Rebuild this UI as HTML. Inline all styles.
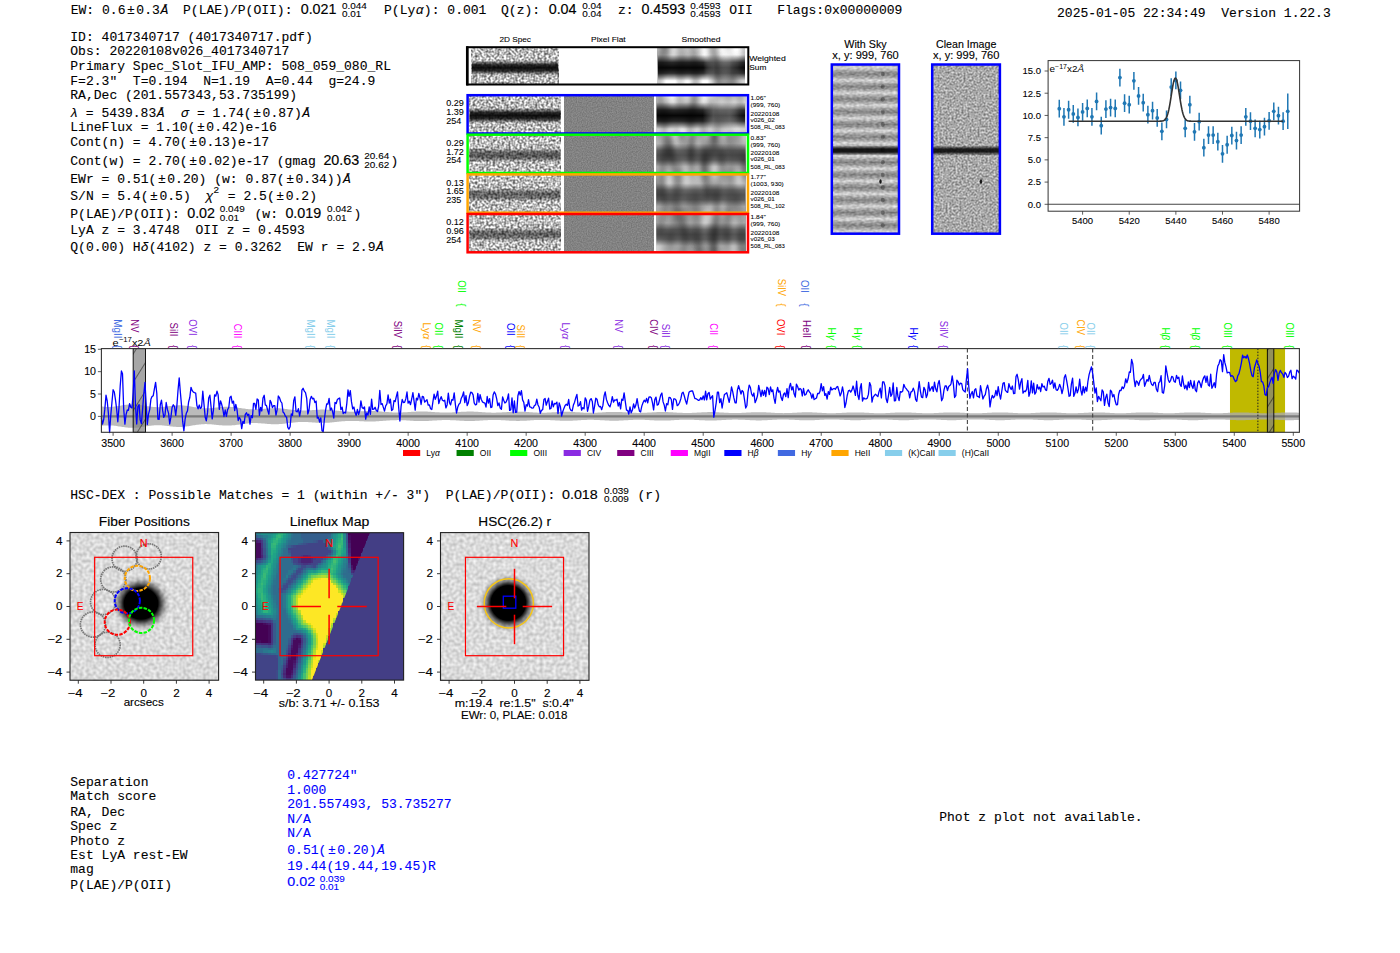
<!DOCTYPE html><html><head><meta charset="utf-8"><title>ELiXer report</title><style>html,body{margin:0;padding:0;background:#fff;width:1400px;height:953px;overflow:hidden}svg{display:block}</style></head><body><svg width="1400" height="953" viewBox="0 0 1400 953" style="white-space:pre"><defs><filter id="nz2d" x="0" y="0" width="1" height="1" color-interpolation-filters="sRGB"><feTurbulence type="fractalNoise" baseFrequency="0.45" numOctaves="1" seed="3"/><feColorMatrix type="matrix" values="1.4 0 0 0 0.03 1.4 0 0 0 0.03 1.4 0 0 0 0.03 0 0 0 0 1"/></filter><filter id="nzsm" x="0" y="0" width="1" height="1" color-interpolation-filters="sRGB"><feTurbulence type="fractalNoise" baseFrequency="0.09 0.03" numOctaves="1" seed="5"/><feGaussianBlur stdDeviation="1.0"/><feColorMatrix type="matrix" values="1.0 0 0 0 0.27 1.0 0 0 0 0.27 1.0 0 0 0 0.27 0 0 0 0 1"/></filter><filter id="nzpf" x="0" y="0" width="1" height="1" color-interpolation-filters="sRGB"><feTurbulence type="fractalNoise" baseFrequency="0.8" numOctaves="1" seed="9"/><feColorMatrix type="matrix" values="0.22 0 0 0 0.4 0.22 0 0 0 0.4 0.22 0 0 0 0.4 0 0 0 0 1"/></filter><filter id="nzcl" x="0" y="0" width="1" height="1" color-interpolation-filters="sRGB"><feTurbulence type="fractalNoise" baseFrequency="0.5" numOctaves="1" seed="11"/><feColorMatrix type="matrix" values="0.7 0 0 0 0.31 0.7 0 0 0 0.31 0.7 0 0 0 0.31 0 0 0 0 1"/></filter><filter id="nzsky" x="0" y="0" width="1" height="1" color-interpolation-filters="sRGB"><feTurbulence type="fractalNoise" baseFrequency="0.3 0.5" numOctaves="1" seed="13"/><feGaussianBlur stdDeviation="0.4"/><feColorMatrix type="matrix" values="1.6 0 0 0 -0.3 1.6 0 0 0 -0.3 1.6 0 0 0 -0.3 0 0 0 0 1"/></filter><filter id="nzbg" x="0" y="0" width="1" height="1" color-interpolation-filters="sRGB"><feTurbulence type="fractalNoise" baseFrequency="0.3" numOctaves="1" seed="17"/><feColorMatrix type="matrix" values="0.35 0 0 0 0.68 0.35 0 0 0 0.68 0.35 0 0 0 0.68 0 0 0 0 1"/></filter><linearGradient id="bandA" x1="0" y1="0" x2="0" y2="1"><stop offset="0.000" stop-color="#000" stop-opacity="0.00"/><stop offset="0.346" stop-color="#000" stop-opacity="0.00"/><stop offset="0.465" stop-color="#000" stop-opacity="0.79"/><stop offset="0.550" stop-color="#000" stop-opacity="0.93"/><stop offset="0.635" stop-color="#000" stop-opacity="0.79"/><stop offset="0.754" stop-color="#000" stop-opacity="0.00"/><stop offset="1.000" stop-color="#000" stop-opacity="0.00"/></linearGradient><linearGradient id="bandB" x1="0" y1="0" x2="0" y2="1"><stop offset="0.000" stop-color="#000" stop-opacity="0.00"/><stop offset="0.358" stop-color="#000" stop-opacity="0.00"/><stop offset="0.470" stop-color="#000" stop-opacity="0.47"/><stop offset="0.550" stop-color="#000" stop-opacity="0.55"/><stop offset="0.630" stop-color="#000" stop-opacity="0.47"/><stop offset="0.742" stop-color="#000" stop-opacity="0.00"/><stop offset="1.000" stop-color="#000" stop-opacity="0.00"/></linearGradient><linearGradient id="bandC" x1="0" y1="0" x2="0" y2="1"><stop offset="0.000" stop-color="#000" stop-opacity="0.00"/><stop offset="0.370" stop-color="#000" stop-opacity="0.00"/><stop offset="0.475" stop-color="#000" stop-opacity="0.42"/><stop offset="0.550" stop-color="#000" stop-opacity="0.50"/><stop offset="0.625" stop-color="#000" stop-opacity="0.42"/><stop offset="0.730" stop-color="#000" stop-opacity="0.00"/><stop offset="1.000" stop-color="#000" stop-opacity="0.00"/></linearGradient><filter id="nzsm2" x="0" y="0" width="1" height="1" color-interpolation-filters="sRGB"><feTurbulence type="fractalNoise" baseFrequency="0.1 0.03" numOctaves="1" seed="21"/><feGaussianBlur stdDeviation="1.2"/><feColorMatrix type="matrix" values="0.9 0 0 0 0.15 0.9 0 0 0 0.15 0.9 0 0 0 0.15 0 0 0 0 1"/></filter><linearGradient id="bandSA" x1="0" y1="0" x2="0" y2="1"><stop offset="0.000" stop-color="#000" stop-opacity="0.00"/><stop offset="0.190" stop-color="#000" stop-opacity="0.00"/><stop offset="0.400" stop-color="#000" stop-opacity="0.82"/><stop offset="0.550" stop-color="#000" stop-opacity="0.97"/><stop offset="0.700" stop-color="#000" stop-opacity="0.82"/><stop offset="0.910" stop-color="#000" stop-opacity="0.00"/><stop offset="1.000" stop-color="#000" stop-opacity="0.00"/></linearGradient><linearGradient id="bandSB" x1="0" y1="0" x2="0" y2="1"><stop offset="0.000" stop-color="#000" stop-opacity="0.00"/><stop offset="0.238" stop-color="#000" stop-opacity="0.00"/><stop offset="0.420" stop-color="#000" stop-opacity="0.47"/><stop offset="0.550" stop-color="#000" stop-opacity="0.55"/><stop offset="0.680" stop-color="#000" stop-opacity="0.47"/><stop offset="0.862" stop-color="#000" stop-opacity="0.00"/><stop offset="1.000" stop-color="#000" stop-opacity="0.00"/></linearGradient><linearGradient id="mgL" x1="0" y1="0" x2="1" y2="0"><stop offset="0" stop-color="#fff"/><stop offset="0.52" stop-color="#fff"/><stop offset="0.64" stop-color="#999"/><stop offset="0.82" stop-color="#aaa"/><stop offset="0.95" stop-color="#eee"/><stop offset="1" stop-color="#fff"/></linearGradient><mask id="mL" maskContentUnits="objectBoundingBox"><rect width="1" height="1" fill="url(#mgL)"/></mask><linearGradient id="strp" x1="0" y1="0" x2="0" y2="1"><stop offset="0" stop-color="#000" stop-opacity="0"/><stop offset="0.25" stop-color="#000" stop-opacity="0.28"/><stop offset="0.5" stop-color="#000" stop-opacity="0.45"/><stop offset="0.75" stop-color="#000" stop-opacity="0.28"/><stop offset="1" stop-color="#000" stop-opacity="0"/></linearGradient><pattern id="skyp" x="0" y="67.8" width="70" height="12.6" patternUnits="userSpaceOnUse"><rect width="70" height="12.6" fill="url(#strp)"/></pattern><linearGradient id="bandS" x1="0" y1="0" x2="0" y2="1"><stop offset="0" stop-color="#000" stop-opacity="0"/><stop offset="0.35" stop-color="#000" stop-opacity="0.85"/><stop offset="0.65" stop-color="#000" stop-opacity="0.85"/><stop offset="1" stop-color="#000" stop-opacity="0"/></linearGradient><pattern id="hatch" width="15" height="15" patternUnits="userSpaceOnUse" patternTransform="rotate(-58)"><line x1="0" y1="0" x2="15" y2="0" stroke="#000" stroke-width="0.9"/></pattern><radialGradient id="blobF" cx="0.5" cy="0.5" r="0.5"><stop offset="0" stop-color="#000" stop-opacity="1"/><stop offset="0.58" stop-color="#000" stop-opacity="1"/><stop offset="0.72" stop-color="#000" stop-opacity="0.55"/><stop offset="0.87" stop-color="#000" stop-opacity="0.15"/><stop offset="1" stop-color="#000" stop-opacity="0"/></radialGradient><radialGradient id="blobH" cx="0.5" cy="0.5" r="0.5"><stop offset="0" stop-color="#000" stop-opacity="1"/><stop offset="0.6" stop-color="#000" stop-opacity="1"/><stop offset="0.75" stop-color="#000" stop-opacity="0.45"/><stop offset="0.9" stop-color="#000" stop-opacity="0.12"/><stop offset="1" stop-color="#000" stop-opacity="0"/></radialGradient></defs><text transform="translate(70.70,14.30) scale(1,1.04)" font-family="Liberation Mono" font-size="13.04" fill="#000" stroke="#000" stroke-width="0.1">EW: 0.6<tspan dx="1.55">±</tspan><tspan dx="1.55">0</tspan>.3<tspan dx="0.55" font-style="italic">Å</tspan></text>
<text transform="translate(183.00,14.30) scale(1,1.04)" font-family="Liberation Mono" font-size="13.04" fill="#000" stroke="#000" stroke-width="0.1">P(LAE)/P(OII):</text>
<text transform="translate(300.70,14.30) scale(1,1.04)" font-family="Liberation Sans" font-size="13.25" fill="#000" textLength="35.78" lengthAdjust="spacingAndGlyphs" stroke="#000" stroke-width="0.15">0.021</text>
<text x="342.00" y="8.60" font-family="Liberation Sans" font-size="9.22" fill="#000" textLength="24.91" lengthAdjust="spacingAndGlyphs" stroke="#000" stroke-width="0.10">0.044</text>
<text x="342.00" y="17.40" font-family="Liberation Sans" font-size="9.22" fill="#000" textLength="19.37" lengthAdjust="spacingAndGlyphs" stroke="#000" stroke-width="0.10">0.01</text>
<text transform="translate(384.00,14.30) scale(1,1.04)" font-family="Liberation Mono" font-size="13.04" fill="#000" stroke="#000" stroke-width="0.1">P(Ly<tspan dx="0.38" font-style="italic">α</tspan><tspan dx="0.38">)</tspan>: 0.001</text>
<text transform="translate(501.00,14.30) scale(1,1.04)" font-family="Liberation Mono" font-size="13.04" fill="#000" stroke="#000" stroke-width="0.1">Q(z):</text>
<text transform="translate(548.70,14.30) scale(1,1.04)" font-family="Liberation Sans" font-size="13.25" fill="#000" textLength="27.83" lengthAdjust="spacingAndGlyphs" stroke="#000" stroke-width="0.15">0.04</text>
<text x="582.20" y="8.60" font-family="Liberation Sans" font-size="9.22" fill="#000" textLength="19.37" lengthAdjust="spacingAndGlyphs" stroke="#000" stroke-width="0.10">0.04</text>
<text x="582.20" y="17.40" font-family="Liberation Sans" font-size="9.22" fill="#000" textLength="19.37" lengthAdjust="spacingAndGlyphs" stroke="#000" stroke-width="0.10">0.04</text>
<text transform="translate(618.00,14.30) scale(1,1.04)" font-family="Liberation Mono" font-size="13.04" fill="#000" stroke="#000" stroke-width="0.1">z:</text>
<text transform="translate(641.40,14.30) scale(1,1.04)" font-family="Liberation Sans" font-size="13.25" fill="#000" textLength="43.74" lengthAdjust="spacingAndGlyphs" stroke="#000" stroke-width="0.15">0.4593</text>
<text x="690.20" y="8.60" font-family="Liberation Sans" font-size="9.22" fill="#000" textLength="30.44" lengthAdjust="spacingAndGlyphs" stroke="#000" stroke-width="0.10">0.4593</text>
<text x="690.20" y="17.40" font-family="Liberation Sans" font-size="9.22" fill="#000" textLength="30.44" lengthAdjust="spacingAndGlyphs" stroke="#000" stroke-width="0.10">0.4593</text>
<text transform="translate(729.30,14.30) scale(1,1.04)" font-family="Liberation Mono" font-size="13.04" fill="#000" stroke="#000" stroke-width="0.1">OII</text>
<text transform="translate(777.20,14.30) scale(1,1.04)" font-family="Liberation Mono" font-size="13.04" fill="#000" stroke="#000" stroke-width="0.1">Flags:0x00000009</text>
<text transform="translate(1057.00,16.90) scale(1,1.04)" font-family="Liberation Mono" font-size="13.04" fill="#000" stroke="#000" stroke-width="0.1">2025-01-05 22:34:49  Version 1.22.3</text>
<text transform="translate(70.30,40.60) scale(1,1.04)" font-family="Liberation Mono" font-size="13.04" fill="#000" stroke="#000" stroke-width="0.1">ID: 4017340717 (4017340717.pdf)</text>
<text transform="translate(70.30,54.80) scale(1,1.04)" font-family="Liberation Mono" font-size="13.04" fill="#000" stroke="#000" stroke-width="0.1">Obs: 20220108v026_4017340717</text>
<text transform="translate(70.30,69.80) scale(1,1.04)" font-family="Liberation Mono" font-size="13.04" fill="#000" stroke="#000" stroke-width="0.1">Primary Spec_Slot_IFU_AMP: 508_059_080_RL</text>
<text transform="translate(70.30,84.80) scale(1,1.04)" font-family="Liberation Mono" font-size="13.04" fill="#000" stroke="#000" stroke-width="0.1">F=2.3"  T=0.194  N=1.19  A=0.44  g=24.9</text>
<text transform="translate(70.30,99.40) scale(1,1.04)" font-family="Liberation Mono" font-size="13.04" fill="#000" stroke="#000" stroke-width="0.1">RA,Dec (201.557343,53.735199)</text>
<text transform="translate(70.30,116.80) scale(1,1.04)" font-family="Liberation Mono" font-size="13.04" fill="#000" stroke="#000" stroke-width="0.1"><tspan dx="-0.05" font-style="italic">λ</tspan><tspan dx="-0.05"> </tspan>= 5439.83<tspan dx="0.55" font-style="italic">Å</tspan><tspan dx="0.55"> </tspan> <tspan dx="0.22" font-style="italic">σ</tspan><tspan dx="0.22"> </tspan>= 1.74(<tspan dx="1.55">±</tspan><tspan dx="1.55">0</tspan>.87)<tspan dx="0.55" font-style="italic">Å</tspan></text>
<text transform="translate(70.30,131.20) scale(1,1.04)" font-family="Liberation Mono" font-size="13.04" fill="#000" stroke="#000" stroke-width="0.1">LineFlux = 1.10(<tspan dx="1.55">±</tspan><tspan dx="1.55">0</tspan>.42)e-16</text>
<text transform="translate(70.30,146.40) scale(1,1.04)" font-family="Liberation Mono" font-size="13.04" fill="#000" stroke="#000" stroke-width="0.1">Cont(n) = 4.70(<tspan dx="1.55">±</tspan><tspan dx="1.55">0</tspan>.13)e-17</text>
<text transform="translate(70.30,164.80) scale(1,1.04)" font-family="Liberation Mono" font-size="13.04" fill="#000" stroke="#000" stroke-width="0.1">Cont(w) = 2.70(<tspan dx="1.55">±</tspan><tspan dx="1.55">0</tspan>.02)e-17 (gmag</text>
<text transform="translate(70.30,182.50) scale(1,1.04)" font-family="Liberation Mono" font-size="13.04" fill="#000" stroke="#000" stroke-width="0.1">EWr = 0.51(<tspan dx="1.55">±</tspan><tspan dx="1.55">0</tspan>.20) (w: 0.87(<tspan dx="1.55">±</tspan><tspan dx="1.55">0</tspan>.34))<tspan dx="0.55" font-style="italic">Å</tspan></text>
<text transform="translate(70.30,200.30) scale(1,1.04)" font-family="Liberation Mono" font-size="13.04" fill="#000" stroke="#000" stroke-width="0.1">S/N = 5.4(<tspan dx="1.55">±</tspan><tspan dx="1.55">0</tspan>.5)</text>
<text transform="translate(70.30,218.00) scale(1,1.04)" font-family="Liberation Mono" font-size="13.04" fill="#000" stroke="#000" stroke-width="0.1">P(LAE)/P(OII):</text>
<text transform="translate(70.30,234.40) scale(1,1.04)" font-family="Liberation Mono" font-size="13.04" fill="#000" stroke="#000" stroke-width="0.1">LyA z = 3.4748  OII z = 0.4593</text>
<text transform="translate(70.30,251.40) scale(1,1.04)" font-family="Liberation Mono" font-size="13.04" fill="#000" stroke="#000" stroke-width="0.1">Q(0.00) H<tspan dx="0.08" font-style="italic">δ</tspan><tspan dx="0.08">(</tspan>4102) z = 0.3262  EW r = 2.9<tspan dx="0.55" font-style="italic">Å</tspan></text>
<text transform="translate(323.40,164.80) scale(1,1.04)" font-family="Liberation Sans" font-size="13.25" fill="#000" textLength="35.78" lengthAdjust="spacingAndGlyphs" stroke="#000" stroke-width="0.15">20.63</text>
<text x="364.30" y="159.10" font-family="Liberation Sans" font-size="9.22" fill="#000" textLength="24.91" lengthAdjust="spacingAndGlyphs" stroke="#000" stroke-width="0.10">20.64</text>
<text x="364.30" y="167.70" font-family="Liberation Sans" font-size="9.22" fill="#000" textLength="24.91" lengthAdjust="spacingAndGlyphs" stroke="#000" stroke-width="0.10">20.62</text>
<text transform="translate(390.50,164.80) scale(1,1.04)" font-family="Liberation Mono" font-size="13.04" fill="#000" stroke="#000" stroke-width="0.1">)</text>
<text transform="translate(205.60,200.30) scale(1,1.04)" font-family="Liberation Mono" font-size="13.04" fill="#000" stroke="#000" stroke-width="0.1"><tspan dx="-0.05" font-style="italic">χ</tspan></text>
<text x="213.60" y="193.30" font-family="Liberation Sans" font-size="9.22" fill="#000" textLength="5.54" lengthAdjust="spacingAndGlyphs" stroke="#000" stroke-width="0.10">2</text>
<text transform="translate(227.80,200.30) scale(1,1.04)" font-family="Liberation Mono" font-size="13.04" fill="#000" stroke="#000" stroke-width="0.1">= 2.5(<tspan dx="1.55">±</tspan><tspan dx="1.55">0</tspan>.2)</text>
<text transform="translate(187.20,218.00) scale(1,1.04)" font-family="Liberation Sans" font-size="13.25" fill="#000" textLength="27.83" lengthAdjust="spacingAndGlyphs" stroke="#000" stroke-width="0.15">0.02</text>
<text x="219.80" y="212.20" font-family="Liberation Sans" font-size="9.22" fill="#000" textLength="24.91" lengthAdjust="spacingAndGlyphs" stroke="#000" stroke-width="0.10">0.049</text>
<text x="219.80" y="220.80" font-family="Liberation Sans" font-size="9.22" fill="#000" textLength="19.37" lengthAdjust="spacingAndGlyphs" stroke="#000" stroke-width="0.10">0.01</text>
<text transform="translate(254.50,218.00) scale(1,1.04)" font-family="Liberation Mono" font-size="13.04" fill="#000" stroke="#000" stroke-width="0.1">(w:</text>
<text transform="translate(285.40,218.00) scale(1,1.04)" font-family="Liberation Sans" font-size="13.25" fill="#000" textLength="35.78" lengthAdjust="spacingAndGlyphs" stroke="#000" stroke-width="0.15">0.019</text>
<text x="327.10" y="212.20" font-family="Liberation Sans" font-size="9.22" fill="#000" textLength="24.91" lengthAdjust="spacingAndGlyphs" stroke="#000" stroke-width="0.10">0.042</text>
<text x="327.10" y="220.80" font-family="Liberation Sans" font-size="9.22" fill="#000" textLength="19.37" lengthAdjust="spacingAndGlyphs" stroke="#000" stroke-width="0.10">0.01</text>
<text transform="translate(353.50,218.00) scale(1,1.04)" font-family="Liberation Mono" font-size="13.04" fill="#000" stroke="#000" stroke-width="0.1">)</text>
<text x="515.20" y="41.90" font-family="Liberation Sans" font-size="8.06" fill="#000" text-anchor="middle" textLength="31.61" lengthAdjust="spacingAndGlyphs" stroke="#000" stroke-width="0.09">2D Spec</text>
<text x="608.40" y="41.90" font-family="Liberation Sans" font-size="8.06" fill="#000" text-anchor="middle" textLength="34.52" lengthAdjust="spacingAndGlyphs" stroke="#000" stroke-width="0.09">Pixel Flat</text>
<text x="701.00" y="41.90" font-family="Liberation Sans" font-size="8.06" fill="#000" text-anchor="middle" textLength="38.82" lengthAdjust="spacingAndGlyphs" stroke="#000" stroke-width="0.09">Smoothed</text>
<rect x="471.90" y="48.00" width="86.40" height="36.00" fill="#888" filter="url(#nz2d)"/>
<rect x="471.90" y="48.00" width="86.40" height="36.00" fill="url(#bandA)"/>
<rect x="657.90" y="48.00" width="87.10" height="36.00" fill="#888" filter="url(#nzsm)"/>
<rect x="657.90" y="48.00" width="87.10" height="36.00" fill="url(#bandSA)" mask="url(#mL)"/>
<rect x="467.40" y="47.20" width="280.90" height="37.30" fill="none" stroke="#000" stroke-width="2"/>
<line x1="467.20" y1="46.20" x2="467.20" y2="85.50" stroke="#000" stroke-width="2.5"/>
<text x="749.30" y="61.40" font-family="Liberation Sans" font-size="8.06" fill="#000" textLength="36.42" lengthAdjust="spacingAndGlyphs" stroke="#000" stroke-width="0.09">Weighted</text>
<text x="749.30" y="70.20" font-family="Liberation Sans" font-size="8.06" fill="#000" textLength="17.04" lengthAdjust="spacingAndGlyphs" stroke="#000" stroke-width="0.09">Sum</text>
<rect x="469.50" y="95.20" width="91.00" height="37.10" fill="#888" filter="url(#nz2d)"/>
<rect x="469.50" y="95.20" width="91.00" height="37.10" fill="url(#bandA)"/>
<rect x="564.20" y="95.20" width="89.60" height="37.10" fill="#808080" filter="url(#nzpf)"/>
<rect x="656.40" y="95.20" width="89.00" height="37.10" fill="#888" filter="url(#nzsm)"/>
<rect x="656.40" y="95.20" width="89.00" height="37.10" fill="url(#bandSA)" mask="url(#mL)"/>
<rect x="467.60" y="95.20" width="280.40" height="38.30" fill="none" stroke="#0000ff" stroke-width="2.5"/>
<text x="446.20" y="106.30" font-family="Liberation Sans" font-size="8.37" fill="#000" textLength="17.59" lengthAdjust="spacingAndGlyphs" stroke="#000" stroke-width="0.09">0.29</text>
<text x="446.20" y="115.00" font-family="Liberation Sans" font-size="8.37" fill="#000" textLength="17.59" lengthAdjust="spacingAndGlyphs" stroke="#000" stroke-width="0.09">1.39</text>
<text x="446.20" y="123.70" font-family="Liberation Sans" font-size="8.37" fill="#000" textLength="15.08" lengthAdjust="spacingAndGlyphs" stroke="#000" stroke-width="0.09">254</text>
<text x="750.60" y="100.00" font-family="Liberation Sans" font-size="5.99" fill="#000" textLength="15.18" lengthAdjust="spacingAndGlyphs" stroke="#000" stroke-width="0.07">1.06"</text>
<text x="750.60" y="107.10" font-family="Liberation Sans" font-size="5.99" fill="#000" textLength="29.57" lengthAdjust="spacingAndGlyphs" stroke="#000" stroke-width="0.07">(999, 760)</text>
<text x="750.60" y="115.70" font-family="Liberation Sans" font-size="5.99" fill="#000" textLength="28.76" lengthAdjust="spacingAndGlyphs" stroke="#000" stroke-width="0.07">20220108</text>
<text x="750.60" y="121.80" font-family="Liberation Sans" font-size="5.99" fill="#000" textLength="24.14" lengthAdjust="spacingAndGlyphs" stroke="#000" stroke-width="0.07">v026_02</text>
<text x="750.60" y="129.10" font-family="Liberation Sans" font-size="5.99" fill="#000" textLength="34.29" lengthAdjust="spacingAndGlyphs" stroke="#000" stroke-width="0.07">508_RL_083</text>
<rect x="469.50" y="134.70" width="91.00" height="37.10" fill="#888" filter="url(#nz2d)"/>
<rect x="469.50" y="134.70" width="91.00" height="37.10" fill="url(#bandB)"/>
<rect x="564.20" y="134.70" width="89.60" height="37.10" fill="#808080" filter="url(#nzpf)"/>
<rect x="656.40" y="134.70" width="89.00" height="37.10" fill="#888" filter="url(#nzsm2)"/>
<rect x="656.40" y="134.70" width="89.00" height="37.10" fill="url(#bandSB)"/>
<rect x="467.60" y="134.70" width="280.40" height="38.30" fill="none" stroke="#00ff00" stroke-width="2.5"/>
<text x="446.20" y="145.80" font-family="Liberation Sans" font-size="8.37" fill="#000" textLength="17.59" lengthAdjust="spacingAndGlyphs" stroke="#000" stroke-width="0.09">0.29</text>
<text x="446.20" y="154.50" font-family="Liberation Sans" font-size="8.37" fill="#000" textLength="17.59" lengthAdjust="spacingAndGlyphs" stroke="#000" stroke-width="0.09">1.72</text>
<text x="446.20" y="163.20" font-family="Liberation Sans" font-size="8.37" fill="#000" textLength="15.08" lengthAdjust="spacingAndGlyphs" stroke="#000" stroke-width="0.09">254</text>
<text x="750.60" y="139.50" font-family="Liberation Sans" font-size="5.99" fill="#000" textLength="15.18" lengthAdjust="spacingAndGlyphs" stroke="#000" stroke-width="0.07">0.83"</text>
<text x="750.60" y="146.60" font-family="Liberation Sans" font-size="5.99" fill="#000" textLength="29.57" lengthAdjust="spacingAndGlyphs" stroke="#000" stroke-width="0.07">(999, 760)</text>
<text x="750.60" y="155.20" font-family="Liberation Sans" font-size="5.99" fill="#000" textLength="28.76" lengthAdjust="spacingAndGlyphs" stroke="#000" stroke-width="0.07">20220108</text>
<text x="750.60" y="161.30" font-family="Liberation Sans" font-size="5.99" fill="#000" textLength="24.14" lengthAdjust="spacingAndGlyphs" stroke="#000" stroke-width="0.07">v026_01</text>
<text x="750.60" y="168.60" font-family="Liberation Sans" font-size="5.99" fill="#000" textLength="34.29" lengthAdjust="spacingAndGlyphs" stroke="#000" stroke-width="0.07">508_RL_083</text>
<rect x="469.50" y="174.40" width="91.00" height="37.10" fill="#888" filter="url(#nz2d)"/>
<rect x="469.50" y="174.40" width="91.00" height="37.10" fill="url(#bandC)"/>
<rect x="564.20" y="174.40" width="89.60" height="37.10" fill="#808080" filter="url(#nzpf)"/>
<rect x="656.40" y="174.40" width="89.00" height="37.10" fill="#888" filter="url(#nzsm2)"/>
<rect x="656.40" y="174.40" width="89.00" height="37.10" fill="url(#bandSB)"/>
<rect x="467.60" y="174.40" width="280.40" height="38.30" fill="none" stroke="#ffa500" stroke-width="2.5"/>
<text x="446.20" y="185.50" font-family="Liberation Sans" font-size="8.37" fill="#000" textLength="17.59" lengthAdjust="spacingAndGlyphs" stroke="#000" stroke-width="0.09">0.13</text>
<text x="446.20" y="194.20" font-family="Liberation Sans" font-size="8.37" fill="#000" textLength="17.59" lengthAdjust="spacingAndGlyphs" stroke="#000" stroke-width="0.09">1.65</text>
<text x="446.20" y="202.90" font-family="Liberation Sans" font-size="8.37" fill="#000" textLength="15.08" lengthAdjust="spacingAndGlyphs" stroke="#000" stroke-width="0.09">235</text>
<text x="750.60" y="179.20" font-family="Liberation Sans" font-size="5.99" fill="#000" textLength="15.18" lengthAdjust="spacingAndGlyphs" stroke="#000" stroke-width="0.07">1.77"</text>
<text x="750.60" y="186.30" font-family="Liberation Sans" font-size="5.99" fill="#000" textLength="33.16" lengthAdjust="spacingAndGlyphs" stroke="#000" stroke-width="0.07">(1003, 930)</text>
<text x="750.60" y="194.90" font-family="Liberation Sans" font-size="5.99" fill="#000" textLength="28.76" lengthAdjust="spacingAndGlyphs" stroke="#000" stroke-width="0.07">20220108</text>
<text x="750.60" y="201.00" font-family="Liberation Sans" font-size="5.99" fill="#000" textLength="24.14" lengthAdjust="spacingAndGlyphs" stroke="#000" stroke-width="0.07">v026_01</text>
<text x="750.60" y="208.30" font-family="Liberation Sans" font-size="5.99" fill="#000" textLength="34.29" lengthAdjust="spacingAndGlyphs" stroke="#000" stroke-width="0.07">508_RL_102</text>
<rect x="469.50" y="214.00" width="91.00" height="37.10" fill="#888" filter="url(#nz2d)"/>
<rect x="469.50" y="214.00" width="91.00" height="37.10" fill="url(#bandC)"/>
<rect x="564.20" y="214.00" width="89.60" height="37.10" fill="#808080" filter="url(#nzpf)"/>
<rect x="656.40" y="214.00" width="89.00" height="37.10" fill="#888" filter="url(#nzsm2)"/>
<rect x="656.40" y="214.00" width="89.00" height="37.10" fill="url(#bandSB)"/>
<rect x="467.60" y="214.00" width="280.40" height="38.30" fill="none" stroke="#ff0000" stroke-width="2.5"/>
<text x="446.20" y="225.10" font-family="Liberation Sans" font-size="8.37" fill="#000" textLength="17.59" lengthAdjust="spacingAndGlyphs" stroke="#000" stroke-width="0.09">0.12</text>
<text x="446.20" y="233.80" font-family="Liberation Sans" font-size="8.37" fill="#000" textLength="17.59" lengthAdjust="spacingAndGlyphs" stroke="#000" stroke-width="0.09">0.96</text>
<text x="446.20" y="242.50" font-family="Liberation Sans" font-size="8.37" fill="#000" textLength="15.08" lengthAdjust="spacingAndGlyphs" stroke="#000" stroke-width="0.09">254</text>
<text x="750.60" y="218.80" font-family="Liberation Sans" font-size="5.99" fill="#000" textLength="15.18" lengthAdjust="spacingAndGlyphs" stroke="#000" stroke-width="0.07">1.84"</text>
<text x="750.60" y="225.90" font-family="Liberation Sans" font-size="5.99" fill="#000" textLength="29.57" lengthAdjust="spacingAndGlyphs" stroke="#000" stroke-width="0.07">(999, 760)</text>
<text x="750.60" y="234.50" font-family="Liberation Sans" font-size="5.99" fill="#000" textLength="28.76" lengthAdjust="spacingAndGlyphs" stroke="#000" stroke-width="0.07">20220108</text>
<text x="750.60" y="240.60" font-family="Liberation Sans" font-size="5.99" fill="#000" textLength="24.14" lengthAdjust="spacingAndGlyphs" stroke="#000" stroke-width="0.07">v026_03</text>
<text x="750.60" y="247.90" font-family="Liberation Sans" font-size="5.99" fill="#000" textLength="34.29" lengthAdjust="spacingAndGlyphs" stroke="#000" stroke-width="0.07">508_RL_083</text>
<text x="865.50" y="47.70" font-family="Liberation Sans" font-size="10.18" fill="#000" text-anchor="middle" textLength="42.39" lengthAdjust="spacingAndGlyphs" stroke="#000" stroke-width="0.12">With Sky</text>
<text x="865.50" y="58.60" font-family="Liberation Sans" font-size="10.18" fill="#000" text-anchor="middle" textLength="66.5" lengthAdjust="spacingAndGlyphs" stroke="#000" stroke-width="0.12">x, y: 999, 760</text>
<text x="966.20" y="47.70" font-family="Liberation Sans" font-size="10.18" fill="#000" text-anchor="middle" textLength="60.36" lengthAdjust="spacingAndGlyphs" stroke="#000" stroke-width="0.12">Clean Image</text>
<text x="966.20" y="58.60" font-family="Liberation Sans" font-size="10.18" fill="#000" text-anchor="middle" textLength="66.5" lengthAdjust="spacingAndGlyphs" stroke="#000" stroke-width="0.12">x, y: 999, 760</text>
<rect x="832.00" y="64.60" width="67.00" height="169.00" fill="#f2f2f2"/>
<rect x="832.00" y="64.60" width="67.00" height="169.00" fill="url(#skyp)"/>
<rect x="832.00" y="64.60" width="67.00" height="169.00" fill="#888" filter="url(#nzsky)" opacity="0.22"/>
<rect x="832.00" y="145.50" width="67.00" height="10.00" fill="url(#bandS)"/>
<ellipse cx="882.8" cy="74.1" rx="2.0" ry="2.4" fill="#000" opacity="0.3"/>
<ellipse cx="882.8" cy="86.7" rx="2.0" ry="2.4" fill="#000" opacity="0.3"/>
<ellipse cx="882.8" cy="99.3" rx="2.0" ry="2.4" fill="#000" opacity="0.3"/>
<ellipse cx="882.8" cy="111.9" rx="2.0" ry="2.4" fill="#000" opacity="0.3"/>
<ellipse cx="882.8" cy="124.5" rx="2.0" ry="2.4" fill="#000" opacity="0.3"/>
<ellipse cx="882.8" cy="137.1" rx="2.0" ry="2.4" fill="#000" opacity="0.3"/>
<ellipse cx="882.8" cy="149.7" rx="2.0" ry="2.4" fill="#000" opacity="0.3"/>
<ellipse cx="882.8" cy="162.3" rx="2.0" ry="2.4" fill="#000" opacity="0.3"/>
<ellipse cx="882.8" cy="174.9" rx="2.0" ry="2.4" fill="#000" opacity="0.3"/>
<ellipse cx="882.8" cy="187.5" rx="2.0" ry="2.4" fill="#000" opacity="0.3"/>
<ellipse cx="882.8" cy="200.1" rx="2.0" ry="2.4" fill="#000" opacity="0.3"/>
<ellipse cx="882.8" cy="212.7" rx="2.0" ry="2.4" fill="#000" opacity="0.3"/>
<ellipse cx="882.8" cy="225.3" rx="2.0" ry="2.4" fill="#000" opacity="0.3"/>
<ellipse cx="880.5" cy="181.5" rx="1.2" ry="2.2" fill="#000" opacity="0.9"/>
<rect x="831.80" y="64.50" width="67.20" height="169.20" fill="none" stroke="#0000ff" stroke-width="2.5"/>
<rect x="932.30" y="64.60" width="67.60" height="169.00" fill="#888" filter="url(#nzcl)"/>
<rect x="932.30" y="145.50" width="67.60" height="10.00" fill="url(#bandS)"/>
<ellipse cx="981" cy="181.5" rx="1.3" ry="2.2" fill="#000" opacity="0.85"/>
<rect x="932.20" y="64.50" width="67.70" height="169.20" fill="none" stroke="#0000ff" stroke-width="2.5"/>
<rect x="1048.10" y="60.60" width="251.50" height="150.60" fill="#fff"/>
<line x1="1048.10" y1="204.30" x2="1299.60" y2="204.30" stroke="#444" stroke-width="1.1"/>
<path d="M1059.28 99.79V117.56 M1063.95 107.96V125.74 M1068.61 100.86V118.63 M1073.27 105.03V122.81 M1077.94 108.59V126.36 M1082.60 103.08V120.85 M1087.26 99.52V117.30 M1091.93 107.96V125.74 M1096.59 92.50V110.28 M1101.25 116.76V134.54 M1105.91 100.23V118.01 M1110.58 98.72V116.50 M1115.24 99.52V117.30 M1119.90 68.68V86.46 M1124.57 94.28V112.05 M1129.23 95.79V113.56 M1133.89 71.97V89.75 M1138.56 86.99V104.77 M1143.22 93.83V111.61 M1147.88 105.74V123.52 M1152.54 101.74V119.52 M1157.21 109.03V126.81 M1161.87 122.45V140.22 M1166.53 110.54V128.32 M1171.20 78.19V95.97 M1175.86 71.53V89.30 M1180.52 81.48V99.26 M1185.19 119.43V137.20 M1189.85 95.79V113.56 M1194.51 122.90V140.67 M1199.17 112.76V130.54 M1203.84 138.80V156.58 M1208.50 126.18V143.96 M1213.16 126.18V143.96 M1217.83 132.85V150.62 M1222.49 144.93V162.71 M1227.15 135.87V153.64 M1231.82 126.63V144.40 M1236.48 131.69V149.47 M1241.14 126.18V143.96 M1245.80 107.96V125.74 M1250.47 112.32V130.09 M1255.13 119.43V137.20 M1259.79 120.67V138.45 M1264.46 117.83V135.60 M1269.12 111.88V129.65 M1273.78 102.45V120.23 M1278.45 106.81V124.58 M1283.11 112.32V130.09 M1287.77 93.57V129.12" stroke="#1f77b4" stroke-width="1.5" fill="none"/>
<circle cx="1059.28" cy="108.68" r="1.9" fill="#1f77b4"/>
<circle cx="1063.95" cy="116.85" r="1.9" fill="#1f77b4"/>
<circle cx="1068.61" cy="109.74" r="1.9" fill="#1f77b4"/>
<circle cx="1073.27" cy="113.92" r="1.9" fill="#1f77b4"/>
<circle cx="1077.94" cy="117.47" r="1.9" fill="#1f77b4"/>
<circle cx="1082.60" cy="111.96" r="1.9" fill="#1f77b4"/>
<circle cx="1087.26" cy="108.41" r="1.9" fill="#1f77b4"/>
<circle cx="1091.93" cy="116.85" r="1.9" fill="#1f77b4"/>
<circle cx="1096.59" cy="101.39" r="1.9" fill="#1f77b4"/>
<circle cx="1101.25" cy="125.65" r="1.9" fill="#1f77b4"/>
<circle cx="1105.91" cy="109.12" r="1.9" fill="#1f77b4"/>
<circle cx="1110.58" cy="107.61" r="1.9" fill="#1f77b4"/>
<circle cx="1115.24" cy="108.41" r="1.9" fill="#1f77b4"/>
<circle cx="1119.90" cy="77.57" r="1.9" fill="#1f77b4"/>
<circle cx="1124.57" cy="103.17" r="1.9" fill="#1f77b4"/>
<circle cx="1129.23" cy="104.68" r="1.9" fill="#1f77b4"/>
<circle cx="1133.89" cy="80.86" r="1.9" fill="#1f77b4"/>
<circle cx="1138.56" cy="95.88" r="1.9" fill="#1f77b4"/>
<circle cx="1143.22" cy="102.72" r="1.9" fill="#1f77b4"/>
<circle cx="1147.88" cy="114.63" r="1.9" fill="#1f77b4"/>
<circle cx="1152.54" cy="110.63" r="1.9" fill="#1f77b4"/>
<circle cx="1157.21" cy="117.92" r="1.9" fill="#1f77b4"/>
<circle cx="1161.87" cy="131.34" r="1.9" fill="#1f77b4"/>
<circle cx="1166.53" cy="119.43" r="1.9" fill="#1f77b4"/>
<circle cx="1171.20" cy="87.08" r="1.9" fill="#1f77b4"/>
<circle cx="1175.86" cy="80.42" r="1.9" fill="#1f77b4"/>
<circle cx="1180.52" cy="90.37" r="1.9" fill="#1f77b4"/>
<circle cx="1185.19" cy="128.32" r="1.9" fill="#1f77b4"/>
<circle cx="1189.85" cy="104.68" r="1.9" fill="#1f77b4"/>
<circle cx="1194.51" cy="131.78" r="1.9" fill="#1f77b4"/>
<circle cx="1199.17" cy="121.65" r="1.9" fill="#1f77b4"/>
<circle cx="1203.84" cy="147.69" r="1.9" fill="#1f77b4"/>
<circle cx="1208.50" cy="135.07" r="1.9" fill="#1f77b4"/>
<circle cx="1213.16" cy="135.07" r="1.9" fill="#1f77b4"/>
<circle cx="1217.83" cy="141.74" r="1.9" fill="#1f77b4"/>
<circle cx="1222.49" cy="153.82" r="1.9" fill="#1f77b4"/>
<circle cx="1227.15" cy="144.76" r="1.9" fill="#1f77b4"/>
<circle cx="1231.82" cy="135.51" r="1.9" fill="#1f77b4"/>
<circle cx="1236.48" cy="140.58" r="1.9" fill="#1f77b4"/>
<circle cx="1241.14" cy="135.07" r="1.9" fill="#1f77b4"/>
<circle cx="1245.80" cy="116.85" r="1.9" fill="#1f77b4"/>
<circle cx="1250.47" cy="121.21" r="1.9" fill="#1f77b4"/>
<circle cx="1255.13" cy="128.32" r="1.9" fill="#1f77b4"/>
<circle cx="1259.79" cy="129.56" r="1.9" fill="#1f77b4"/>
<circle cx="1264.46" cy="126.72" r="1.9" fill="#1f77b4"/>
<circle cx="1269.12" cy="120.76" r="1.9" fill="#1f77b4"/>
<circle cx="1273.78" cy="111.34" r="1.9" fill="#1f77b4"/>
<circle cx="1278.45" cy="115.70" r="1.9" fill="#1f77b4"/>
<circle cx="1283.11" cy="121.21" r="1.9" fill="#1f77b4"/>
<circle cx="1287.77" cy="111.34" r="1.9" fill="#1f77b4"/>
<polyline points="1068.61,121.21 1069.08,121.21 1069.54,121.21 1070.01,121.21 1070.48,121.21 1070.94,121.21 1071.41,121.21 1071.88,121.21 1072.34,121.21 1072.81,121.21 1073.27,121.21 1073.74,121.21 1074.21,121.21 1074.67,121.21 1075.14,121.21 1075.61,121.21 1076.07,121.21 1076.54,121.21 1077.00,121.21 1077.47,121.21 1077.94,121.21 1078.40,121.21 1078.87,121.21 1079.34,121.21 1079.80,121.21 1080.27,121.21 1080.73,121.21 1081.20,121.21 1081.67,121.21 1082.13,121.21 1082.60,121.21 1083.07,121.21 1083.53,121.21 1084.00,121.21 1084.47,121.21 1084.93,121.21 1085.40,121.21 1085.86,121.21 1086.33,121.21 1086.80,121.21 1087.26,121.21 1087.73,121.21 1088.20,121.21 1088.66,121.21 1089.13,121.21 1089.59,121.21 1090.06,121.21 1090.53,121.21 1090.99,121.21 1091.46,121.21 1091.93,121.21 1092.39,121.21 1092.86,121.21 1093.32,121.21 1093.79,121.21 1094.26,121.21 1094.72,121.21 1095.19,121.21 1095.66,121.21 1096.12,121.21 1096.59,121.21 1097.06,121.21 1097.52,121.21 1097.99,121.21 1098.45,121.21 1098.92,121.21 1099.39,121.21 1099.85,121.21 1100.32,121.21 1100.79,121.21 1101.25,121.21 1101.72,121.21 1102.18,121.21 1102.65,121.21 1103.12,121.21 1103.58,121.21 1104.05,121.21 1104.52,121.21 1104.98,121.21 1105.45,121.21 1105.91,121.21 1106.38,121.21 1106.85,121.21 1107.31,121.21 1107.78,121.21 1108.25,121.21 1108.71,121.21 1109.18,121.21 1109.65,121.21 1110.11,121.21 1110.58,121.21 1111.04,121.21 1111.51,121.21 1111.98,121.21 1112.44,121.21 1112.91,121.21 1113.38,121.21 1113.84,121.21 1114.31,121.21 1114.77,121.21 1115.24,121.21 1115.71,121.21 1116.17,121.21 1116.64,121.21 1117.11,121.21 1117.57,121.21 1118.04,121.21 1118.51,121.21 1118.97,121.21 1119.44,121.21 1119.90,121.21 1120.37,121.21 1120.84,121.21 1121.30,121.21 1121.77,121.21 1122.24,121.21 1122.70,121.21 1123.17,121.21 1123.63,121.21 1124.10,121.21 1124.57,121.21 1125.03,121.21 1125.50,121.21 1125.97,121.21 1126.43,121.21 1126.90,121.21 1127.36,121.21 1127.83,121.21 1128.30,121.21 1128.76,121.21 1129.23,121.21 1129.70,121.21 1130.16,121.21 1130.63,121.21 1131.10,121.21 1131.56,121.21 1132.03,121.21 1132.49,121.21 1132.96,121.21 1133.43,121.21 1133.89,121.21 1134.36,121.21 1134.83,121.21 1135.29,121.21 1135.76,121.21 1136.22,121.21 1136.69,121.21 1137.16,121.21 1137.62,121.21 1138.09,121.21 1138.56,121.21 1139.02,121.21 1139.49,121.21 1139.95,121.21 1140.42,121.21 1140.89,121.21 1141.35,121.21 1141.82,121.21 1142.29,121.21 1142.75,121.21 1143.22,121.21 1143.69,121.21 1144.15,121.21 1144.62,121.21 1145.08,121.21 1145.55,121.21 1146.02,121.21 1146.48,121.21 1146.95,121.21 1147.42,121.21 1147.88,121.21 1148.35,121.21 1148.81,121.21 1149.28,121.21 1149.75,121.21 1150.21,121.21 1150.68,121.21 1151.15,121.21 1151.61,121.21 1152.08,121.21 1152.54,121.21 1153.01,121.21 1153.48,121.21 1153.94,121.21 1154.41,121.21 1154.88,121.21 1155.34,121.21 1155.81,121.21 1156.28,121.21 1156.74,121.21 1157.21,121.20 1157.67,121.20 1158.14,121.20 1158.61,121.20 1159.07,121.19 1159.54,121.19 1160.01,121.17 1160.47,121.16 1160.94,121.13 1161.40,121.09 1161.87,121.04 1162.34,120.96 1162.80,120.86 1163.27,120.71 1163.74,120.51 1164.20,120.25 1164.67,119.90 1165.14,119.44 1165.60,118.87 1166.07,118.14 1166.53,117.24 1167.00,116.14 1167.47,114.82 1167.93,113.26 1168.40,111.46 1168.87,109.40 1169.33,107.09 1169.80,104.56 1170.26,101.83 1170.73,98.94 1171.20,95.97 1171.66,92.97 1172.13,90.02 1172.60,87.23 1173.06,84.67 1173.53,82.43 1173.99,80.59 1174.46,79.23 1174.93,78.39 1175.39,78.10 1175.86,78.39 1176.33,79.23 1176.79,80.59 1177.26,82.43 1177.73,84.67 1178.19,87.23 1178.66,90.02 1179.12,92.97 1179.59,95.97 1180.06,98.94 1180.52,101.83 1180.99,104.56 1181.46,107.09 1181.92,109.40 1182.39,111.46 1182.85,113.26 1183.32,114.82 1183.79,116.14 1184.25,117.24 1184.72,118.14 1185.19,118.87 1185.65,119.44 1186.12,119.90 1186.58,120.25 1187.05,120.51 1187.52,120.71 1187.98,120.86 1188.45,120.96 1188.92,121.04 1189.38,121.09 1189.85,121.13 1190.32,121.16 1190.78,121.17 1191.25,121.19 1191.71,121.19 1192.18,121.20 1192.65,121.20 1193.11,121.20 1193.58,121.20 1194.05,121.21 1194.51,121.21 1194.98,121.21 1195.44,121.21 1195.91,121.21 1196.38,121.21 1196.84,121.21 1197.31,121.21 1197.78,121.21 1198.24,121.21 1198.71,121.21 1199.17,121.21 1199.64,121.21 1200.11,121.21 1200.57,121.21 1201.04,121.21 1201.51,121.21 1201.97,121.21 1202.44,121.21 1202.91,121.21 1203.37,121.21 1203.84,121.21 1204.30,121.21 1204.77,121.21 1205.24,121.21 1205.70,121.21 1206.17,121.21 1206.64,121.21 1207.10,121.21 1207.57,121.21 1208.03,121.21 1208.50,121.21 1208.97,121.21 1209.43,121.21 1209.90,121.21 1210.37,121.21 1210.83,121.21 1211.30,121.21 1211.77,121.21 1212.23,121.21 1212.70,121.21 1213.16,121.21 1213.63,121.21 1214.10,121.21 1214.56,121.21 1215.03,121.21 1215.50,121.21 1215.96,121.21 1216.43,121.21 1216.89,121.21 1217.36,121.21 1217.83,121.21 1218.29,121.21 1218.76,121.21 1219.23,121.21 1219.69,121.21 1220.16,121.21 1220.62,121.21 1221.09,121.21 1221.56,121.21 1222.02,121.21 1222.49,121.21 1222.96,121.21 1223.42,121.21 1223.89,121.21 1224.36,121.21 1224.82,121.21 1225.29,121.21 1225.75,121.21 1226.22,121.21 1226.69,121.21 1227.15,121.21 1227.62,121.21 1228.09,121.21 1228.55,121.21 1229.02,121.21 1229.48,121.21 1229.95,121.21 1230.42,121.21 1230.88,121.21 1231.35,121.21 1231.82,121.21 1232.28,121.21 1232.75,121.21 1233.21,121.21 1233.68,121.21 1234.15,121.21 1234.61,121.21 1235.08,121.21 1235.55,121.21 1236.01,121.21 1236.48,121.21 1236.95,121.21 1237.41,121.21 1237.88,121.21 1238.34,121.21 1238.81,121.21 1239.28,121.21 1239.74,121.21 1240.21,121.21 1240.68,121.21 1241.14,121.21 1241.61,121.21 1242.07,121.21 1242.54,121.21 1243.01,121.21 1243.47,121.21 1243.94,121.21 1244.41,121.21 1244.87,121.21 1245.34,121.21 1245.80,121.21 1246.27,121.21 1246.74,121.21 1247.20,121.21 1247.67,121.21 1248.14,121.21 1248.60,121.21 1249.07,121.21 1249.54,121.21 1250.00,121.21 1250.47,121.21 1250.93,121.21 1251.40,121.21 1251.87,121.21 1252.33,121.21 1252.80,121.21 1253.27,121.21 1253.73,121.21 1254.20,121.21 1254.66,121.21 1255.13,121.21 1255.60,121.21 1256.06,121.21 1256.53,121.21 1257.00,121.21 1257.46,121.21 1257.93,121.21 1258.40,121.21 1258.86,121.21 1259.33,121.21 1259.79,121.21 1260.26,121.21 1260.73,121.21 1261.19,121.21 1261.66,121.21 1262.13,121.21 1262.59,121.21 1263.06,121.21 1263.52,121.21 1263.99,121.21 1264.46,121.21 1264.92,121.21 1265.39,121.21 1265.86,121.21 1266.32,121.21 1266.79,121.21 1267.25,121.21 1267.72,121.21 1268.19,121.21 1268.65,121.21 1269.12,121.21 1269.59,121.21 1270.05,121.21 1270.52,121.21 1270.99,121.21 1271.45,121.21 1271.92,121.21 1272.38,121.21 1272.85,121.21 1273.32,121.21 1273.78,121.21 1274.25,121.21 1274.72,121.21 1275.18,121.21 1275.65,121.21 1276.11,121.21 1276.58,121.21 1277.05,121.21 1277.51,121.21 1277.98,121.21 1278.45,121.21 1278.91,121.21 1279.38,121.21 1279.84,121.21 1280.31,121.21 1280.78,121.21 1281.24,121.21 1281.71,121.21 1282.18,121.21 1282.64,121.21 1283.11,121.21" stroke="#333" stroke-width="1.6" fill="none"/>
<rect x="1048.10" y="60.60" width="251.50" height="150.60" fill="none" stroke="#333" stroke-width="1"/>
<line x1="1044.60" y1="204.30" x2="1048.10" y2="204.30" stroke="#333" stroke-width="0.8"/>
<text x="1041.00" y="207.60" font-family="Liberation Sans" font-size="9.3" fill="#000" text-anchor="end" textLength="13.2" lengthAdjust="spacingAndGlyphs" stroke="#000" stroke-width="0.10">0.0</text>
<line x1="1044.60" y1="182.08" x2="1048.10" y2="182.08" stroke="#333" stroke-width="0.8"/>
<text x="1041.00" y="185.38" font-family="Liberation Sans" font-size="9.3" fill="#000" text-anchor="end" textLength="13.2" lengthAdjust="spacingAndGlyphs" stroke="#000" stroke-width="0.10">2.5</text>
<line x1="1044.60" y1="159.87" x2="1048.10" y2="159.87" stroke="#333" stroke-width="0.8"/>
<text x="1041.00" y="163.17" font-family="Liberation Sans" font-size="9.3" fill="#000" text-anchor="end" textLength="13.2" lengthAdjust="spacingAndGlyphs" stroke="#000" stroke-width="0.10">5.0</text>
<line x1="1044.60" y1="137.65" x2="1048.10" y2="137.65" stroke="#333" stroke-width="0.8"/>
<text x="1041.00" y="140.95" font-family="Liberation Sans" font-size="9.3" fill="#000" text-anchor="end" textLength="13.2" lengthAdjust="spacingAndGlyphs" stroke="#000" stroke-width="0.10">7.5</text>
<line x1="1044.60" y1="115.43" x2="1048.10" y2="115.43" stroke="#333" stroke-width="0.8"/>
<text x="1041.00" y="118.73" font-family="Liberation Sans" font-size="9.3" fill="#000" text-anchor="end" textLength="18.48" lengthAdjust="spacingAndGlyphs" stroke="#000" stroke-width="0.10">10.0</text>
<line x1="1044.60" y1="93.21" x2="1048.10" y2="93.21" stroke="#333" stroke-width="0.8"/>
<text x="1041.00" y="96.51" font-family="Liberation Sans" font-size="9.3" fill="#000" text-anchor="end" textLength="18.48" lengthAdjust="spacingAndGlyphs" stroke="#000" stroke-width="0.10">12.5</text>
<line x1="1044.60" y1="71.00" x2="1048.10" y2="71.00" stroke="#333" stroke-width="0.8"/>
<text x="1041.00" y="74.30" font-family="Liberation Sans" font-size="9.3" fill="#000" text-anchor="end" textLength="18.48" lengthAdjust="spacingAndGlyphs" stroke="#000" stroke-width="0.10">15.0</text>
<line x1="1082.60" y1="211.20" x2="1082.60" y2="214.70" stroke="#333" stroke-width="0.8"/>
<text x="1082.60" y="223.90" font-family="Liberation Sans" font-size="9.3" fill="#000" text-anchor="middle" textLength="21.12" lengthAdjust="spacingAndGlyphs" stroke="#000" stroke-width="0.10">5400</text>
<line x1="1129.23" y1="211.20" x2="1129.23" y2="214.70" stroke="#333" stroke-width="0.8"/>
<text x="1129.23" y="223.90" font-family="Liberation Sans" font-size="9.3" fill="#000" text-anchor="middle" textLength="21.12" lengthAdjust="spacingAndGlyphs" stroke="#000" stroke-width="0.10">5420</text>
<line x1="1175.86" y1="211.20" x2="1175.86" y2="214.70" stroke="#333" stroke-width="0.8"/>
<text x="1175.86" y="223.90" font-family="Liberation Sans" font-size="9.3" fill="#000" text-anchor="middle" textLength="21.12" lengthAdjust="spacingAndGlyphs" stroke="#000" stroke-width="0.10">5440</text>
<line x1="1222.49" y1="211.20" x2="1222.49" y2="214.70" stroke="#333" stroke-width="0.8"/>
<text x="1222.49" y="223.90" font-family="Liberation Sans" font-size="9.3" fill="#000" text-anchor="middle" textLength="21.12" lengthAdjust="spacingAndGlyphs" stroke="#000" stroke-width="0.10">5460</text>
<line x1="1269.12" y1="211.20" x2="1269.12" y2="214.70" stroke="#333" stroke-width="0.8"/>
<text x="1269.12" y="223.90" font-family="Liberation Sans" font-size="9.3" fill="#000" text-anchor="middle" textLength="21.12" lengthAdjust="spacingAndGlyphs" stroke="#000" stroke-width="0.10">5480</text>
<text x="1049.60" y="72.30" font-family="Liberation Sans" font-size="8.9" fill="#000" textLength="34.4" lengthAdjust="spacingAndGlyphs">e<tspan font-size="6.3" dy="-3.6">−17</tspan><tspan dy="3.6">x2</tspan><tspan font-style="italic">Å</tspan></text>
<rect x="1229.98" y="348.60" width="55.06" height="83.70" fill="#c0b900"/>
<polygon points="101.30,406.45 102.48,406.60 103.66,406.72 104.84,406.82 106.02,406.89 107.20,406.94 108.38,406.95 109.56,406.93 110.74,406.89 111.92,406.81 113.10,406.71 114.28,406.58 115.46,406.43 116.64,406.26 117.82,406.08 119.00,405.89 120.18,405.69 121.36,405.49 122.54,405.30 123.72,405.12 124.90,404.94 126.08,404.79 127.26,404.65 128.44,404.54 129.62,404.46 130.80,404.40 131.98,404.38 133.16,404.38 134.34,404.41 135.52,404.48 136.70,404.57 137.88,404.69 139.06,404.83 140.24,404.99 141.42,405.17 142.60,405.35 143.79,405.55 144.97,405.75 146.15,405.94 147.33,406.13 148.51,406.31 149.69,406.50 150.87,406.67 152.05,406.82 153.23,406.95 154.41,407.04 155.59,407.11 156.77,407.14 157.95,407.15 159.13,407.13 160.31,407.08 161.49,407.00 162.67,406.90 163.85,406.78 165.03,406.65 166.21,406.50 167.39,406.35 168.57,406.19 169.75,406.04 170.93,405.89 172.11,405.75 173.29,405.62 174.47,405.51 175.65,405.42 176.83,405.36 178.01,405.32 179.19,405.31 180.37,405.32 181.55,405.36 182.73,405.44 183.91,405.53 185.09,405.66 186.27,405.80 187.45,405.96 188.63,406.15 189.81,406.34 190.99,406.54 192.17,406.75 193.35,406.96 194.53,407.16 195.71,407.36 196.89,407.54 198.07,407.71 199.25,407.86 200.43,407.99 201.62,408.10 202.80,408.18 203.98,408.24 205.16,408.27 206.34,408.28 207.52,408.26 208.70,408.21 209.88,408.15 211.06,408.06 212.24,407.96 213.42,407.84 214.60,407.72 215.78,407.58 216.96,407.45 218.14,407.32 219.32,407.19 220.50,407.08 221.68,406.97 222.86,406.88 224.04,406.81 225.22,406.77 226.40,406.74 227.58,406.74 228.76,406.76 229.94,406.81 231.12,406.88 232.30,406.97 233.48,407.08 234.66,407.22 235.84,407.37 237.02,407.53 238.20,407.70 239.38,407.88 240.56,408.07 241.74,408.25 242.92,408.43 244.10,408.60 245.28,408.76 246.46,408.91 247.64,409.05 248.82,409.16 250.00,409.25 251.18,409.32 252.36,409.37 253.54,409.40 254.72,409.40 255.90,409.39 257.08,409.35 258.26,409.29 259.44,409.22 260.62,409.14 261.81,409.04 262.99,408.94 264.17,408.83 265.35,408.72 266.53,408.61 267.71,408.51 268.89,408.41 270.07,408.33 271.25,408.26 272.43,408.21 273.61,408.18 274.79,408.16 275.97,408.17 277.15,408.20 278.33,408.25 279.51,408.31 280.69,408.40 281.87,408.51 283.05,408.63 284.23,408.76 285.41,408.90 286.59,409.06 287.77,409.22 288.95,409.38 290.13,409.54 291.31,409.69 292.49,409.84 293.67,409.98 294.85,410.11 296.03,410.22 297.21,410.32 298.39,410.40 299.57,410.46 300.75,410.51 301.93,410.53 303.11,410.53 304.29,410.52 305.47,410.49 306.65,410.45 307.83,410.39 309.01,410.32 310.19,410.24 311.37,410.16 312.55,410.08 313.73,409.99 314.91,409.91 316.09,409.83 317.27,409.76 318.45,409.70 319.63,409.65 320.82,409.61 322.00,409.59 323.18,409.59 324.36,409.60 325.54,409.64 326.72,409.68 327.90,409.75 329.08,409.83 330.26,409.92 331.44,410.03 332.62,410.15 333.80,410.27 334.98,410.41 336.16,410.54 337.34,410.68 338.52,410.82 339.70,410.95 340.88,411.07 342.06,411.19 343.24,411.30 344.42,411.40 345.60,411.48 346.78,411.55 347.96,411.60 349.14,411.64 350.32,411.66 351.50,411.67 352.68,411.66 353.86,411.64 355.04,411.61 356.22,411.56 357.40,411.51 358.58,411.46 359.76,411.40 360.94,411.33 362.12,411.27 363.30,411.21 364.48,411.16 365.66,411.11 366.84,411.07 368.02,411.04 369.20,411.02 370.38,411.01 371.56,411.02 372.74,411.04 373.92,411.07 375.10,411.12 376.28,411.18 377.46,411.26 378.64,411.34 379.83,411.43 381.01,411.53 382.19,411.64 383.37,411.75 384.55,411.86 385.73,411.95 386.91,412.03 388.09,412.11 389.27,412.19 390.45,412.26 391.63,412.32 392.81,412.38 393.99,412.42 395.17,412.46 396.35,412.48 397.53,412.48 398.71,412.48 399.89,412.46 401.07,412.43 402.25,412.39 403.43,412.34 404.61,412.28 405.79,412.22 406.97,412.14 408.15,412.07 409.33,411.99 410.51,411.91 411.69,411.83 412.87,411.76 414.05,411.69 415.23,411.63 416.41,411.57 417.59,411.53 418.77,411.50 419.95,411.48 421.13,411.47 422.31,411.47 423.49,411.49 424.67,411.52 425.85,411.56 427.03,411.61 428.21,411.67 429.39,411.73 430.57,411.81 431.75,411.89 432.93,411.97 434.11,412.05 435.29,412.13 436.47,412.21 437.65,412.29 438.84,412.36 440.02,412.42 441.20,412.47 442.38,412.51 443.56,412.54 444.74,412.56 445.92,412.57 447.10,412.56 448.28,412.54 449.46,412.51 450.64,412.47 451.82,412.42 453.00,412.36 454.18,412.29 455.36,412.22 456.54,412.15 457.72,412.07 458.90,411.99 460.08,411.91 461.26,411.84 462.44,411.78 463.62,411.72 464.80,411.67 465.98,411.63 467.16,411.60 468.34,411.58 469.52,411.57 470.70,411.58 471.88,411.59 473.06,411.62 474.24,411.66 475.42,411.71 476.60,411.77 477.78,411.84 478.96,411.91 480.14,411.99 481.32,412.07 482.50,412.15 483.68,412.23 484.86,412.31 486.04,412.38 487.22,412.45 488.40,412.51 489.58,412.56 490.76,412.60 491.94,412.63 493.12,412.64 494.30,412.65 495.48,412.64 496.66,412.62 497.85,412.59 499.03,412.54 500.21,412.49 501.39,412.43 502.57,412.37 503.75,412.30 504.93,412.22 506.11,412.15 507.29,412.07 508.47,412.00 509.65,411.93 510.83,411.86 512.01,411.81 513.19,411.76 514.37,411.72 515.55,411.69 516.73,411.68 517.91,411.67 519.09,411.68 520.27,411.70 521.45,411.73 522.63,411.77 523.81,411.82 524.99,411.88 526.17,411.95 527.35,412.02 528.53,412.10 529.71,412.18 530.89,412.26 532.07,412.34 533.25,412.41 534.43,412.48 535.61,412.55 536.79,412.60 537.97,412.65 539.15,412.68 540.33,412.71 541.51,412.72 542.69,412.73 543.87,412.72 545.05,412.69 546.23,412.66 547.41,412.62 548.59,412.57 549.77,412.51 550.95,412.44 552.13,412.37 553.31,412.30 554.49,412.23 555.67,412.15 556.86,412.08 558.04,412.01 559.22,411.95 560.40,411.90 561.58,411.85 562.76,411.82 563.94,411.79 565.12,411.78 566.30,411.77 567.48,411.78 568.66,411.80 569.84,411.84 571.02,411.88 572.20,411.93 573.38,411.99 574.56,412.06 575.74,412.13 576.92,412.20 578.10,412.28 579.28,412.36 580.46,412.44 581.64,412.51 582.82,412.58 584.00,412.64 585.18,412.69 586.36,412.74 587.54,412.77 588.72,412.79 589.90,412.80 591.08,412.80 592.26,412.79 593.44,412.77 594.62,412.74 595.80,412.70 596.98,412.64 598.16,412.58 599.34,412.52 600.52,412.45 601.70,412.38 602.88,412.31 604.06,412.23 605.24,412.17 606.42,412.10 607.60,412.04 608.78,411.99 609.96,411.95 611.14,411.91 612.32,411.89 613.50,411.88 614.68,411.88 615.87,411.89 617.05,411.91 618.23,411.94 619.41,411.99 620.59,412.04 621.77,412.10 622.95,412.16 624.13,412.24 625.31,412.31 626.49,412.39 627.67,412.46 628.85,412.54 630.03,412.61 631.21,412.67 632.39,412.73 633.57,412.78 634.75,412.82 635.93,412.86 637.11,412.88 638.29,412.89 639.47,412.88 640.65,412.87 641.83,412.85 643.01,412.81 644.19,412.77 645.37,412.72 646.55,412.66 647.73,412.60 648.91,412.53 650.09,412.46 651.27,412.39 652.45,412.32 653.63,412.25 654.81,412.19 655.99,412.13 657.17,412.08 658.35,412.04 659.53,412.01 660.71,411.99 661.89,411.98 663.07,411.98 664.25,411.99 665.43,412.02 666.61,412.05 667.79,412.09 668.97,412.15 670.15,412.21 671.33,412.27 672.51,412.34 673.69,412.41 674.88,412.49 676.06,412.56 677.24,412.64 678.42,412.70 679.60,412.77 680.78,412.82 681.96,412.87 683.14,412.91 684.32,412.94 685.50,412.96 686.68,412.97 687.86,412.96 689.04,412.95 690.22,412.92 691.40,412.89 692.58,412.85 693.76,412.80 694.94,412.74 696.12,412.67 697.30,412.61 698.48,412.54 699.66,412.47 700.84,412.40 702.02,412.34 703.20,412.28 704.38,412.22 705.56,412.18 706.74,412.14 707.92,412.11 709.10,412.09 710.28,412.08 711.46,412.08 712.64,412.10 713.82,412.12 715.00,412.16 716.18,412.20 717.36,412.25 718.54,412.31 719.72,412.38 720.90,412.45 722.08,412.52 723.26,412.59 724.44,412.66 725.62,412.73 726.80,412.80 727.98,412.86 729.16,412.91 730.34,412.96 731.52,413.00 732.70,413.02 733.89,413.04 735.07,413.05 736.25,413.04 737.43,413.03 738.61,413.00 739.79,412.97 740.97,412.92 742.15,412.87 743.33,412.81 744.51,412.75 745.69,412.69 746.87,412.62 748.05,412.55 749.23,412.49 750.41,412.42 751.59,412.36 752.77,412.31 753.95,412.27 755.13,412.23 756.31,412.21 757.49,412.19 758.67,412.18 759.85,412.19 761.03,412.20 762.21,412.23 763.39,412.26 764.57,412.31 765.75,412.36 766.93,412.42 768.11,412.48 769.29,412.55 770.47,412.62 771.65,412.69 772.83,412.76 774.01,412.83 775.19,412.90 776.37,412.95 777.55,413.01 778.73,413.05 779.91,413.08 781.09,413.11 782.27,413.12 783.45,413.13 784.63,413.12 785.81,413.10 786.99,413.08 788.17,413.04 789.35,413.00 790.53,412.95 791.71,412.89 792.90,412.83 794.08,412.76 795.26,412.70 796.44,412.63 797.62,412.57 798.80,412.51 799.98,412.45 801.16,412.40 802.34,412.36 803.52,412.33 804.70,412.30 805.88,412.29 807.06,412.29 808.24,412.29 809.42,412.31 810.60,412.34 811.78,412.37 812.96,412.42 814.14,412.47 815.32,412.53 816.50,412.59 817.68,412.66 818.86,412.73 820.04,412.80 821.22,412.86 822.40,412.93 823.58,412.99 824.76,413.05 825.94,413.10 827.12,413.14 828.30,413.17 829.48,413.19 830.66,413.21 831.84,413.21 833.02,413.20 834.20,413.18 835.38,413.16 836.56,413.12 837.74,413.08 838.92,413.02 840.10,412.97 841.28,412.91 842.46,412.84 843.64,412.78 844.82,412.72 846.00,412.65 847.18,412.60 848.36,412.54 849.54,412.50 850.73,412.46 851.91,412.43 853.09,412.40 854.27,412.39 855.45,412.39 856.63,412.40 857.81,412.41 858.99,412.44 860.17,412.47 861.35,412.51 862.53,412.56 863.71,412.62 864.89,412.68 866.07,412.74 867.25,412.81 868.43,412.87 869.61,412.94 870.79,413.00 871.97,413.06 873.15,413.11 874.33,413.16 875.51,413.19 876.69,413.22 877.87,413.24 879.05,413.25 880.23,413.25 881.41,413.24 882.59,413.22 883.77,413.19 884.95,413.15 886.13,413.10 887.31,413.05 888.49,412.99 889.67,412.93 890.85,412.86 892.03,412.79 893.21,412.73 894.39,412.67 895.57,412.61 896.75,412.55 897.93,412.50 899.11,412.46 900.29,412.43 901.47,412.41 902.65,412.39 903.83,412.39 905.01,412.40 906.19,412.42 907.37,412.44 908.55,412.48 909.74,412.52 910.92,412.57 912.10,412.63 913.28,412.69 914.46,412.75 915.64,412.82 916.82,412.89 918.00,412.95 919.18,413.01 920.36,413.07 921.54,413.12 922.72,413.16 923.90,413.20 925.08,413.23 926.26,413.24 927.44,413.25 928.62,413.25 929.80,413.23 930.98,413.21 932.16,413.18 933.34,413.14 934.52,413.09 935.70,413.04 936.88,412.98 938.06,412.92 939.24,412.85 940.42,412.78 941.60,412.72 942.78,412.66 943.96,412.60 945.14,412.54 946.32,412.50 947.50,412.46 948.68,412.43 949.86,412.41 951.04,412.39 952.22,412.39 953.40,412.40 954.58,412.42 955.76,412.45 956.94,412.48 958.12,412.53 959.30,412.58 960.48,412.64 961.66,412.70 962.84,412.76 964.02,412.83 965.20,412.90 966.38,412.96 967.56,413.02 968.75,413.08 969.93,413.13 971.11,413.17 972.29,413.20 973.47,413.23 974.65,413.24 975.83,413.25 977.01,413.25 978.19,413.23 979.37,413.21 980.55,413.17 981.73,413.13 982.91,413.08 984.09,413.03 985.27,412.97 986.45,412.91 987.63,412.84 988.81,412.77 989.99,412.71 991.17,412.65 992.35,412.59 993.53,412.54 994.71,412.49 995.89,412.45 997.07,412.42 998.25,412.40 999.43,412.39 1000.61,412.39 1001.79,412.40 1002.97,412.42 1004.15,412.45 1005.33,412.49 1006.51,412.54 1007.69,412.59 1008.87,412.65 1010.05,412.71 1011.23,412.77 1012.41,412.84 1013.59,412.91 1014.77,412.97 1015.95,413.03 1017.13,413.08 1018.31,413.13 1019.49,413.17 1020.67,413.21 1021.85,413.23 1023.03,413.25 1024.21,413.25 1025.39,413.24 1026.57,413.23 1027.75,413.20 1028.94,413.17 1030.12,413.13 1031.30,413.08 1032.48,413.02 1033.66,412.96 1034.84,412.89 1036.02,412.83 1037.20,412.76 1038.38,412.70 1039.56,412.64 1040.74,412.58 1041.92,412.53 1043.10,412.48 1044.28,412.45 1045.46,412.42 1046.64,412.40 1047.82,412.39 1049.00,412.39 1050.18,412.41 1051.36,412.43 1052.54,412.46 1053.72,412.50 1054.90,412.54 1056.08,412.60 1057.26,412.66 1058.44,412.72 1059.62,412.78 1060.80,412.85 1061.98,412.92 1063.16,412.98 1064.34,413.04 1065.52,413.09 1066.70,413.14 1067.88,413.18 1069.06,413.21 1070.24,413.23 1071.42,413.25 1072.60,413.25 1073.78,413.24 1074.96,413.22 1076.14,413.20 1077.32,413.16 1078.50,413.12 1079.68,413.07 1080.86,413.01 1082.04,412.95 1083.22,412.88 1084.40,412.82 1085.58,412.75 1086.76,412.69 1087.95,412.63 1089.13,412.57 1090.31,412.52 1091.49,412.48 1092.67,412.44 1093.85,412.42 1095.03,412.40 1096.21,412.39 1097.39,412.39 1098.57,412.41 1099.75,412.43 1100.93,412.46 1102.11,412.50 1103.29,412.55 1104.47,412.61 1105.65,412.67 1106.83,412.73 1108.01,412.80 1109.19,412.86 1110.37,412.93 1111.55,412.99 1112.73,413.05 1113.91,413.10 1115.09,413.15 1116.27,413.19 1117.45,413.22 1118.63,413.24 1119.81,413.25 1120.99,413.25 1122.17,413.24 1123.35,413.22 1124.53,413.19 1125.71,413.16 1126.89,413.11 1128.07,413.06 1129.25,413.00 1130.43,412.94 1131.61,412.87 1132.79,412.81 1133.97,412.74 1135.15,412.68 1136.33,412.62 1137.51,412.56 1138.69,412.51 1139.87,412.47 1141.05,412.44 1142.23,412.41 1143.41,412.40 1144.59,412.39 1145.77,412.40 1146.96,412.41 1148.14,412.44 1149.32,412.47 1150.50,412.51 1151.68,412.56 1152.86,412.62 1154.04,412.68 1155.22,412.74 1156.40,412.81 1157.58,412.87 1158.76,412.94 1159.94,413.00 1161.12,413.06 1162.30,413.11 1163.48,413.15 1164.66,413.19 1165.84,413.22 1167.02,413.24 1168.20,413.25 1169.38,413.25 1170.56,413.24 1171.74,413.22 1172.92,413.19 1174.10,413.15 1175.28,413.10 1176.46,413.05 1177.64,412.99 1178.82,412.93 1180.00,412.86 1181.18,412.80 1182.36,412.73 1183.54,412.67 1184.72,412.61 1185.90,412.55 1187.08,412.51 1188.26,412.46 1189.44,412.43 1190.62,412.41 1191.80,412.40 1192.98,412.39 1194.16,412.40 1195.34,412.41 1196.52,412.44 1197.70,412.48 1198.88,412.52 1200.06,412.57 1201.24,412.63 1202.42,412.69 1203.60,412.75 1204.78,412.82 1205.97,412.88 1207.15,412.95 1208.33,413.01 1209.51,413.07 1210.69,413.12 1211.87,413.16 1213.05,413.20 1214.23,413.22 1215.41,413.24 1216.59,413.25 1217.77,413.25 1218.95,413.24 1220.13,413.21 1221.31,413.18 1222.49,413.14 1223.67,413.09 1224.85,413.04 1226.03,412.98 1227.21,412.92 1228.39,412.85 1229.57,412.79 1230.75,412.72 1231.93,412.66 1233.11,412.60 1234.29,412.55 1235.47,412.50 1236.65,412.46 1237.83,412.43 1239.01,412.41 1240.19,412.39 1241.37,412.39 1242.55,412.40 1243.73,412.42 1244.91,412.45 1246.09,412.48 1247.27,412.53 1248.45,412.58 1249.63,412.64 1250.81,412.70 1251.99,412.76 1253.17,412.83 1254.35,412.89 1255.53,412.96 1256.71,413.02 1257.89,413.07 1259.07,413.12 1260.25,413.17 1261.43,413.20 1262.61,413.23 1263.79,413.24 1264.98,413.25 1266.16,413.25 1267.34,413.23 1268.52,413.21 1269.70,413.18 1270.88,413.13 1272.06,413.09 1273.24,413.03 1274.42,412.97 1275.60,412.91 1276.78,412.84 1277.96,412.78 1279.14,412.71 1280.32,412.65 1281.50,412.59 1282.68,412.54 1283.86,412.49 1285.04,412.45 1286.22,412.42 1287.40,412.40 1288.58,412.39 1289.76,412.39 1290.94,412.40 1292.12,412.42 1293.30,412.45 1294.48,412.49 1295.66,412.53 1296.84,412.59 1298.02,412.64 1299.20,412.71 1299.20,419.91 1298.02,419.97 1296.84,420.02 1295.66,420.07 1294.48,420.12 1293.30,420.15 1292.12,420.18 1290.94,420.20 1289.76,420.21 1288.58,420.21 1287.40,420.20 1286.22,420.18 1285.04,420.15 1283.86,420.11 1282.68,420.07 1281.50,420.02 1280.32,419.96 1279.14,419.90 1277.96,419.84 1276.78,419.78 1275.60,419.72 1274.42,419.66 1273.24,419.60 1272.06,419.55 1270.88,419.50 1269.70,419.46 1268.52,419.43 1267.34,419.41 1266.16,419.40 1264.98,419.39 1263.79,419.40 1262.61,419.41 1261.43,419.44 1260.25,419.47 1259.07,419.51 1257.89,419.56 1256.71,419.61 1255.53,419.67 1254.35,419.73 1253.17,419.79 1251.99,419.86 1250.81,419.92 1249.63,419.98 1248.45,420.03 1247.27,420.08 1246.09,420.12 1244.91,420.16 1243.73,420.18 1242.55,420.20 1241.37,420.21 1240.19,420.21 1239.01,420.19 1237.83,420.17 1236.65,420.14 1235.47,420.11 1234.29,420.06 1233.11,420.01 1231.93,419.95 1230.75,419.89 1229.57,419.83 1228.39,419.77 1227.21,419.71 1226.03,419.65 1224.85,419.59 1223.67,419.54 1222.49,419.50 1221.31,419.46 1220.13,419.43 1218.95,419.41 1217.77,419.39 1216.59,419.39 1215.41,419.40 1214.23,419.42 1213.05,419.44 1211.87,419.48 1210.69,419.52 1209.51,419.57 1208.33,419.62 1207.15,419.68 1205.97,419.74 1204.78,419.80 1203.60,419.87 1202.42,419.93 1201.24,419.99 1200.06,420.04 1198.88,420.09 1197.70,420.13 1196.52,420.16 1195.34,420.19 1194.16,420.20 1192.98,420.21 1191.80,420.20 1190.62,420.19 1189.44,420.17 1188.26,420.14 1187.08,420.10 1185.90,420.05 1184.72,420.00 1183.54,419.94 1182.36,419.88 1181.18,419.82 1180.00,419.76 1178.82,419.70 1177.64,419.64 1176.46,419.58 1175.28,419.53 1174.10,419.49 1172.92,419.45 1171.74,419.42 1170.56,419.40 1169.38,419.39 1168.20,419.39 1167.02,419.40 1165.84,419.42 1164.66,419.45 1163.48,419.48 1162.30,419.53 1161.12,419.58 1159.94,419.63 1158.76,419.69 1157.58,419.75 1156.40,419.81 1155.22,419.88 1154.04,419.94 1152.86,419.99 1151.68,420.05 1150.50,420.09 1149.32,420.13 1148.14,420.17 1146.96,420.19 1145.77,420.20 1144.59,420.21 1143.41,420.20 1142.23,420.19 1141.05,420.17 1139.87,420.13 1138.69,420.09 1137.51,420.05 1136.33,419.99 1135.15,419.94 1133.97,419.87 1132.79,419.81 1131.61,419.75 1130.43,419.69 1129.25,419.63 1128.07,419.57 1126.89,419.53 1125.71,419.48 1124.53,419.45 1123.35,419.42 1122.17,419.40 1120.99,419.39 1119.81,419.39 1118.63,419.40 1117.45,419.42 1116.27,419.45 1115.09,419.49 1113.91,419.53 1112.73,419.58 1111.55,419.64 1110.37,419.70 1109.19,419.76 1108.01,419.82 1106.83,419.89 1105.65,419.95 1104.47,420.00 1103.29,420.06 1102.11,420.10 1100.93,420.14 1099.75,420.17 1098.57,420.19 1097.39,420.20 1096.21,420.21 1095.03,420.20 1093.85,420.19 1092.67,420.16 1091.49,420.13 1090.31,420.09 1089.13,420.04 1087.95,419.98 1086.76,419.93 1085.58,419.86 1084.40,419.80 1083.22,419.74 1082.04,419.68 1080.86,419.62 1079.68,419.57 1078.50,419.52 1077.32,419.48 1076.14,419.44 1074.96,419.42 1073.78,419.40 1072.60,419.39 1071.42,419.39 1070.24,419.41 1069.06,419.43 1067.88,419.46 1066.70,419.50 1065.52,419.54 1064.34,419.59 1063.16,419.65 1061.98,419.71 1060.80,419.77 1059.62,419.83 1058.44,419.90 1057.26,419.96 1056.08,420.01 1054.90,420.06 1053.72,420.11 1052.54,420.15 1051.36,420.17 1050.18,420.19 1049.00,420.21 1047.82,420.21 1046.64,420.20 1045.46,420.18 1044.28,420.16 1043.10,420.12 1041.92,420.08 1040.74,420.03 1039.56,419.97 1038.38,419.92 1037.20,419.86 1036.02,419.79 1034.84,419.73 1033.66,419.67 1032.48,419.61 1031.30,419.56 1030.12,419.51 1028.94,419.47 1027.75,419.44 1026.57,419.41 1025.39,419.40 1024.21,419.39 1023.03,419.40 1021.85,419.41 1020.67,419.43 1019.49,419.46 1018.31,419.50 1017.13,419.55 1015.95,419.60 1014.77,419.66 1013.59,419.72 1012.41,419.78 1011.23,419.84 1010.05,419.91 1008.87,419.97 1007.69,420.02 1006.51,420.07 1005.33,420.11 1004.15,420.15 1002.97,420.18 1001.79,420.20 1000.61,420.21 999.43,420.21 998.25,420.20 997.07,420.18 995.89,420.15 994.71,420.11 993.53,420.07 992.35,420.02 991.17,419.97 989.99,419.91 988.81,419.85 987.63,419.78 986.45,419.72 985.27,419.66 984.09,419.60 982.91,419.55 981.73,419.50 980.55,419.46 979.37,419.43 978.19,419.41 977.01,419.40 975.83,419.39 974.65,419.40 973.47,419.41 972.29,419.44 971.11,419.47 969.93,419.51 968.75,419.56 967.56,419.61 966.38,419.67 965.20,419.73 964.02,419.79 962.84,419.85 961.66,419.92 960.48,419.97 959.30,420.03 958.12,420.08 956.94,420.12 955.76,420.16 954.58,420.18 953.40,420.20 952.22,420.21 951.04,420.21 949.86,420.20 948.68,420.17 947.50,420.15 946.32,420.11 945.14,420.06 943.96,420.01 942.78,419.96 941.60,419.90 940.42,419.84 939.24,419.77 938.06,419.71 936.88,419.65 935.70,419.59 934.52,419.54 933.34,419.50 932.16,419.46 930.98,419.43 929.80,419.41 928.62,419.40 927.44,419.39 926.26,419.40 925.08,419.42 923.90,419.44 922.72,419.48 921.54,419.52 920.36,419.57 919.18,419.62 918.00,419.68 916.82,419.74 915.64,419.80 914.46,419.86 913.28,419.93 912.10,419.98 910.92,420.04 909.74,420.09 908.55,420.13 907.37,420.16 906.19,420.19 905.01,420.20 903.83,420.21 902.65,420.21 901.47,420.19 900.29,420.17 899.11,420.14 897.93,420.10 896.75,420.06 895.57,420.00 894.39,419.95 893.21,419.89 892.03,419.83 890.85,419.76 889.67,419.70 888.49,419.64 887.31,419.59 886.13,419.53 884.95,419.49 883.77,419.45 882.59,419.42 881.41,419.40 880.23,419.39 879.05,419.39 877.87,419.40 876.69,419.42 875.51,419.45 874.33,419.48 873.15,419.52 871.97,419.57 870.79,419.63 869.61,419.69 868.43,419.75 867.25,419.81 866.07,419.87 864.89,419.93 863.71,419.99 862.53,420.04 861.35,420.09 860.17,420.13 858.99,420.16 857.81,420.19 856.63,420.20 855.45,420.21 854.27,420.21 853.09,420.20 851.91,420.18 850.73,420.15 849.54,420.11 848.36,420.06 847.18,420.01 846.00,419.96 844.82,419.90 843.64,419.84 842.46,419.78 841.28,419.72 840.10,419.66 838.92,419.61 837.74,419.56 836.56,419.52 835.38,419.48 834.20,419.46 833.02,419.44 831.84,419.43 830.66,419.43 829.48,419.45 828.30,419.47 827.12,419.50 825.94,419.54 824.76,419.59 823.58,419.64 822.40,419.70 821.22,419.76 820.04,419.82 818.86,419.89 817.68,419.96 816.50,420.02 815.32,420.08 814.14,420.14 812.96,420.18 811.78,420.23 810.60,420.26 809.42,420.29 808.24,420.30 807.06,420.31 805.88,420.30 804.70,420.29 803.52,420.27 802.34,420.24 801.16,420.20 799.98,420.15 798.80,420.10 797.62,420.04 796.44,419.98 795.26,419.92 794.08,419.85 792.90,419.79 791.71,419.73 790.53,419.68 789.35,419.63 788.17,419.59 786.99,419.56 785.81,419.53 784.63,419.51 783.45,419.51 782.27,419.51 781.09,419.53 779.91,419.55 778.73,419.58 777.55,419.62 776.37,419.67 775.19,419.73 774.01,419.79 772.83,419.85 771.65,419.92 770.47,419.99 769.29,420.06 768.11,420.12 766.93,420.18 765.75,420.24 764.57,420.29 763.39,420.33 762.21,420.36 761.03,420.39 759.85,420.40 758.67,420.41 757.49,420.40 756.31,420.38 755.13,420.36 753.95,420.33 752.77,420.28 751.59,420.23 750.41,420.18 749.23,420.12 748.05,420.06 746.87,419.99 745.69,419.93 744.51,419.87 743.33,419.81 742.15,419.75 740.97,419.70 739.79,419.66 738.61,419.63 737.43,419.60 736.25,419.59 735.07,419.58 733.89,419.59 732.70,419.61 731.52,419.63 730.34,419.67 729.16,419.71 727.98,419.76 726.80,419.82 725.62,419.88 724.44,419.95 723.26,420.02 722.08,420.09 720.90,420.16 719.72,420.22 718.54,420.28 717.36,420.34 716.18,420.39 715.00,420.43 713.82,420.46 712.64,420.49 711.46,420.50 710.28,420.50 709.10,420.49 707.92,420.48 706.74,420.45 705.56,420.41 704.38,420.37 703.20,420.32 702.02,420.26 700.84,420.20 699.66,420.13 698.48,420.07 697.30,420.00 696.12,419.94 694.94,419.88 693.76,419.82 692.58,419.78 691.40,419.73 690.22,419.70 689.04,419.68 687.86,419.66 686.68,419.66 685.50,419.67 684.32,419.69 683.14,419.71 681.96,419.75 680.78,419.80 679.60,419.85 678.42,419.91 677.24,419.98 676.06,420.04 674.88,420.12 673.69,420.19 672.51,420.26 671.33,420.32 670.15,420.38 668.97,420.44 667.79,420.49 666.61,420.53 665.43,420.56 664.25,420.59 663.07,420.60 661.89,420.60 660.71,420.59 659.53,420.57 658.35,420.54 657.17,420.50 655.99,420.46 654.81,420.40 653.63,420.34 652.45,420.28 651.27,420.21 650.09,420.14 648.91,420.08 647.73,420.01 646.55,419.95 645.37,419.90 644.19,419.85 643.01,419.81 641.83,419.77 640.65,419.75 639.47,419.74 638.29,419.74 637.11,419.75 635.93,419.77 634.75,419.80 633.57,419.84 632.39,419.89 631.21,419.94 630.03,420.00 628.85,420.07 627.67,420.14 626.49,420.21 625.31,420.29 624.13,420.36 622.95,420.42 621.77,420.49 620.59,420.54 619.41,420.59 618.23,420.63 617.05,420.66 615.87,420.69 614.68,420.70 613.50,420.70 612.32,420.68 611.14,420.66 609.96,420.63 608.78,420.59 607.60,420.54 606.42,420.48 605.24,420.42 604.06,420.36 602.88,420.29 601.70,420.22 600.52,420.15 599.34,420.09 598.16,420.02 596.98,419.97 595.80,419.92 594.62,419.88 593.44,419.85 592.26,419.83 591.08,419.82 589.90,419.82 588.72,419.83 587.54,419.85 586.36,419.88 585.18,419.92 584.00,419.97 582.82,420.03 581.64,420.10 580.46,420.17 579.28,420.24 578.10,420.31 576.92,420.39 575.74,420.46 574.56,420.53 573.38,420.59 572.20,420.65 571.02,420.70 569.84,420.74 568.66,420.77 567.48,420.79 566.30,420.79 565.12,420.79 563.94,420.78 562.76,420.75 561.58,420.72 560.40,420.68 559.22,420.62 558.04,420.57 556.86,420.50 555.67,420.43 554.49,420.36 553.31,420.29 552.13,420.22 550.95,420.16 549.77,420.10 548.59,420.04 547.41,419.99 546.23,419.95 545.05,419.92 543.87,419.90 542.69,419.89 541.51,419.89 540.33,419.91 539.15,419.93 537.97,419.96 536.79,420.01 535.61,420.06 534.43,420.12 533.25,420.19 532.07,420.26 530.89,420.34 529.71,420.41 528.53,420.49 527.35,420.56 526.17,420.63 524.99,420.69 523.81,420.75 522.63,420.80 521.45,420.84 520.27,420.87 519.09,420.88 517.91,420.89 516.73,420.89 515.55,420.87 514.37,420.85 513.19,420.81 512.01,420.76 510.83,420.71 509.65,420.65 508.47,420.58 507.29,420.51 506.11,420.44 504.93,420.37 503.75,420.30 502.57,420.23 501.39,420.17 500.21,420.11 499.03,420.06 497.85,420.02 496.66,419.99 495.48,419.97 494.30,419.97 493.12,419.97 491.94,419.99 490.76,420.01 489.58,420.05 488.40,420.10 487.22,420.15 486.04,420.21 484.86,420.28 483.68,420.36 482.50,420.43 481.32,420.51 480.14,420.59 478.96,420.66 477.78,420.73 476.60,420.79 475.42,420.85 474.24,420.90 473.06,420.94 471.88,420.97 470.70,420.98 469.52,420.99 468.34,420.98 467.16,420.96 465.98,420.94 464.80,420.90 463.62,420.85 462.44,420.79 461.26,420.73 460.08,420.66 458.90,420.59 457.72,420.52 456.54,420.44 455.36,420.37 454.18,420.30 453.00,420.24 451.82,420.18 450.64,420.13 449.46,420.10 448.28,420.07 447.10,420.05 445.92,420.04 444.74,420.05 443.56,420.07 442.38,420.09 441.20,420.13 440.02,420.18 438.84,420.24 437.65,420.31 436.47,420.38 435.29,420.45 434.11,420.53 432.93,420.61 431.75,420.69 430.57,420.76 429.39,420.83 428.21,420.90 427.03,420.95 425.85,421.00 424.67,421.04 423.49,421.07 422.31,421.08 421.13,421.09 419.95,421.08 418.77,421.06 417.59,421.03 416.41,420.98 415.23,420.93 414.05,420.88 412.87,420.81 411.69,420.74 410.51,420.67 409.33,420.59 408.15,420.52 406.97,420.44 405.79,420.37 404.61,420.31 403.43,420.25 402.25,420.21 401.07,420.17 399.89,420.14 398.71,420.12 397.53,420.12 396.35,420.13 395.17,420.15 393.99,420.18 392.81,420.22 391.63,420.27 390.45,420.33 389.27,420.40 388.09,420.47 386.91,420.55 385.73,420.63 384.55,420.71 383.37,420.82 382.19,420.92 381.01,421.03 379.83,421.12 378.64,421.21 377.46,421.29 376.28,421.36 375.10,421.41 373.92,421.46 372.74,421.49 371.56,421.51 370.38,421.52 369.20,421.51 368.02,421.49 366.84,421.47 365.66,421.43 364.48,421.38 363.30,421.33 362.12,421.27 360.94,421.21 359.76,421.15 358.58,421.10 357.40,421.04 356.22,420.99 355.04,420.95 353.86,420.92 352.68,420.90 351.50,420.90 350.32,420.90 349.14,420.93 347.96,420.96 346.78,421.01 345.60,421.08 344.42,421.15 343.24,421.25 342.06,421.35 340.88,421.46 339.70,421.58 338.52,421.70 337.34,421.83 336.16,421.96 334.98,422.09 333.80,422.22 332.62,422.34 331.44,422.45 330.26,422.55 329.08,422.64 327.90,422.72 326.72,422.78 325.54,422.83 324.36,422.86 323.18,422.87 322.00,422.87 320.82,422.85 319.63,422.81 318.45,422.77 317.27,422.71 316.09,422.64 314.91,422.57 313.73,422.49 312.55,422.41 311.37,422.33 310.19,422.25 309.01,422.17 307.83,422.11 306.65,422.05 305.47,422.01 304.29,421.98 303.11,421.97 301.93,421.98 300.75,422.00 299.57,422.04 298.39,422.10 297.21,422.18 296.03,422.27 294.85,422.38 293.67,422.50 292.49,422.63 291.31,422.77 290.13,422.92 288.95,423.07 287.77,423.22 286.59,423.37 285.41,423.52 284.23,423.66 283.05,423.79 281.87,423.90 280.69,424.00 279.51,424.08 278.33,424.15 277.15,424.19 275.97,424.22 274.79,424.22 273.61,424.21 272.43,424.18 271.25,424.13 270.07,424.07 268.89,423.99 267.71,423.90 266.53,423.80 265.35,423.70 264.17,423.59 262.99,423.49 261.81,423.39 260.62,423.30 259.44,423.22 258.26,423.15 257.08,423.10 255.90,423.06 254.72,423.05 253.54,423.05 252.36,423.07 251.18,423.12 250.00,423.19 248.82,423.28 247.64,423.39 246.46,423.51 245.28,423.65 244.10,423.81 242.92,423.97 241.74,424.14 240.56,424.32 239.38,424.49 238.20,424.66 237.02,424.83 235.84,424.98 234.66,425.13 233.48,425.25 232.30,425.36 231.12,425.45 229.94,425.51 228.76,425.56 227.58,425.58 226.40,425.58 225.22,425.55 224.04,425.51 222.86,425.44 221.68,425.36 220.50,425.26 219.32,425.15 218.14,425.03 216.96,424.90 215.78,424.77 214.60,424.65 213.42,424.53 212.24,424.42 211.06,424.32 209.88,424.24 208.70,424.18 207.52,424.14 206.34,424.12 205.16,424.12 203.98,424.15 202.80,424.21 201.62,424.28 200.43,424.39 199.25,424.51 198.07,424.65 196.89,424.82 195.71,424.99 194.53,425.18 193.35,425.37 192.17,425.57 190.99,425.77 189.81,425.96 188.63,426.14 187.45,426.31 186.27,426.47 185.09,426.61 183.91,426.72 182.73,426.82 181.55,426.88 180.37,426.92 179.19,426.94 178.01,426.93 176.83,426.89 175.65,426.83 174.47,426.74 173.29,426.64 172.11,426.52 170.93,426.39 169.75,426.24 168.57,426.10 167.39,425.95 166.21,425.80 165.03,425.66 163.85,425.54 162.67,425.42 161.49,425.33 160.31,425.26 159.13,425.21 157.95,425.19 156.77,425.19 155.59,425.23 154.41,425.29 153.23,425.38 152.05,425.50 150.87,425.64 149.69,425.80 148.51,425.98 147.33,426.15 146.15,426.33 144.97,426.52 143.79,426.71 142.60,426.89 141.42,427.07 140.24,427.24 139.06,427.39 137.88,427.53 136.70,427.64 135.52,427.73 134.34,427.79 133.16,427.82 131.98,427.82 130.80,427.80 129.62,427.74 128.44,427.66 127.26,427.56 126.08,427.43 124.90,427.28 123.72,427.12 122.54,426.94 121.36,426.76 120.18,426.57 119.00,426.39 117.82,426.20 116.64,426.03 115.46,425.87 114.28,425.73 113.10,425.61 111.92,425.51 110.74,425.44 109.56,425.39 108.38,425.38 107.20,425.39 106.02,425.43 104.84,425.50 103.66,425.59 102.48,425.71 101.30,425.85" fill="#aaa" fill-opacity="0.8"/>
<line x1="101.40" y1="416.40" x2="1299.40" y2="416.40" stroke="#666" stroke-width="2.2" stroke-opacity="0.75"/>
<rect x="133.16" y="348.60" width="12.39" height="83.70" fill="#808080" fill-opacity="0.7"/>
<rect x="133.16" y="348.60" width="12.39" height="83.70" fill="url(#hatch)" stroke="#000" stroke-width="0.9"/>
<rect x="1267.34" y="348.60" width="6.49" height="83.70" fill="#808080" fill-opacity="0.7"/>
<rect x="1267.34" y="348.60" width="6.49" height="83.70" fill="url(#hatch)" stroke="#000" stroke-width="0.9"/>
<line x1="967.39" y1="348.60" x2="967.39" y2="432.30" stroke="#444" stroke-width="1.1" stroke-dasharray="4,2.5"/>
<line x1="1092.67" y1="348.60" x2="1092.67" y2="432.30" stroke="#444" stroke-width="1.1" stroke-dasharray="4,2.5"/>
<line x1="1257.89" y1="348.60" x2="1257.89" y2="432.30" stroke="#222" stroke-width="1.0" stroke-dasharray="1.5,1.5"/>
<polyline points="101.3,417.3 102.5,424.1 103.7,419.5 104.8,409.4 106.0,395.2 107.2,401.0 108.4,413.3 109.6,432.5 110.7,416.1 111.9,402.9 113.1,389.7 114.3,392.0 115.5,399.8 116.6,408.8 117.8,421.8 119.0,407.6 120.2,386.0 121.4,371.0 122.5,373.8 123.7,408.7 124.9,424.2 126.1,414.3 127.3,410.0 128.4,410.4 129.6,403.7 130.8,407.2 132.0,408.0 133.2,392.2 134.3,370.9 135.5,405.4 136.7,424.0 137.9,406.6 139.1,404.6 140.2,419.9 141.4,423.6 142.6,409.2 143.8,394.0 145.0,382.3 146.1,403.1 147.3,424.5 148.5,414.2 149.7,409.6 150.9,399.3 152.0,396.6 153.2,395.8 154.4,388.8 155.6,382.3 156.8,393.3 157.9,419.1 159.1,419.3 160.3,404.7 161.5,400.2 162.7,410.9 163.8,417.3 165.0,414.9 166.2,402.5 167.4,409.4 168.6,413.4 169.7,424.0 170.9,417.2 172.1,407.5 173.3,404.8 174.5,406.7 175.7,415.3 176.8,406.7 178.0,390.5 179.2,377.8 180.4,392.8 181.6,406.1 182.7,421.7 183.9,430.8 185.1,419.2 186.3,413.3 187.5,410.9 188.6,402.0 189.8,397.5 191.0,387.3 192.2,390.6 193.4,392.2 194.5,392.7 195.7,393.1 196.9,405.5 198.1,408.9 199.3,405.0 200.4,408.5 201.6,407.1 202.8,391.2 204.0,404.4 205.2,417.2 206.3,420.8 207.5,412.9 208.7,398.0 209.9,395.2 211.1,407.1 212.2,418.9 213.4,410.4 214.6,394.8 215.8,396.1 217.0,391.1 218.1,394.6 219.3,409.3 220.5,400.8 221.7,404.3 222.9,409.5 224.0,416.5 225.2,410.0 226.4,416.3 227.6,409.6 228.8,407.5 229.9,397.5 231.1,396.3 232.3,403.2 233.5,401.1 234.7,410.7 235.8,404.3 237.0,409.6 238.2,420.5 239.4,417.3 240.6,419.7 241.7,428.7 242.9,421.3 244.1,423.4 245.3,414.4 246.5,412.8 247.6,415.5 248.8,414.3 250.0,424.2 251.2,415.7 252.4,417.7 253.5,403.5 254.7,403.4 255.9,409.3 257.1,399.0 258.3,400.0 259.4,415.3 260.6,407.3 261.8,411.0 263.0,397.9 264.2,395.3 265.3,404.9 266.5,405.6 267.7,410.4 268.9,414.3 270.1,400.4 271.2,402.6 272.4,407.6 273.6,405.6 274.8,405.7 276.0,415.1 277.1,409.9 278.3,396.0 279.5,397.7 280.7,401.3 281.9,403.0 283.0,412.0 284.2,413.3 285.4,416.3 286.6,417.2 287.8,427.4 288.9,429.1 290.1,426.8 291.3,413.8 292.5,415.4 293.7,400.6 294.9,396.8 296.0,411.2 297.2,411.9 298.4,408.6 299.6,416.0 300.8,409.9 301.9,390.2 303.1,388.3 304.3,391.2 305.5,392.6 306.7,398.4 307.8,414.0 309.0,410.0 310.2,399.4 311.4,396.3 312.6,398.9 313.7,398.3 314.9,402.5 316.1,401.1 317.3,418.2 318.5,417.3 319.6,422.0 320.8,417.8 322.0,430.8 323.2,431.7 324.4,419.0 325.5,410.6 326.7,403.9 327.9,404.2 329.1,398.4 330.3,410.2 331.4,408.0 332.6,411.6 333.8,418.0 335.0,402.4 336.2,403.5 337.3,399.7 338.5,398.6 339.7,398.0 340.9,409.7 342.1,407.2 343.2,413.7 344.4,412.3 345.6,413.0 346.8,403.6 348.0,389.9 349.1,396.4 350.3,390.6 351.5,401.9 352.7,408.8 353.9,407.0 355.0,412.3 356.2,415.4 357.4,409.4 358.6,414.5 359.8,410.5 360.9,400.8 362.1,407.4 363.3,408.5 364.5,406.9 365.7,419.2 366.8,412.9 368.0,415.2 369.2,406.8 370.4,414.3 371.6,399.1 372.7,409.4 373.9,409.2 375.1,407.3 376.3,410.5 377.5,411.5 378.6,406.5 379.8,390.3 381.0,404.5 382.2,403.6 383.4,407.6 384.5,411.1 385.7,405.8 386.9,403.9 388.1,394.8 389.3,403.1 390.4,399.2 391.6,410.5 392.8,409.5 394.0,400.6 395.2,401.5 396.3,396.6 397.5,391.9 398.7,407.8 399.9,421.0 401.1,406.3 402.2,399.5 403.4,402.5 404.6,402.4 405.8,398.9 407.0,392.0 408.1,403.1 409.3,401.2 410.5,404.7 411.7,399.0 412.9,392.6 414.1,401.3 415.2,410.1 416.4,398.2 417.6,400.0 418.8,393.5 420.0,398.0 421.1,404.5 422.3,396.3 423.5,396.8 424.7,402.2 425.9,400.8 427.0,399.8 428.2,405.2 429.4,404.9 430.6,408.8 431.8,409.5 432.9,401.9 434.1,394.1 435.3,399.3 436.5,396.1 437.7,391.1 438.8,403.6 440.0,399.5 441.2,396.7 442.4,400.3 443.6,401.0 444.7,400.2 445.9,407.9 447.1,404.9 448.3,393.2 449.5,402.6 450.6,404.9 451.8,399.7 453.0,400.0 454.2,392.8 455.4,404.6 456.5,413.0 457.7,407.3 458.9,404.3 460.1,403.1 461.3,398.2 462.4,396.1 463.6,391.9 464.8,402.6 466.0,395.7 467.2,405.6 468.3,403.0 469.5,396.5 470.7,392.2 471.9,392.6 473.1,394.9 474.2,402.9 475.4,404.9 476.6,404.3 477.8,393.4 479.0,402.1 480.1,394.7 481.3,399.5 482.5,401.9 483.7,402.7 484.9,403.1 486.0,407.2 487.2,396.5 488.4,403.2 489.6,398.6 490.8,407.5 491.9,407.2 493.1,395.1 494.3,391.9 495.5,394.0 496.7,398.9 497.8,405.7 499.0,402.9 500.2,408.1 501.4,409.2 502.6,397.0 503.7,400.3 504.9,403.0 506.1,402.1 507.3,399.3 508.5,393.8 509.6,410.4 510.8,409.8 512.0,397.8 513.2,412.8 514.4,401.0 515.5,412.4 516.7,412.1 517.9,395.7 519.1,391.5 520.3,395.2 521.4,390.7 522.6,399.9 523.8,402.4 525.0,411.1 526.2,404.7 527.4,406.0 528.5,399.6 529.7,406.9 530.9,407.2 532.1,408.2 533.3,407.9 534.4,405.5 535.6,404.9 536.8,399.2 538.0,405.0 539.2,407.3 540.3,413.3 541.5,410.3 542.7,409.7 543.9,399.6 545.1,398.5 546.2,405.2 547.4,401.5 548.6,398.2 549.8,409.0 551.0,408.5 552.1,400.9 553.3,406.9 554.5,403.4 555.7,403.9 556.9,402.1 558.0,413.7 559.2,403.0 560.4,406.6 561.6,416.0 562.8,411.5 563.9,408.4 565.1,405.5 566.3,404.3 567.5,405.4 568.7,399.5 569.8,408.3 571.0,410.4 572.2,410.9 573.4,405.1 574.6,402.2 575.7,397.9 576.9,394.4 578.1,406.1 579.3,405.2 580.5,401.7 581.6,410.2 582.8,407.6 584.0,408.9 585.2,397.9 586.4,400.4 587.5,411.3 588.7,406.4 589.9,400.2 591.1,398.6 592.3,401.5 593.4,413.0 594.6,406.2 595.8,398.2 597.0,399.2 598.2,404.8 599.3,406.8 600.5,406.4 601.7,409.7 602.9,405.4 604.1,395.9 605.2,391.8 606.4,399.4 607.6,402.8 608.8,405.4 610.0,406.9 611.1,402.9 612.3,396.6 613.5,402.1 614.7,400.0 615.9,400.2 617.0,399.2 618.2,406.0 619.4,402.4 620.6,408.8 621.8,399.1 622.9,400.4 624.1,392.9 625.3,401.6 626.5,410.1 627.7,410.4 628.8,414.2 630.0,406.8 631.2,412.8 632.4,410.0 633.6,404.0 634.7,408.1 635.9,405.0 637.1,398.6 638.3,406.2 639.5,411.1 640.6,411.9 641.8,406.1 643.0,402.8 644.2,400.2 645.4,402.0 646.6,398.4 647.7,402.8 648.9,397.2 650.1,396.8 651.3,397.7 652.5,402.9 653.6,409.8 654.8,399.6 656.0,397.1 657.2,405.1 658.4,404.4 659.5,400.0 660.7,395.1 661.9,393.0 663.1,401.9 664.3,405.3 665.4,411.0 666.6,403.7 667.8,404.8 669.0,397.4 670.2,397.7 671.3,399.5 672.5,409.4 673.7,398.8 674.9,398.9 676.1,400.2 677.2,405.7 678.4,404.7 679.6,402.5 680.8,398.9 682.0,393.2 683.1,392.1 684.3,396.0 685.5,400.5 686.7,404.1 687.9,397.6 689.0,392.3 690.2,391.3 691.4,391.0 692.6,391.0 693.8,395.0 694.9,398.6 696.1,398.7 697.3,399.5 698.5,400.4 699.7,399.9 700.8,397.6 702.0,399.6 703.2,395.9 704.4,400.0 705.6,391.2 706.7,399.8 707.9,393.7 709.1,392.4 710.3,399.2 711.5,397.2 712.6,395.7 713.8,417.2 715.0,410.6 716.2,402.8 717.4,392.1 718.5,392.2 719.7,402.6 720.9,398.7 722.1,408.0 723.3,400.7 724.4,394.6 725.6,393.7 726.8,392.8 728.0,397.7 729.2,402.4 730.3,396.2 731.5,387.0 732.7,391.6 733.9,397.9 735.1,402.8 736.2,402.9 737.4,390.1 738.6,385.6 739.8,389.7 741.0,394.1 742.1,390.5 743.3,391.9 744.5,399.6 745.7,408.0 746.9,405.4 748.0,392.0 749.2,385.1 750.4,387.5 751.6,394.0 752.8,396.1 753.9,393.0 755.1,402.7 756.3,399.7 757.5,395.8 758.7,385.3 759.8,390.5 761.0,396.6 762.2,390.1 763.4,395.3 764.6,390.5 765.8,396.5 766.9,387.1 768.1,388.5 769.3,394.7 770.5,387.0 771.7,391.7 772.8,389.9 774.0,398.2 775.2,403.3 776.4,392.8 777.6,387.5 778.7,392.0 779.9,390.9 781.1,397.6 782.3,400.5 783.5,394.4 784.6,392.9 785.8,396.7 787.0,388.6 788.2,397.7 789.4,386.9 790.5,383.3 791.7,389.9 792.9,386.7 794.1,393.8 795.3,397.1 796.4,384.1 797.6,386.5 798.8,390.1 800.0,388.5 801.2,389.5 802.3,396.0 803.5,388.4 804.7,395.1 805.9,394.5 807.1,391.5 808.2,389.8 809.4,391.9 810.6,393.4 811.8,398.2 813.0,394.0 814.1,399.5 815.3,398.8 816.5,398.0 817.7,393.3 818.9,393.7 820.0,391.4 821.2,383.6 822.4,390.9 823.6,386.7 824.8,395.4 825.9,393.6 827.1,399.1 828.3,391.6 829.5,394.4 830.7,387.1 831.8,389.9 833.0,388.9 834.2,388.5 835.4,389.3 836.6,387.1 837.7,386.5 838.9,390.7 840.1,395.9 841.3,393.0 842.5,386.8 843.6,392.8 844.8,407.5 846.0,403.0 847.2,395.5 848.4,390.8 849.5,390.2 850.7,392.1 851.9,390.1 853.1,386.0 854.3,390.4 855.4,395.4 856.6,381.2 857.8,395.3 859.0,399.5 860.2,387.9 861.3,383.7 862.5,401.1 863.7,397.8 864.9,398.9 866.1,398.9 867.2,398.3 868.4,394.4 869.6,382.6 870.8,385.8 872.0,402.1 873.1,397.2 874.3,395.7 875.5,394.2 876.7,395.4 877.9,396.5 879.0,391.6 880.2,388.1 881.4,397.9 882.6,381.8 883.8,381.8 885.0,385.9 886.1,398.7 887.3,402.6 888.5,395.4 889.7,387.4 890.9,396.3 892.0,394.1 893.2,383.0 894.4,400.9 895.6,400.6 896.8,387.5 897.9,396.4 899.1,400.7 900.3,391.6 901.5,392.2 902.7,391.1 903.8,384.3 905.0,387.3 906.2,388.7 907.4,390.4 908.6,391.4 909.7,397.9 910.9,392.1 912.1,391.4 913.3,388.1 914.5,391.6 915.6,399.3 916.8,401.3 918.0,391.6 919.2,381.7 920.4,391.1 921.5,397.2 922.7,397.5 923.9,387.4 925.1,389.9 926.3,397.6 927.4,394.5 928.6,382.4 929.8,391.0 931.0,388.6 932.2,386.5 933.3,391.3 934.5,382.2 935.7,389.0 936.9,391.8 938.1,383.7 939.2,380.5 940.4,389.4 941.6,400.8 942.8,398.3 944.0,389.9 945.1,386.0 946.3,385.8 947.5,390.5 948.7,386.5 949.9,385.6 951.0,384.0 952.2,375.8 953.4,384.1 954.6,397.5 955.8,395.7 956.9,380.1 958.1,381.8 959.3,385.0 960.5,383.2 961.7,383.6 962.8,389.7 964.0,391.1 965.2,392.0 966.4,379.3 967.6,368.9 968.7,385.5 969.9,398.3 971.1,394.0 972.3,391.5 973.5,397.9 974.6,389.9 975.8,388.8 977.0,396.2 978.2,396.5 979.4,397.6 980.5,385.7 981.7,391.9 982.9,399.0 984.1,396.2 985.3,394.6 986.4,388.7 987.6,385.1 988.8,390.6 990.0,406.9 991.2,399.2 992.3,395.4 993.5,397.9 994.7,396.1 995.9,390.5 997.1,395.5 998.2,386.6 999.4,393.8 1000.6,399.0 1001.8,391.0 1003.0,383.3 1004.2,382.6 1005.3,390.2 1006.5,391.6 1007.7,392.4 1008.9,383.7 1010.1,387.6 1011.2,389.5 1012.4,386.0 1013.6,393.7 1014.8,393.4 1016.0,376.5 1017.1,374.3 1018.3,379.9 1019.5,389.1 1020.7,382.4 1021.9,378.6 1023.0,393.1 1024.2,391.1 1025.4,391.6 1026.6,389.4 1027.8,380.3 1028.9,396.3 1030.1,392.2 1031.3,380.8 1032.5,392.9 1033.7,383.2 1034.8,394.2 1036.0,392.1 1037.2,384.7 1038.4,389.0 1039.6,387.1 1040.7,391.5 1041.9,383.7 1043.1,387.0 1044.3,386.2 1045.5,389.9 1046.6,390.5 1047.8,381.4 1049.0,378.3 1050.2,384.4 1051.4,383.1 1052.5,380.2 1053.7,388.2 1054.9,383.0 1056.1,389.7 1057.3,390.4 1058.4,388.7 1059.6,384.3 1060.8,387.4 1062.0,393.6 1063.2,388.3 1064.3,377.5 1065.5,374.8 1066.7,380.8 1067.9,388.0 1069.1,396.3 1070.2,395.7 1071.4,383.9 1072.6,378.2 1073.8,396.4 1075.0,393.1 1076.1,386.8 1077.3,392.9 1078.5,389.1 1079.7,379.2 1080.9,390.6 1082.0,395.0 1083.2,386.3 1084.4,392.8 1085.6,387.2 1086.8,391.2 1087.9,381.5 1089.1,374.7 1090.3,370.4 1091.5,366.8 1092.7,373.4 1093.8,382.8 1095.0,393.2 1096.2,387.9 1097.4,401.6 1098.6,396.4 1099.7,398.5 1100.9,400.8 1102.1,389.9 1103.3,391.9 1104.5,405.4 1105.6,397.9 1106.8,394.1 1108.0,402.7 1109.2,406.6 1110.4,390.2 1111.5,391.4 1112.7,396.8 1113.9,394.5 1115.1,400.8 1116.3,404.8 1117.5,404.7 1118.6,394.5 1119.8,390.3 1121.0,390.5 1122.2,386.8 1123.4,388.6 1124.5,386.2 1125.7,378.8 1126.9,382.9 1128.1,378.8 1129.3,372.0 1130.4,372.3 1131.6,359.5 1132.8,363.8 1134.0,378.3 1135.2,386.6 1136.3,380.9 1137.5,382.0 1138.7,385.3 1139.9,380.9 1141.1,379.2 1142.2,378.3 1143.4,374.4 1144.6,386.3 1145.8,382.7 1147.0,379.6 1148.1,381.2 1149.3,375.3 1150.5,381.3 1151.7,384.6 1152.9,385.5 1154.0,382.5 1155.2,382.4 1156.4,389.3 1157.6,391.6 1158.8,382.9 1159.9,381.5 1161.1,375.7 1162.3,392.4 1163.5,393.1 1164.7,385.7 1165.8,365.9 1167.0,372.8 1168.2,379.4 1169.4,382.3 1170.6,380.5 1171.7,376.4 1172.9,377.1 1174.1,381.4 1175.3,382.2 1176.5,375.3 1177.6,378.6 1178.8,377.2 1180.0,384.4 1181.2,386.4 1182.4,376.0 1183.5,383.5 1184.7,388.5 1185.9,385.1 1187.1,389.9 1188.3,382.0 1189.4,387.6 1190.6,380.4 1191.8,385.8 1193.0,388.5 1194.2,380.8 1195.3,389.9 1196.5,391.7 1197.7,382.8 1198.9,380.8 1200.1,383.5 1201.2,387.5 1202.4,381.3 1203.6,377.7 1204.8,375.9 1206.0,382.3 1207.1,376.1 1208.3,385.0 1209.5,386.0 1210.7,374.2 1211.9,388.3 1213.0,386.0 1214.2,382.7 1215.4,387.5 1216.6,373.8 1217.8,366.1 1218.9,364.0 1220.1,359.6 1221.3,361.0 1222.5,371.7 1223.7,354.6 1224.8,362.4 1226.0,366.8 1227.2,372.9 1228.4,372.3 1229.6,372.3 1230.7,376.4 1231.9,375.5 1233.1,376.4 1234.3,379.4 1235.5,381.6 1236.7,380.5 1237.8,375.7 1239.0,373.6 1240.2,368.7 1241.4,362.8 1242.6,355.2 1243.7,357.8 1244.9,356.4 1246.1,358.2 1247.3,355.0 1248.5,358.8 1249.6,363.6 1250.8,370.7 1252.0,375.7 1253.2,376.7 1254.4,367.8 1255.5,364.3 1256.7,360.0 1257.9,363.4 1259.1,366.2 1260.3,372.7 1261.4,381.7 1262.6,381.9 1263.8,385.7 1265.0,394.6 1266.2,395.5 1267.3,388.1 1268.5,386.7 1269.7,383.1 1270.9,379.6 1272.1,377.3 1273.2,383.3 1274.4,373.4 1275.6,369.6 1276.8,371.9 1278.0,380.3 1279.1,373.3 1280.3,370.4 1281.5,372.7 1282.7,374.1 1283.9,377.3 1285.0,372.5 1286.2,373.9 1287.4,377.5 1288.6,376.1 1289.8,371.9 1290.9,370.3 1292.1,378.6 1293.3,376.2 1294.5,377.2 1295.7,379.1 1296.8,370.2 1298.0,370.8 1299.2,373.1" stroke="#0000ff" stroke-width="1.3" fill="none" stroke-linejoin="round"/>
<rect x="101.40" y="348.60" width="1198.00" height="83.70" fill="none" stroke="#333" stroke-width="1.1"/>
<line x1="97.90" y1="416.40" x2="101.40" y2="416.40" stroke="#333" stroke-width="0.8"/>
<text x="96.00" y="420.00" font-family="Liberation Sans" font-size="10.42" fill="#000" text-anchor="end" textLength="5.92" lengthAdjust="spacingAndGlyphs" stroke="#000" stroke-width="0.11">0</text>
<line x1="97.90" y1="394.03" x2="101.40" y2="394.03" stroke="#333" stroke-width="0.8"/>
<text x="96.00" y="397.63" font-family="Liberation Sans" font-size="10.42" fill="#000" text-anchor="end" textLength="5.92" lengthAdjust="spacingAndGlyphs" stroke="#000" stroke-width="0.11">5</text>
<line x1="97.90" y1="371.66" x2="101.40" y2="371.66" stroke="#333" stroke-width="0.8"/>
<text x="96.00" y="375.26" font-family="Liberation Sans" font-size="10.42" fill="#000" text-anchor="end" textLength="11.83" lengthAdjust="spacingAndGlyphs" stroke="#000" stroke-width="0.11">10</text>
<line x1="97.90" y1="349.29" x2="101.40" y2="349.29" stroke="#333" stroke-width="0.8"/>
<text x="96.00" y="352.89" font-family="Liberation Sans" font-size="10.42" fill="#000" text-anchor="end" textLength="11.83" lengthAdjust="spacingAndGlyphs" stroke="#000" stroke-width="0.11">15</text>
<line x1="113.10" y1="432.30" x2="113.10" y2="435.80" stroke="#333" stroke-width="0.8"/>
<text x="113.10" y="447.40" font-family="Liberation Sans" font-size="10.42" fill="#000" text-anchor="middle" textLength="23.67" lengthAdjust="spacingAndGlyphs" stroke="#000" stroke-width="0.11">3500</text>
<line x1="172.11" y1="432.30" x2="172.11" y2="435.80" stroke="#333" stroke-width="0.8"/>
<text x="172.11" y="447.40" font-family="Liberation Sans" font-size="10.42" fill="#000" text-anchor="middle" textLength="23.67" lengthAdjust="spacingAndGlyphs" stroke="#000" stroke-width="0.11">3600</text>
<line x1="231.12" y1="432.30" x2="231.12" y2="435.80" stroke="#333" stroke-width="0.8"/>
<text x="231.12" y="447.40" font-family="Liberation Sans" font-size="10.42" fill="#000" text-anchor="middle" textLength="23.67" lengthAdjust="spacingAndGlyphs" stroke="#000" stroke-width="0.11">3700</text>
<line x1="290.13" y1="432.30" x2="290.13" y2="435.80" stroke="#333" stroke-width="0.8"/>
<text x="290.13" y="447.40" font-family="Liberation Sans" font-size="10.42" fill="#000" text-anchor="middle" textLength="23.67" lengthAdjust="spacingAndGlyphs" stroke="#000" stroke-width="0.11">3800</text>
<line x1="349.14" y1="432.30" x2="349.14" y2="435.80" stroke="#333" stroke-width="0.8"/>
<text x="349.14" y="447.40" font-family="Liberation Sans" font-size="10.42" fill="#000" text-anchor="middle" textLength="23.67" lengthAdjust="spacingAndGlyphs" stroke="#000" stroke-width="0.11">3900</text>
<line x1="408.15" y1="432.30" x2="408.15" y2="435.80" stroke="#333" stroke-width="0.8"/>
<text x="408.15" y="447.40" font-family="Liberation Sans" font-size="10.42" fill="#000" text-anchor="middle" textLength="23.67" lengthAdjust="spacingAndGlyphs" stroke="#000" stroke-width="0.11">4000</text>
<line x1="467.16" y1="432.30" x2="467.16" y2="435.80" stroke="#333" stroke-width="0.8"/>
<text x="467.16" y="447.40" font-family="Liberation Sans" font-size="10.42" fill="#000" text-anchor="middle" textLength="23.67" lengthAdjust="spacingAndGlyphs" stroke="#000" stroke-width="0.11">4100</text>
<line x1="526.17" y1="432.30" x2="526.17" y2="435.80" stroke="#333" stroke-width="0.8"/>
<text x="526.17" y="447.40" font-family="Liberation Sans" font-size="10.42" fill="#000" text-anchor="middle" textLength="23.67" lengthAdjust="spacingAndGlyphs" stroke="#000" stroke-width="0.11">4200</text>
<line x1="585.18" y1="432.30" x2="585.18" y2="435.80" stroke="#333" stroke-width="0.8"/>
<text x="585.18" y="447.40" font-family="Liberation Sans" font-size="10.42" fill="#000" text-anchor="middle" textLength="23.67" lengthAdjust="spacingAndGlyphs" stroke="#000" stroke-width="0.11">4300</text>
<line x1="644.19" y1="432.30" x2="644.19" y2="435.80" stroke="#333" stroke-width="0.8"/>
<text x="644.19" y="447.40" font-family="Liberation Sans" font-size="10.42" fill="#000" text-anchor="middle" textLength="23.67" lengthAdjust="spacingAndGlyphs" stroke="#000" stroke-width="0.11">4400</text>
<line x1="703.20" y1="432.30" x2="703.20" y2="435.80" stroke="#333" stroke-width="0.8"/>
<text x="703.20" y="447.40" font-family="Liberation Sans" font-size="10.42" fill="#000" text-anchor="middle" textLength="23.67" lengthAdjust="spacingAndGlyphs" stroke="#000" stroke-width="0.11">4500</text>
<line x1="762.21" y1="432.30" x2="762.21" y2="435.80" stroke="#333" stroke-width="0.8"/>
<text x="762.21" y="447.40" font-family="Liberation Sans" font-size="10.42" fill="#000" text-anchor="middle" textLength="23.67" lengthAdjust="spacingAndGlyphs" stroke="#000" stroke-width="0.11">4600</text>
<line x1="821.22" y1="432.30" x2="821.22" y2="435.80" stroke="#333" stroke-width="0.8"/>
<text x="821.22" y="447.40" font-family="Liberation Sans" font-size="10.42" fill="#000" text-anchor="middle" textLength="23.67" lengthAdjust="spacingAndGlyphs" stroke="#000" stroke-width="0.11">4700</text>
<line x1="880.23" y1="432.30" x2="880.23" y2="435.80" stroke="#333" stroke-width="0.8"/>
<text x="880.23" y="447.40" font-family="Liberation Sans" font-size="10.42" fill="#000" text-anchor="middle" textLength="23.67" lengthAdjust="spacingAndGlyphs" stroke="#000" stroke-width="0.11">4800</text>
<line x1="939.24" y1="432.30" x2="939.24" y2="435.80" stroke="#333" stroke-width="0.8"/>
<text x="939.24" y="447.40" font-family="Liberation Sans" font-size="10.42" fill="#000" text-anchor="middle" textLength="23.67" lengthAdjust="spacingAndGlyphs" stroke="#000" stroke-width="0.11">4900</text>
<line x1="998.25" y1="432.30" x2="998.25" y2="435.80" stroke="#333" stroke-width="0.8"/>
<text x="998.25" y="447.40" font-family="Liberation Sans" font-size="10.42" fill="#000" text-anchor="middle" textLength="23.67" lengthAdjust="spacingAndGlyphs" stroke="#000" stroke-width="0.11">5000</text>
<line x1="1057.26" y1="432.30" x2="1057.26" y2="435.80" stroke="#333" stroke-width="0.8"/>
<text x="1057.26" y="447.40" font-family="Liberation Sans" font-size="10.42" fill="#000" text-anchor="middle" textLength="23.67" lengthAdjust="spacingAndGlyphs" stroke="#000" stroke-width="0.11">5100</text>
<line x1="1116.27" y1="432.30" x2="1116.27" y2="435.80" stroke="#333" stroke-width="0.8"/>
<text x="1116.27" y="447.40" font-family="Liberation Sans" font-size="10.42" fill="#000" text-anchor="middle" textLength="23.67" lengthAdjust="spacingAndGlyphs" stroke="#000" stroke-width="0.11">5200</text>
<line x1="1175.28" y1="432.30" x2="1175.28" y2="435.80" stroke="#333" stroke-width="0.8"/>
<text x="1175.28" y="447.40" font-family="Liberation Sans" font-size="10.42" fill="#000" text-anchor="middle" textLength="23.67" lengthAdjust="spacingAndGlyphs" stroke="#000" stroke-width="0.11">5300</text>
<line x1="1234.29" y1="432.30" x2="1234.29" y2="435.80" stroke="#333" stroke-width="0.8"/>
<text x="1234.29" y="447.40" font-family="Liberation Sans" font-size="10.42" fill="#000" text-anchor="middle" textLength="23.67" lengthAdjust="spacingAndGlyphs" stroke="#000" stroke-width="0.11">5400</text>
<line x1="1293.30" y1="432.30" x2="1293.30" y2="435.80" stroke="#333" stroke-width="0.8"/>
<text x="1293.30" y="447.40" font-family="Liberation Sans" font-size="10.42" fill="#000" text-anchor="middle" textLength="23.67" lengthAdjust="spacingAndGlyphs" stroke="#000" stroke-width="0.11">5500</text>
<text x="112.60" y="346.00" font-family="Liberation Sans" font-size="9.9" fill="#000" textLength="38.2" lengthAdjust="spacingAndGlyphs">e<tspan font-size="7" dy="-4">−17</tspan><tspan dy="4">x2</tspan><tspan font-style="italic">Å</tspan></text>
<text transform="translate(113.60,319.30) rotate(90)" font-family="Liberation Sans" font-size="10.49" fill="#4169e1" textLength="19.20" lengthAdjust="spacingAndGlyphs">MgII</text>
<text transform="translate(113.60,348.40) rotate(90)" font-family="Liberation Sans" font-size="10.12" fill="#4169e1" text-anchor="end">{</text>
<text transform="translate(131.00,319.30) rotate(90)" font-family="Liberation Sans" font-size="10.49" fill="#800080" textLength="13.18" lengthAdjust="spacingAndGlyphs">NV</text>
<text transform="translate(131.00,348.40) rotate(90)" font-family="Liberation Sans" font-size="10.12" fill="#800080" text-anchor="end">{</text>
<text transform="translate(169.50,322.50) rotate(90)" font-family="Liberation Sans" font-size="10.49" fill="#800080" textLength="13.82" lengthAdjust="spacingAndGlyphs">SiII</text>
<text transform="translate(169.50,348.40) rotate(90)" font-family="Liberation Sans" font-size="10.12" fill="#800080" text-anchor="end">{</text>
<text transform="translate(188.80,319.30) rotate(90)" font-family="Liberation Sans" font-size="10.49" fill="#8a2be2" textLength="16.25" lengthAdjust="spacingAndGlyphs">OVI</text>
<text transform="translate(188.80,348.40) rotate(90)" font-family="Liberation Sans" font-size="10.12" fill="#8a2be2" text-anchor="end">{</text>
<text transform="translate(233.80,323.80) rotate(90)" font-family="Liberation Sans" font-size="10.49" fill="#ff00ff" textLength="14.56" lengthAdjust="spacingAndGlyphs">CIII</text>
<text transform="translate(233.80,348.40) rotate(90)" font-family="Liberation Sans" font-size="10.12" fill="#ff00ff" text-anchor="end">{</text>
<text transform="translate(307.10,319.40) rotate(90)" font-family="Liberation Sans" font-size="10.49" fill="#87ceeb" textLength="19.20" lengthAdjust="spacingAndGlyphs">MgII</text>
<text transform="translate(307.10,348.40) rotate(90)" font-family="Liberation Sans" font-size="10.12" fill="#87ceeb" text-anchor="end">{</text>
<text transform="translate(327.10,319.40) rotate(90)" font-family="Liberation Sans" font-size="10.49" fill="#87ceeb" textLength="19.20" lengthAdjust="spacingAndGlyphs">MgII</text>
<text transform="translate(327.10,348.40) rotate(90)" font-family="Liberation Sans" font-size="10.12" fill="#87ceeb" text-anchor="end">{</text>
<text transform="translate(394.10,320.70) rotate(90)" font-family="Liberation Sans" font-size="10.49" fill="#800080" textLength="17.40" lengthAdjust="spacingAndGlyphs">SiIV</text>
<text transform="translate(394.10,348.40) rotate(90)" font-family="Liberation Sans" font-size="10.12" fill="#800080" text-anchor="end">{</text>
<text transform="translate(423.20,322.60) rotate(90)" font-family="Liberation Sans" font-size="10.49" fill="#ffa500" textLength="16.63" lengthAdjust="spacingAndGlyphs">Ly<tspan font-style="italic">α</tspan></text>
<text transform="translate(423.20,348.40) rotate(90)" font-family="Liberation Sans" font-size="10.12" fill="#ffa500" text-anchor="end">{</text>
<text transform="translate(434.70,322.60) rotate(90)" font-family="Liberation Sans" font-size="10.49" fill="#00ff00" textLength="12.67" lengthAdjust="spacingAndGlyphs">OII</text>
<text transform="translate(434.70,348.40) rotate(90)" font-family="Liberation Sans" font-size="10.12" fill="#00ff00" text-anchor="end">{</text>
<text transform="translate(454.70,319.40) rotate(90)" font-family="Liberation Sans" font-size="10.49" fill="#008000" textLength="19.20" lengthAdjust="spacingAndGlyphs">MgII</text>
<text transform="translate(454.70,348.40) rotate(90)" font-family="Liberation Sans" font-size="10.12" fill="#008000" text-anchor="end">{</text>
<text transform="translate(472.70,319.40) rotate(90)" font-family="Liberation Sans" font-size="10.49" fill="#ffa500" textLength="13.18" lengthAdjust="spacingAndGlyphs">NV</text>
<text transform="translate(472.70,348.40) rotate(90)" font-family="Liberation Sans" font-size="10.12" fill="#ffa500" text-anchor="end">{</text>
<text transform="translate(506.70,323.00) rotate(90)" font-family="Liberation Sans" font-size="10.49" fill="#0000ff" textLength="12.67" lengthAdjust="spacingAndGlyphs">OII</text>
<text transform="translate(506.70,348.40) rotate(90)" font-family="Liberation Sans" font-size="10.12" fill="#0000ff" text-anchor="end">{</text>
<text transform="translate(517.00,324.40) rotate(90)" font-family="Liberation Sans" font-size="10.49" fill="#ffa500" textLength="13.82" lengthAdjust="spacingAndGlyphs">SiII</text>
<text transform="translate(517.00,348.40) rotate(90)" font-family="Liberation Sans" font-size="10.12" fill="#ffa500" text-anchor="end">{</text>
<text transform="translate(562.30,322.50) rotate(90)" font-family="Liberation Sans" font-size="10.49" fill="#8a2be2" textLength="16.63" lengthAdjust="spacingAndGlyphs">Ly<tspan font-style="italic">α</tspan></text>
<text transform="translate(562.30,348.40) rotate(90)" font-family="Liberation Sans" font-size="10.12" fill="#8a2be2" text-anchor="end">{</text>
<text transform="translate(615.00,319.30) rotate(90)" font-family="Liberation Sans" font-size="10.49" fill="#8a2be2" textLength="13.18" lengthAdjust="spacingAndGlyphs">NV</text>
<text transform="translate(615.00,348.40) rotate(90)" font-family="Liberation Sans" font-size="10.12" fill="#8a2be2" text-anchor="end">{</text>
<text transform="translate(649.70,319.30) rotate(90)" font-family="Liberation Sans" font-size="10.49" fill="#800080" textLength="15.43" lengthAdjust="spacingAndGlyphs">CIV</text>
<text transform="translate(649.70,348.40) rotate(90)" font-family="Liberation Sans" font-size="10.12" fill="#800080" text-anchor="end">{</text>
<text transform="translate(662.00,323.80) rotate(90)" font-family="Liberation Sans" font-size="10.49" fill="#8a2be2" textLength="13.82" lengthAdjust="spacingAndGlyphs">SiII</text>
<text transform="translate(662.00,348.40) rotate(90)" font-family="Liberation Sans" font-size="10.12" fill="#8a2be2" text-anchor="end">{</text>
<text transform="translate(709.50,323.20) rotate(90)" font-family="Liberation Sans" font-size="10.49" fill="#ff00ff" textLength="11.85" lengthAdjust="spacingAndGlyphs">CII</text>
<text transform="translate(709.50,348.40) rotate(90)" font-family="Liberation Sans" font-size="10.12" fill="#ff00ff" text-anchor="end">{</text>
<text transform="translate(777.20,319.00) rotate(90)" font-family="Liberation Sans" font-size="10.49" fill="#ff0000" textLength="16.25" lengthAdjust="spacingAndGlyphs">OVI</text>
<text transform="translate(777.20,348.40) rotate(90)" font-family="Liberation Sans" font-size="10.12" fill="#ff0000" text-anchor="end">{</text>
<text transform="translate(803.00,320.10) rotate(90)" font-family="Liberation Sans" font-size="10.49" fill="#800080" textLength="18.00" lengthAdjust="spacingAndGlyphs">HeII</text>
<text transform="translate(803.00,348.40) rotate(90)" font-family="Liberation Sans" font-size="10.12" fill="#800080" text-anchor="end">{</text>
<text transform="translate(828.00,327.60) rotate(90)" font-family="Liberation Sans" font-size="10.49" fill="#00ff00" textLength="12.36" lengthAdjust="spacingAndGlyphs">H<tspan font-style="italic">γ</tspan></text>
<text transform="translate(828.00,348.40) rotate(90)" font-family="Liberation Sans" font-size="10.12" fill="#00ff00" text-anchor="end">{</text>
<text transform="translate(854.40,327.60) rotate(90)" font-family="Liberation Sans" font-size="10.49" fill="#00ff00" textLength="12.36" lengthAdjust="spacingAndGlyphs">H<tspan font-style="italic">γ</tspan></text>
<text transform="translate(854.40,348.40) rotate(90)" font-family="Liberation Sans" font-size="10.12" fill="#00ff00" text-anchor="end">{</text>
<text transform="translate(910.10,327.40) rotate(90)" font-family="Liberation Sans" font-size="10.49" fill="#0000ff" textLength="12.36" lengthAdjust="spacingAndGlyphs">H<tspan font-style="italic">γ</tspan></text>
<text transform="translate(910.10,348.40) rotate(90)" font-family="Liberation Sans" font-size="10.12" fill="#0000ff" text-anchor="end">{</text>
<text transform="translate(940.10,320.80) rotate(90)" font-family="Liberation Sans" font-size="10.49" fill="#8a2be2" textLength="17.40" lengthAdjust="spacingAndGlyphs">SiIV</text>
<text transform="translate(940.10,348.40) rotate(90)" font-family="Liberation Sans" font-size="10.12" fill="#8a2be2" text-anchor="end">{</text>
<text transform="translate(1060.40,322.50) rotate(90)" font-family="Liberation Sans" font-size="10.49" fill="#87ceeb" textLength="12.67" lengthAdjust="spacingAndGlyphs">OII</text>
<text transform="translate(1060.40,348.40) rotate(90)" font-family="Liberation Sans" font-size="10.12" fill="#87ceeb" text-anchor="end">{</text>
<text transform="translate(1076.70,319.60) rotate(90)" font-family="Liberation Sans" font-size="10.49" fill="#ffa500" textLength="15.43" lengthAdjust="spacingAndGlyphs">CIV</text>
<text transform="translate(1076.70,348.40) rotate(90)" font-family="Liberation Sans" font-size="10.12" fill="#ffa500" text-anchor="end">{</text>
<text transform="translate(1087.40,322.50) rotate(90)" font-family="Liberation Sans" font-size="10.49" fill="#87ceeb" textLength="12.67" lengthAdjust="spacingAndGlyphs">OII</text>
<text transform="translate(1087.40,348.40) rotate(90)" font-family="Liberation Sans" font-size="10.12" fill="#87ceeb" text-anchor="end">{</text>
<text transform="translate(1161.60,327.40) rotate(90)" font-family="Liberation Sans" font-size="10.49" fill="#00ff00" textLength="12.79" lengthAdjust="spacingAndGlyphs">H<tspan font-style="italic">β</tspan></text>
<text transform="translate(1161.60,348.40) rotate(90)" font-family="Liberation Sans" font-size="10.12" fill="#00ff00" text-anchor="end">{</text>
<text transform="translate(1191.50,327.40) rotate(90)" font-family="Liberation Sans" font-size="10.49" fill="#00ff00" textLength="12.79" lengthAdjust="spacingAndGlyphs">H<tspan font-style="italic">β</tspan></text>
<text transform="translate(1191.50,348.40) rotate(90)" font-family="Liberation Sans" font-size="10.12" fill="#00ff00" text-anchor="end">{</text>
<text transform="translate(1224.30,322.50) rotate(90)" font-family="Liberation Sans" font-size="10.49" fill="#00ff00" textLength="15.38" lengthAdjust="spacingAndGlyphs">OIII</text>
<text transform="translate(1224.30,348.40) rotate(90)" font-family="Liberation Sans" font-size="10.12" fill="#00ff00" text-anchor="end">{</text>
<text transform="translate(1286.00,322.50) rotate(90)" font-family="Liberation Sans" font-size="10.49" fill="#00ff00" textLength="15.38" lengthAdjust="spacingAndGlyphs">OIII</text>
<text transform="translate(1286.00,348.40) rotate(90)" font-family="Liberation Sans" font-size="10.12" fill="#00ff00" text-anchor="end">{</text>
<text transform="translate(457.90,280.20) rotate(90)" font-family="Liberation Sans" font-size="10.49" fill="#00ff00" textLength="12.67" lengthAdjust="spacingAndGlyphs">OII</text>
<text transform="translate(457.90,306.70) rotate(90)" font-family="Liberation Sans" font-size="10.12" fill="#00ff00" text-anchor="end">{</text>
<text transform="translate(778.00,278.70) rotate(90)" font-family="Liberation Sans" font-size="10.49" fill="#ffa500" textLength="17.40" lengthAdjust="spacingAndGlyphs">SiIV</text>
<text transform="translate(778.00,306.70) rotate(90)" font-family="Liberation Sans" font-size="10.12" fill="#ffa500" text-anchor="end">{</text>
<text transform="translate(800.80,280.10) rotate(90)" font-family="Liberation Sans" font-size="10.49" fill="#4169e1" textLength="12.67" lengthAdjust="spacingAndGlyphs">OII</text>
<text transform="translate(800.80,306.70) rotate(90)" font-family="Liberation Sans" font-size="10.12" fill="#4169e1" text-anchor="end">{</text>
<rect x="403.00" y="450.00" width="17.20" height="6.00" fill="#ff0000"/>
<text x="426.30" y="456.30" font-family="Liberation Sans" font-size="8.5" fill="#000">Ly<tspan font-style="italic">α</tspan></text>
<rect x="456.55" y="450.00" width="17.20" height="6.00" fill="#008000"/>
<text x="479.85" y="456.30" font-family="Liberation Sans" font-size="8.5" fill="#000">OII</text>
<rect x="510.10" y="450.00" width="17.20" height="6.00" fill="#00ff00"/>
<text x="533.40" y="456.30" font-family="Liberation Sans" font-size="8.5" fill="#000">OIII</text>
<rect x="563.65" y="450.00" width="17.20" height="6.00" fill="#8a2be2"/>
<text x="586.95" y="456.30" font-family="Liberation Sans" font-size="8.5" fill="#000">CIV</text>
<rect x="617.20" y="450.00" width="17.20" height="6.00" fill="#800080"/>
<text x="640.50" y="456.30" font-family="Liberation Sans" font-size="8.5" fill="#000">CIII</text>
<rect x="670.75" y="450.00" width="17.20" height="6.00" fill="#ff00ff"/>
<text x="694.05" y="456.30" font-family="Liberation Sans" font-size="8.5" fill="#000">MgII</text>
<rect x="724.30" y="450.00" width="17.20" height="6.00" fill="#0000ff"/>
<text x="747.60" y="456.30" font-family="Liberation Sans" font-size="8.5" fill="#000">H<tspan font-style="italic">β</tspan></text>
<rect x="777.85" y="450.00" width="17.20" height="6.00" fill="#4169e1"/>
<text x="801.15" y="456.30" font-family="Liberation Sans" font-size="8.5" fill="#000">H<tspan font-style="italic">γ</tspan></text>
<rect x="831.40" y="450.00" width="17.20" height="6.00" fill="#ffa500"/>
<text x="854.70" y="456.30" font-family="Liberation Sans" font-size="8.5" fill="#000">HeII</text>
<rect x="884.95" y="450.00" width="17.20" height="6.00" fill="#87ceeb"/>
<text x="908.25" y="456.30" font-family="Liberation Sans" font-size="8.5" fill="#000">(K)CaII</text>
<rect x="938.50" y="450.00" width="17.20" height="6.00" fill="#87ceeb"/>
<text x="961.80" y="456.30" font-family="Liberation Sans" font-size="8.5" fill="#000">(H)CaII</text>
<text transform="translate(70.30,499.00) scale(1,1.04)" font-family="Liberation Mono" font-size="13.04" fill="#000" stroke="#000" stroke-width="0.1">HSC-DEX : Possible Matches = 1 (within +/- 3")  P(LAE)/P(OII):</text>
<text x="562.00" y="499.00" font-family="Liberation Sans" font-size="13.25" fill="#000" textLength="35.78" lengthAdjust="spacingAndGlyphs" stroke="#000" stroke-width="0.15">0.018</text>
<text x="603.90" y="493.50" font-family="Liberation Sans" font-size="9.22" fill="#000" textLength="24.91" lengthAdjust="spacingAndGlyphs" stroke="#000" stroke-width="0.10">0.039</text>
<text x="603.90" y="501.80" font-family="Liberation Sans" font-size="9.22" fill="#000" textLength="24.91" lengthAdjust="spacingAndGlyphs" stroke="#000" stroke-width="0.10">0.009</text>
<text transform="translate(637.50,499.00) scale(1,1.04)" font-family="Liberation Mono" font-size="13.04" fill="#000" stroke="#000" stroke-width="0.1">(r)</text>
<rect x="70.00" y="532.50" width="148.60" height="147.70" fill="#ccc" filter="url(#nzbg)"/>
<ellipse cx="141" cy="603.5" rx="29" ry="27" fill="url(#blobF)"/>
<circle cx="124.6" cy="558.7" r="12.6" fill="none" stroke="#787878" stroke-width="1.7" stroke-dasharray="1.6,0.7"/>
<circle cx="148.7" cy="556.4" r="12.6" fill="none" stroke="#787878" stroke-width="1.7" stroke-dasharray="1.6,0.7"/>
<circle cx="113.3" cy="579.4" r="12.6" fill="none" stroke="#787878" stroke-width="1.7" stroke-dasharray="1.6,0.7"/>
<circle cx="103.1" cy="602" r="12.6" fill="none" stroke="#787878" stroke-width="1.7" stroke-dasharray="1.6,0.7"/>
<circle cx="93" cy="624.5" r="12.6" fill="none" stroke="#787878" stroke-width="1.7" stroke-dasharray="1.6,0.7"/>
<circle cx="107.6" cy="644.8" r="12.6" fill="none" stroke="#787878" stroke-width="1.7" stroke-dasharray="1.6,0.7"/>
<circle cx="137.4" cy="578.3" r="12.6" fill="none" stroke="#ffa500" stroke-width="2" stroke-dasharray="3.5,1.2"/>
<circle cx="127.3" cy="600.8" r="12.6" fill="none" stroke="#0000ff" stroke-width="2" stroke-dasharray="3.5,1.2"/>
<circle cx="117.3" cy="622.2" r="12.6" fill="none" stroke="#ff0000" stroke-width="2" stroke-dasharray="3.5,1.2"/>
<circle cx="141.5" cy="620.4" r="12.6" fill="none" stroke="#00ff00" stroke-width="2" stroke-dasharray="3.5,1.2"/>
<rect x="94.65" y="557.30" width="98.10" height="98.40" fill="none" stroke="#ff0000" stroke-width="1.2"/>
<text x="143.70" y="546.70" font-family="Liberation Sans" font-size="11.13" fill="#ff0000" text-anchor="middle" textLength="7.85" lengthAdjust="spacingAndGlyphs" stroke="#ff0000" stroke-width="0.13">N</text>
<text x="80.00" y="609.90" font-family="Liberation Sans" font-size="11.13" fill="#ff0000" text-anchor="middle" textLength="6.63" lengthAdjust="spacingAndGlyphs" stroke="#ff0000" stroke-width="0.13">E</text>
<rect x="70.00" y="532.50" width="148.60" height="147.70" fill="none" stroke="#222" stroke-width="1.1"/>
<line x1="78.30" y1="680.20" x2="78.30" y2="683.70" stroke="#222" stroke-width="0.9"/>
<text x="75.10" y="696.50" font-family="Liberation Sans" font-size="10.81" fill="#000" text-anchor="middle" textLength="15.04" lengthAdjust="spacingAndGlyphs" stroke="#000" stroke-width="0.12">−4</text>
<line x1="66.50" y1="672.10" x2="70.00" y2="672.10" stroke="#222" stroke-width="0.9"/>
<text x="62.40" y="675.80" font-family="Liberation Sans" font-size="10.81" fill="#000" text-anchor="end" textLength="15.04" lengthAdjust="spacingAndGlyphs" stroke="#000" stroke-width="0.12">−4</text>
<line x1="111.00" y1="680.20" x2="111.00" y2="683.70" stroke="#222" stroke-width="0.9"/>
<text x="107.80" y="696.50" font-family="Liberation Sans" font-size="10.81" fill="#000" text-anchor="middle" textLength="15.04" lengthAdjust="spacingAndGlyphs" stroke="#000" stroke-width="0.12">−2</text>
<line x1="66.50" y1="639.30" x2="70.00" y2="639.30" stroke="#222" stroke-width="0.9"/>
<text x="62.40" y="643.00" font-family="Liberation Sans" font-size="10.81" fill="#000" text-anchor="end" textLength="15.04" lengthAdjust="spacingAndGlyphs" stroke="#000" stroke-width="0.12">−2</text>
<line x1="143.70" y1="680.20" x2="143.70" y2="683.70" stroke="#222" stroke-width="0.9"/>
<text x="143.70" y="696.50" font-family="Liberation Sans" font-size="10.81" fill="#000" text-anchor="middle" textLength="6.49" lengthAdjust="spacingAndGlyphs" stroke="#000" stroke-width="0.12">0</text>
<line x1="66.50" y1="606.50" x2="70.00" y2="606.50" stroke="#222" stroke-width="0.9"/>
<text x="62.40" y="610.20" font-family="Liberation Sans" font-size="10.81" fill="#000" text-anchor="end" textLength="6.49" lengthAdjust="spacingAndGlyphs" stroke="#000" stroke-width="0.12">0</text>
<line x1="176.40" y1="680.20" x2="176.40" y2="683.70" stroke="#222" stroke-width="0.9"/>
<text x="176.40" y="696.50" font-family="Liberation Sans" font-size="10.81" fill="#000" text-anchor="middle" textLength="6.49" lengthAdjust="spacingAndGlyphs" stroke="#000" stroke-width="0.12">2</text>
<line x1="66.50" y1="573.70" x2="70.00" y2="573.70" stroke="#222" stroke-width="0.9"/>
<text x="62.40" y="577.40" font-family="Liberation Sans" font-size="10.81" fill="#000" text-anchor="end" textLength="6.49" lengthAdjust="spacingAndGlyphs" stroke="#000" stroke-width="0.12">2</text>
<line x1="209.10" y1="680.20" x2="209.10" y2="683.70" stroke="#222" stroke-width="0.9"/>
<text x="209.10" y="696.50" font-family="Liberation Sans" font-size="10.81" fill="#000" text-anchor="middle" textLength="6.49" lengthAdjust="spacingAndGlyphs" stroke="#000" stroke-width="0.12">4</text>
<line x1="66.50" y1="540.90" x2="70.00" y2="540.90" stroke="#222" stroke-width="0.9"/>
<text x="62.40" y="544.60" font-family="Liberation Sans" font-size="10.81" fill="#000" text-anchor="end" textLength="6.49" lengthAdjust="spacingAndGlyphs" stroke="#000" stroke-width="0.12">4</text>
<text x="144.30" y="525.70" font-family="Liberation Sans" font-size="13.25" fill="#000" text-anchor="middle" textLength="91.03" lengthAdjust="spacingAndGlyphs" stroke="#000" stroke-width="0.15">Fiber Positions</text>
<text x="143.70" y="706.30" font-family="Liberation Sans" font-size="11.24" fill="#000" text-anchor="middle" textLength="40.08" lengthAdjust="spacingAndGlyphs" stroke="#000" stroke-width="0.13">arcsecs</text>
<rect x="255.50" y="532.70" width="148.10" height="147.40" fill="#433e85"/>
<g shape-rendering="crispEdges"><rect x="255.5" y="532.7" width="2.8" height="2.8" fill="#277e8e"/><rect x="258.0" y="532.7" width="2.8" height="2.8" fill="#25848e"/><rect x="260.5" y="532.7" width="12.8" height="2.8" fill="#21918c"/><rect x="273.0" y="532.7" width="2.8" height="2.8" fill="#1e9c89"/><rect x="275.5" y="532.7" width="2.8" height="2.8" fill="#22a884"/><rect x="278.0" y="532.7" width="5.3" height="2.8" fill="#2fb47c"/><rect x="283.0" y="532.7" width="2.8" height="2.8" fill="#22a884"/><rect x="285.5" y="532.7" width="2.8" height="2.8" fill="#1f968b"/><rect x="288.0" y="532.7" width="2.8" height="2.8" fill="#238a8d"/><rect x="290.5" y="532.7" width="2.8" height="2.8" fill="#2a788e"/><rect x="293.0" y="532.7" width="7.8" height="2.8" fill="#2f6c8e"/><rect x="300.5" y="532.7" width="30.3" height="2.8" fill="#355f8d"/><rect x="330.5" y="532.7" width="2.8" height="2.8" fill="#2a788e"/><rect x="333.0" y="532.7" width="2.8" height="2.8" fill="#238a8d"/><rect x="335.5" y="532.7" width="2.8" height="2.8" fill="#1f968b"/><rect x="338.0" y="532.7" width="2.8" height="2.8" fill="#22a884"/><rect x="340.5" y="532.7" width="2.8" height="2.8" fill="#2fb47c"/><rect x="343.0" y="532.7" width="2.8" height="2.8" fill="#25848e"/><rect x="345.5" y="532.7" width="2.8" height="2.8" fill="#3e4a89"/><rect x="348.0" y="532.7" width="22.8" height="2.8" fill="#440154"/><rect x="255.5" y="535.2" width="2.8" height="2.8" fill="#355f8d"/><rect x="258.0" y="535.2" width="2.8" height="2.8" fill="#2f6c8e"/><rect x="260.5" y="535.2" width="2.8" height="2.8" fill="#2c728e"/><rect x="263.0" y="535.2" width="5.3" height="2.8" fill="#277e8e"/><rect x="268.0" y="535.2" width="2.8" height="2.8" fill="#238a8d"/><rect x="270.5" y="535.2" width="2.8" height="2.8" fill="#1f968b"/><rect x="273.0" y="535.2" width="2.8" height="2.8" fill="#1fa287"/><rect x="275.5" y="535.2" width="2.8" height="2.8" fill="#2fb47c"/><rect x="278.0" y="535.2" width="2.8" height="2.8" fill="#38b977"/><rect x="280.5" y="535.2" width="2.8" height="2.8" fill="#28ae80"/><rect x="283.0" y="535.2" width="2.8" height="2.8" fill="#1e9c89"/><rect x="285.5" y="535.2" width="2.8" height="2.8" fill="#21918c"/><rect x="288.0" y="535.2" width="2.8" height="2.8" fill="#25848e"/><rect x="290.5" y="535.2" width="2.8" height="2.8" fill="#2c728e"/><rect x="293.0" y="535.2" width="7.8" height="2.8" fill="#2f6c8e"/><rect x="300.5" y="535.2" width="27.8" height="2.8" fill="#355f8d"/><rect x="328.0" y="535.2" width="2.8" height="2.8" fill="#31668e"/><rect x="330.5" y="535.2" width="2.8" height="2.8" fill="#277e8e"/><rect x="333.0" y="535.2" width="2.8" height="2.8" fill="#21918c"/><rect x="335.5" y="535.2" width="2.8" height="2.8" fill="#1e9c89"/><rect x="338.0" y="535.2" width="2.8" height="2.8" fill="#22a884"/><rect x="340.5" y="535.2" width="2.8" height="2.8" fill="#38b977"/><rect x="343.0" y="535.2" width="2.8" height="2.8" fill="#238a8d"/><rect x="345.5" y="535.2" width="2.8" height="2.8" fill="#3b528b"/><rect x="348.0" y="535.2" width="2.8" height="2.8" fill="#460a5d"/><rect x="350.5" y="535.2" width="17.8" height="2.8" fill="#440154"/><rect x="255.5" y="537.7" width="2.8" height="2.8" fill="#414487"/><rect x="258.0" y="537.7" width="2.8" height="2.8" fill="#3e4a89"/><rect x="260.5" y="537.7" width="2.8" height="2.8" fill="#38598c"/><rect x="263.0" y="537.7" width="2.8" height="2.8" fill="#2f6c8e"/><rect x="265.5" y="537.7" width="2.8" height="2.8" fill="#25848e"/><rect x="268.0" y="537.7" width="2.8" height="2.8" fill="#21918c"/><rect x="270.5" y="537.7" width="2.8" height="2.8" fill="#1fa287"/><rect x="273.0" y="537.7" width="2.8" height="2.8" fill="#28ae80"/><rect x="275.5" y="537.7" width="2.8" height="2.8" fill="#38b977"/><rect x="278.0" y="537.7" width="2.8" height="2.8" fill="#28ae80"/><rect x="280.5" y="537.7" width="2.8" height="2.8" fill="#1fa287"/><rect x="283.0" y="537.7" width="2.8" height="2.8" fill="#1f968b"/><rect x="285.5" y="537.7" width="2.8" height="2.8" fill="#238a8d"/><rect x="288.0" y="537.7" width="2.8" height="2.8" fill="#277e8e"/><rect x="290.5" y="537.7" width="10.3" height="2.8" fill="#2f6c8e"/><rect x="300.5" y="537.7" width="2.8" height="2.8" fill="#31668e"/><rect x="303.0" y="537.7" width="25.3" height="2.8" fill="#355f8d"/><rect x="328.0" y="537.7" width="2.8" height="2.8" fill="#2c728e"/><rect x="330.5" y="537.7" width="2.8" height="2.8" fill="#25848e"/><rect x="333.0" y="537.7" width="2.8" height="2.8" fill="#21918c"/><rect x="335.5" y="537.7" width="2.8" height="2.8" fill="#1fa287"/><rect x="338.0" y="537.7" width="2.8" height="2.8" fill="#28ae80"/><rect x="340.5" y="537.7" width="2.8" height="2.8" fill="#44bf70"/><rect x="343.0" y="537.7" width="2.8" height="2.8" fill="#238a8d"/><rect x="345.5" y="537.7" width="2.8" height="2.8" fill="#3b528b"/><rect x="348.0" y="537.7" width="2.8" height="2.8" fill="#460a5d"/><rect x="350.5" y="537.7" width="17.8" height="2.8" fill="#440154"/><rect x="255.5" y="540.2" width="2.8" height="2.8" fill="#481c6e"/><rect x="258.0" y="540.2" width="2.8" height="2.8" fill="#482475"/><rect x="260.5" y="540.2" width="2.8" height="2.8" fill="#443b84"/><rect x="263.0" y="540.2" width="2.8" height="2.8" fill="#355f8d"/><rect x="265.5" y="540.2" width="2.8" height="2.8" fill="#277e8e"/><rect x="268.0" y="540.2" width="2.8" height="2.8" fill="#1e9c89"/><rect x="270.5" y="540.2" width="2.8" height="2.8" fill="#22a884"/><rect x="273.0" y="540.2" width="5.3" height="2.8" fill="#2fb47c"/><rect x="278.0" y="540.2" width="2.8" height="2.8" fill="#22a884"/><rect x="280.5" y="540.2" width="2.8" height="2.8" fill="#1e9c89"/><rect x="283.0" y="540.2" width="2.8" height="2.8" fill="#21918c"/><rect x="285.5" y="540.2" width="2.8" height="2.8" fill="#277e8e"/><rect x="288.0" y="540.2" width="2.8" height="2.8" fill="#2c728e"/><rect x="290.5" y="540.2" width="12.8" height="2.8" fill="#2f6c8e"/><rect x="303.0" y="540.2" width="10.3" height="2.8" fill="#355f8d"/><rect x="313.0" y="540.2" width="2.8" height="2.8" fill="#38598c"/><rect x="315.5" y="540.2" width="2.8" height="2.8" fill="#3b528b"/><rect x="318.0" y="540.2" width="5.3" height="2.8" fill="#414487"/><rect x="323.0" y="540.2" width="2.8" height="2.8" fill="#355f8d"/><rect x="325.5" y="540.2" width="2.8" height="2.8" fill="#31668e"/><rect x="328.0" y="540.2" width="2.8" height="2.8" fill="#2a788e"/><rect x="330.5" y="540.2" width="2.8" height="2.8" fill="#238a8d"/><rect x="333.0" y="540.2" width="2.8" height="2.8" fill="#1f968b"/><rect x="335.5" y="540.2" width="2.8" height="2.8" fill="#22a884"/><rect x="338.0" y="540.2" width="2.8" height="2.8" fill="#2fb47c"/><rect x="340.5" y="540.2" width="2.8" height="2.8" fill="#38b977"/><rect x="343.0" y="540.2" width="2.8" height="2.8" fill="#21918c"/><rect x="345.5" y="540.2" width="2.8" height="2.8" fill="#38598c"/><rect x="348.0" y="540.2" width="2.8" height="2.8" fill="#471365"/><rect x="350.5" y="540.2" width="15.3" height="2.8" fill="#440154"/><rect x="255.5" y="542.7" width="5.3" height="2.8" fill="#460a5d"/><rect x="260.5" y="542.7" width="2.8" height="2.8" fill="#463480"/><rect x="263.0" y="542.7" width="2.8" height="2.8" fill="#38598c"/><rect x="265.5" y="542.7" width="2.8" height="2.8" fill="#2a788e"/><rect x="268.0" y="542.7" width="2.8" height="2.8" fill="#1f968b"/><rect x="270.5" y="542.7" width="2.8" height="2.8" fill="#2fb47c"/><rect x="273.0" y="542.7" width="2.8" height="2.8" fill="#38b977"/><rect x="275.5" y="542.7" width="2.8" height="2.8" fill="#28ae80"/><rect x="278.0" y="542.7" width="2.8" height="2.8" fill="#1e9c89"/><rect x="280.5" y="542.7" width="2.8" height="2.8" fill="#21918c"/><rect x="283.0" y="542.7" width="2.8" height="2.8" fill="#25848e"/><rect x="285.5" y="542.7" width="2.8" height="2.8" fill="#2a788e"/><rect x="288.0" y="542.7" width="10.3" height="2.8" fill="#2f6c8e"/><rect x="298.0" y="542.7" width="2.8" height="2.8" fill="#355f8d"/><rect x="300.5" y="542.7" width="2.8" height="2.8" fill="#38598c"/><rect x="303.0" y="542.7" width="2.8" height="2.8" fill="#3b528b"/><rect x="305.5" y="542.7" width="2.8" height="2.8" fill="#3e4a89"/><rect x="308.0" y="542.7" width="17.8" height="2.8" fill="#414487"/><rect x="325.5" y="542.7" width="2.8" height="2.8" fill="#31668e"/><rect x="328.0" y="542.7" width="2.8" height="2.8" fill="#277e8e"/><rect x="330.5" y="542.7" width="2.8" height="2.8" fill="#21918c"/><rect x="333.0" y="542.7" width="2.8" height="2.8" fill="#1e9c89"/><rect x="335.5" y="542.7" width="2.8" height="2.8" fill="#28ae80"/><rect x="338.0" y="542.7" width="5.3" height="2.8" fill="#38b977"/><rect x="343.0" y="542.7" width="2.8" height="2.8" fill="#1f968b"/><rect x="345.5" y="542.7" width="2.8" height="2.8" fill="#355f8d"/><rect x="348.0" y="542.7" width="2.8" height="2.8" fill="#481c6e"/><rect x="350.5" y="542.7" width="15.3" height="2.8" fill="#440154"/><rect x="255.5" y="545.2" width="5.3" height="2.8" fill="#460a5d"/><rect x="260.5" y="545.2" width="2.8" height="2.8" fill="#463480"/><rect x="263.0" y="545.2" width="2.8" height="2.8" fill="#38598c"/><rect x="265.5" y="545.2" width="2.8" height="2.8" fill="#2a788e"/><rect x="268.0" y="545.2" width="2.8" height="2.8" fill="#1f968b"/><rect x="270.5" y="545.2" width="5.3" height="2.8" fill="#2fb47c"/><rect x="275.5" y="545.2" width="2.8" height="2.8" fill="#1fa287"/><rect x="278.0" y="545.2" width="2.8" height="2.8" fill="#1f968b"/><rect x="280.5" y="545.2" width="2.8" height="2.8" fill="#238a8d"/><rect x="283.0" y="545.2" width="2.8" height="2.8" fill="#277e8e"/><rect x="285.5" y="545.2" width="2.8" height="2.8" fill="#2f6c8e"/><rect x="288.0" y="545.2" width="2.8" height="2.8" fill="#355f8d"/><rect x="290.5" y="545.2" width="2.8" height="2.8" fill="#3b528b"/><rect x="293.0" y="545.2" width="2.8" height="2.8" fill="#3e4a89"/><rect x="295.5" y="545.2" width="30.3" height="2.8" fill="#414487"/><rect x="325.5" y="545.2" width="2.8" height="2.8" fill="#3b528b"/><rect x="328.0" y="545.2" width="2.8" height="2.8" fill="#2f6c8e"/><rect x="330.5" y="545.2" width="2.8" height="2.8" fill="#238a8d"/><rect x="333.0" y="545.2" width="2.8" height="2.8" fill="#1fa287"/><rect x="335.5" y="545.2" width="2.8" height="2.8" fill="#28ae80"/><rect x="338.0" y="545.2" width="2.8" height="2.8" fill="#44bf70"/><rect x="340.5" y="545.2" width="2.8" height="2.8" fill="#2fb47c"/><rect x="343.0" y="545.2" width="2.8" height="2.8" fill="#1f968b"/><rect x="345.5" y="545.2" width="2.8" height="2.8" fill="#355f8d"/><rect x="348.0" y="545.2" width="2.8" height="2.8" fill="#481c6e"/><rect x="350.5" y="545.2" width="15.3" height="2.8" fill="#440154"/><rect x="255.5" y="547.7" width="5.3" height="2.8" fill="#460a5d"/><rect x="260.5" y="547.7" width="2.8" height="2.8" fill="#472d7b"/><rect x="263.0" y="547.7" width="2.8" height="2.8" fill="#3b528b"/><rect x="265.5" y="547.7" width="2.8" height="2.8" fill="#2c728e"/><rect x="268.0" y="547.7" width="2.8" height="2.8" fill="#21918c"/><rect x="270.5" y="547.7" width="5.3" height="2.8" fill="#28ae80"/><rect x="275.5" y="547.7" width="2.8" height="2.8" fill="#1e9c89"/><rect x="278.0" y="547.7" width="2.8" height="2.8" fill="#21918c"/><rect x="280.5" y="547.7" width="2.8" height="2.8" fill="#277e8e"/><rect x="283.0" y="547.7" width="2.8" height="2.8" fill="#2c728e"/><rect x="285.5" y="547.7" width="2.8" height="2.8" fill="#2f6c8e"/><rect x="288.0" y="547.7" width="40.3" height="2.8" fill="#414487"/><rect x="328.0" y="547.7" width="2.8" height="2.8" fill="#38598c"/><rect x="330.5" y="547.7" width="2.8" height="2.8" fill="#2a788e"/><rect x="333.0" y="547.7" width="2.8" height="2.8" fill="#1f968b"/><rect x="335.5" y="547.7" width="2.8" height="2.8" fill="#2fb47c"/><rect x="338.0" y="547.7" width="2.8" height="2.8" fill="#38b977"/><rect x="340.5" y="547.7" width="2.8" height="2.8" fill="#28ae80"/><rect x="343.0" y="547.7" width="2.8" height="2.8" fill="#1e9c89"/><rect x="345.5" y="547.7" width="2.8" height="2.8" fill="#31668e"/><rect x="348.0" y="547.7" width="2.8" height="2.8" fill="#482475"/><rect x="350.5" y="547.7" width="12.8" height="2.8" fill="#440154"/><rect x="255.5" y="550.2" width="5.3" height="2.8" fill="#460a5d"/><rect x="260.5" y="550.2" width="2.8" height="2.8" fill="#472d7b"/><rect x="263.0" y="550.2" width="2.8" height="2.8" fill="#3b528b"/><rect x="265.5" y="550.2" width="2.8" height="2.8" fill="#2c728e"/><rect x="268.0" y="550.2" width="2.8" height="2.8" fill="#21918c"/><rect x="270.5" y="550.2" width="2.8" height="2.8" fill="#28ae80"/><rect x="273.0" y="550.2" width="2.8" height="2.8" fill="#22a884"/><rect x="275.5" y="550.2" width="2.8" height="2.8" fill="#1e9c89"/><rect x="278.0" y="550.2" width="2.8" height="2.8" fill="#238a8d"/><rect x="280.5" y="550.2" width="2.8" height="2.8" fill="#277e8e"/><rect x="283.0" y="550.2" width="5.3" height="2.8" fill="#2f6c8e"/><rect x="288.0" y="550.2" width="2.8" height="2.8" fill="#3b528b"/><rect x="290.5" y="550.2" width="40.3" height="2.8" fill="#414487"/><rect x="330.5" y="550.2" width="2.8" height="2.8" fill="#355f8d"/><rect x="333.0" y="550.2" width="2.8" height="2.8" fill="#25848e"/><rect x="335.5" y="550.2" width="2.8" height="2.8" fill="#22a884"/><rect x="338.0" y="550.2" width="2.8" height="2.8" fill="#2fb47c"/><rect x="340.5" y="550.2" width="2.8" height="2.8" fill="#22a884"/><rect x="343.0" y="550.2" width="2.8" height="2.8" fill="#1e9c89"/><rect x="345.5" y="550.2" width="2.8" height="2.8" fill="#31668e"/><rect x="348.0" y="550.2" width="2.8" height="2.8" fill="#482475"/><rect x="350.5" y="550.2" width="12.8" height="2.8" fill="#440154"/><rect x="255.5" y="552.7" width="5.3" height="2.8" fill="#460a5d"/><rect x="260.5" y="552.7" width="2.8" height="2.8" fill="#472d7b"/><rect x="263.0" y="552.7" width="2.8" height="2.8" fill="#3b528b"/><rect x="265.5" y="552.7" width="2.8" height="2.8" fill="#2c728e"/><rect x="268.0" y="552.7" width="2.8" height="2.8" fill="#21918c"/><rect x="270.5" y="552.7" width="2.8" height="2.8" fill="#28ae80"/><rect x="273.0" y="552.7" width="2.8" height="2.8" fill="#1fa287"/><rect x="275.5" y="552.7" width="2.8" height="2.8" fill="#1f968b"/><rect x="278.0" y="552.7" width="2.8" height="2.8" fill="#25848e"/><rect x="280.5" y="552.7" width="2.8" height="2.8" fill="#2a788e"/><rect x="283.0" y="552.7" width="5.3" height="2.8" fill="#2f6c8e"/><rect x="288.0" y="552.7" width="2.8" height="2.8" fill="#355f8d"/><rect x="290.5" y="552.7" width="37.8" height="2.8" fill="#414487"/><rect x="328.0" y="552.7" width="2.8" height="2.8" fill="#3b528b"/><rect x="330.5" y="552.7" width="2.8" height="2.8" fill="#2f6c8e"/><rect x="333.0" y="552.7" width="2.8" height="2.8" fill="#238a8d"/><rect x="335.5" y="552.7" width="2.8" height="2.8" fill="#28ae80"/><rect x="338.0" y="552.7" width="2.8" height="2.8" fill="#2fb47c"/><rect x="340.5" y="552.7" width="2.8" height="2.8" fill="#1fa287"/><rect x="343.0" y="552.7" width="2.8" height="2.8" fill="#1f968b"/><rect x="345.5" y="552.7" width="2.8" height="2.8" fill="#2f6c8e"/><rect x="348.0" y="552.7" width="2.8" height="2.8" fill="#472d7b"/><rect x="350.5" y="552.7" width="10.3" height="2.8" fill="#440154"/><rect x="255.5" y="555.2" width="5.3" height="2.8" fill="#460a5d"/><rect x="260.5" y="555.2" width="2.8" height="2.8" fill="#482475"/><rect x="263.0" y="555.2" width="2.8" height="2.8" fill="#3e4a89"/><rect x="265.5" y="555.2" width="2.8" height="2.8" fill="#2f6c8e"/><rect x="268.0" y="555.2" width="2.8" height="2.8" fill="#238a8d"/><rect x="270.5" y="555.2" width="2.8" height="2.8" fill="#22a884"/><rect x="273.0" y="555.2" width="2.8" height="2.8" fill="#1fa287"/><rect x="275.5" y="555.2" width="2.8" height="2.8" fill="#21918c"/><rect x="278.0" y="555.2" width="2.8" height="2.8" fill="#25848e"/><rect x="280.5" y="555.2" width="2.8" height="2.8" fill="#2c728e"/><rect x="283.0" y="555.2" width="7.8" height="2.8" fill="#2f6c8e"/><rect x="290.5" y="555.2" width="10.3" height="2.8" fill="#414487"/><rect x="300.5" y="555.2" width="2.8" height="2.8" fill="#443b84"/><rect x="303.0" y="555.2" width="5.3" height="2.8" fill="#472d7b"/><rect x="308.0" y="555.2" width="2.8" height="2.8" fill="#463480"/><rect x="310.5" y="555.2" width="15.3" height="2.8" fill="#414487"/><rect x="325.5" y="555.2" width="2.8" height="2.8" fill="#38598c"/><rect x="328.0" y="555.2" width="2.8" height="2.8" fill="#2c728e"/><rect x="330.5" y="555.2" width="2.8" height="2.8" fill="#238a8d"/><rect x="333.0" y="555.2" width="2.8" height="2.8" fill="#1fa287"/><rect x="335.5" y="555.2" width="2.8" height="2.8" fill="#38b977"/><rect x="338.0" y="555.2" width="2.8" height="2.8" fill="#28ae80"/><rect x="340.5" y="555.2" width="2.8" height="2.8" fill="#1e9c89"/><rect x="343.0" y="555.2" width="2.8" height="2.8" fill="#21918c"/><rect x="345.5" y="555.2" width="2.8" height="2.8" fill="#2c728e"/><rect x="348.0" y="555.2" width="2.8" height="2.8" fill="#463480"/><rect x="350.5" y="555.2" width="10.3" height="2.8" fill="#440154"/><rect x="255.5" y="557.7" width="2.8" height="2.8" fill="#482475"/><rect x="258.0" y="557.7" width="2.8" height="2.8" fill="#463480"/><rect x="260.5" y="557.7" width="2.8" height="2.8" fill="#414487"/><rect x="263.0" y="557.7" width="2.8" height="2.8" fill="#38598c"/><rect x="265.5" y="557.7" width="2.8" height="2.8" fill="#2a788e"/><rect x="268.0" y="557.7" width="2.8" height="2.8" fill="#21918c"/><rect x="270.5" y="557.7" width="2.8" height="2.8" fill="#22a884"/><rect x="273.0" y="557.7" width="2.8" height="2.8" fill="#1e9c89"/><rect x="275.5" y="557.7" width="2.8" height="2.8" fill="#238a8d"/><rect x="278.0" y="557.7" width="2.8" height="2.8" fill="#277e8e"/><rect x="280.5" y="557.7" width="10.3" height="2.8" fill="#2f6c8e"/><rect x="290.5" y="557.7" width="2.8" height="2.8" fill="#3b528b"/><rect x="293.0" y="557.7" width="5.3" height="2.8" fill="#414487"/><rect x="298.0" y="557.7" width="2.8" height="2.8" fill="#463480"/><rect x="300.5" y="557.7" width="10.3" height="2.8" fill="#482475"/><rect x="310.5" y="557.7" width="2.8" height="2.8" fill="#472d7b"/><rect x="313.0" y="557.7" width="2.8" height="2.8" fill="#443b84"/><rect x="315.5" y="557.7" width="7.8" height="2.8" fill="#414487"/><rect x="323.0" y="557.7" width="2.8" height="2.8" fill="#38598c"/><rect x="325.5" y="557.7" width="2.8" height="2.8" fill="#2c728e"/><rect x="328.0" y="557.7" width="2.8" height="2.8" fill="#238a8d"/><rect x="330.5" y="557.7" width="2.8" height="2.8" fill="#1fa287"/><rect x="333.0" y="557.7" width="2.8" height="2.8" fill="#38b977"/><rect x="335.5" y="557.7" width="2.8" height="2.8" fill="#2fb47c"/><rect x="338.0" y="557.7" width="2.8" height="2.8" fill="#22a884"/><rect x="340.5" y="557.7" width="2.8" height="2.8" fill="#1e9c89"/><rect x="343.0" y="557.7" width="2.8" height="2.8" fill="#238a8d"/><rect x="345.5" y="557.7" width="2.8" height="2.8" fill="#2c728e"/><rect x="348.0" y="557.7" width="2.8" height="2.8" fill="#463480"/><rect x="350.5" y="557.7" width="7.8" height="2.8" fill="#440154"/><rect x="358.0" y="557.7" width="2.8" height="2.8" fill="#471365"/><rect x="255.5" y="560.2" width="2.8" height="2.8" fill="#3e4a89"/><rect x="258.0" y="560.2" width="2.8" height="2.8" fill="#3b528b"/><rect x="260.5" y="560.2" width="2.8" height="2.8" fill="#355f8d"/><rect x="263.0" y="560.2" width="2.8" height="2.8" fill="#2c728e"/><rect x="265.5" y="560.2" width="2.8" height="2.8" fill="#25848e"/><rect x="268.0" y="560.2" width="2.8" height="2.8" fill="#1e9c89"/><rect x="270.5" y="560.2" width="2.8" height="2.8" fill="#22a884"/><rect x="273.0" y="560.2" width="2.8" height="2.8" fill="#1f968b"/><rect x="275.5" y="560.2" width="2.8" height="2.8" fill="#238a8d"/><rect x="278.0" y="560.2" width="2.8" height="2.8" fill="#2a788e"/><rect x="280.5" y="560.2" width="10.3" height="2.8" fill="#2f6c8e"/><rect x="290.5" y="560.2" width="2.8" height="2.8" fill="#355f8d"/><rect x="293.0" y="560.2" width="5.3" height="2.8" fill="#414487"/><rect x="298.0" y="560.2" width="2.8" height="2.8" fill="#463480"/><rect x="300.5" y="560.2" width="10.3" height="2.8" fill="#482475"/><rect x="310.5" y="560.2" width="2.8" height="2.8" fill="#472d7b"/><rect x="313.0" y="560.2" width="7.8" height="2.8" fill="#414487"/><rect x="320.5" y="560.2" width="2.8" height="2.8" fill="#355f8d"/><rect x="323.0" y="560.2" width="2.8" height="2.8" fill="#2a788e"/><rect x="325.5" y="560.2" width="2.8" height="2.8" fill="#21918c"/><rect x="328.0" y="560.2" width="2.8" height="2.8" fill="#1fa287"/><rect x="330.5" y="560.2" width="2.8" height="2.8" fill="#28ae80"/><rect x="333.0" y="560.2" width="2.8" height="2.8" fill="#44bf70"/><rect x="335.5" y="560.2" width="2.8" height="2.8" fill="#2fb47c"/><rect x="338.0" y="560.2" width="2.8" height="2.8" fill="#1fa287"/><rect x="340.5" y="560.2" width="2.8" height="2.8" fill="#1f968b"/><rect x="343.0" y="560.2" width="2.8" height="2.8" fill="#25848e"/><rect x="345.5" y="560.2" width="2.8" height="2.8" fill="#2a788e"/><rect x="348.0" y="560.2" width="2.8" height="2.8" fill="#443b84"/><rect x="350.5" y="560.2" width="7.8" height="2.8" fill="#440154"/><rect x="255.5" y="562.7" width="2.8" height="2.8" fill="#31668e"/><rect x="258.0" y="562.7" width="2.8" height="2.8" fill="#2c728e"/><rect x="260.5" y="562.7" width="2.8" height="2.8" fill="#277e8e"/><rect x="263.0" y="562.7" width="2.8" height="2.8" fill="#238a8d"/><rect x="265.5" y="562.7" width="2.8" height="2.8" fill="#1e9c89"/><rect x="268.0" y="562.7" width="2.8" height="2.8" fill="#28ae80"/><rect x="270.5" y="562.7" width="2.8" height="2.8" fill="#1fa287"/><rect x="273.0" y="562.7" width="2.8" height="2.8" fill="#21918c"/><rect x="275.5" y="562.7" width="2.8" height="2.8" fill="#25848e"/><rect x="278.0" y="562.7" width="2.8" height="2.8" fill="#2c728e"/><rect x="280.5" y="562.7" width="12.8" height="2.8" fill="#2f6c8e"/><rect x="293.0" y="562.7" width="2.8" height="2.8" fill="#3b528b"/><rect x="295.5" y="562.7" width="2.8" height="2.8" fill="#3e4a89"/><rect x="298.0" y="562.7" width="2.8" height="2.8" fill="#414487"/><rect x="300.5" y="562.7" width="2.8" height="2.8" fill="#443b84"/><rect x="303.0" y="562.7" width="5.3" height="2.8" fill="#463480"/><rect x="308.0" y="562.7" width="2.8" height="2.8" fill="#443b84"/><rect x="310.5" y="562.7" width="5.3" height="2.8" fill="#414487"/><rect x="315.5" y="562.7" width="2.8" height="2.8" fill="#3e4a89"/><rect x="318.0" y="562.7" width="2.8" height="2.8" fill="#31668e"/><rect x="320.5" y="562.7" width="2.8" height="2.8" fill="#2a788e"/><rect x="323.0" y="562.7" width="2.8" height="2.8" fill="#238a8d"/><rect x="325.5" y="562.7" width="2.8" height="2.8" fill="#1f968b"/><rect x="328.0" y="562.7" width="2.8" height="2.8" fill="#22a884"/><rect x="330.5" y="562.7" width="2.8" height="2.8" fill="#2fb47c"/><rect x="333.0" y="562.7" width="2.8" height="2.8" fill="#38b977"/><rect x="335.5" y="562.7" width="2.8" height="2.8" fill="#28ae80"/><rect x="338.0" y="562.7" width="2.8" height="2.8" fill="#1e9c89"/><rect x="340.5" y="562.7" width="2.8" height="2.8" fill="#21918c"/><rect x="343.0" y="562.7" width="2.8" height="2.8" fill="#277e8e"/><rect x="345.5" y="562.7" width="2.8" height="2.8" fill="#2c728e"/><rect x="348.0" y="562.7" width="2.8" height="2.8" fill="#3e4a89"/><rect x="350.5" y="562.7" width="5.3" height="2.8" fill="#440154"/><rect x="355.5" y="562.7" width="2.8" height="2.8" fill="#460a5d"/><rect x="255.5" y="565.2" width="2.8" height="2.8" fill="#277e8e"/><rect x="258.0" y="565.2" width="2.8" height="2.8" fill="#21918c"/><rect x="260.5" y="565.2" width="2.8" height="2.8" fill="#1e9c89"/><rect x="263.0" y="565.2" width="2.8" height="2.8" fill="#1fa287"/><rect x="265.5" y="565.2" width="2.8" height="2.8" fill="#2fb47c"/><rect x="268.0" y="565.2" width="2.8" height="2.8" fill="#28ae80"/><rect x="270.5" y="565.2" width="2.8" height="2.8" fill="#1e9c89"/><rect x="273.0" y="565.2" width="2.8" height="2.8" fill="#21918c"/><rect x="275.5" y="565.2" width="2.8" height="2.8" fill="#277e8e"/><rect x="278.0" y="565.2" width="2.8" height="2.8" fill="#2c728e"/><rect x="280.5" y="565.2" width="12.8" height="2.8" fill="#2f6c8e"/><rect x="293.0" y="565.2" width="2.8" height="2.8" fill="#2c728e"/><rect x="295.5" y="565.2" width="2.8" height="2.8" fill="#2f6c8e"/><rect x="298.0" y="565.2" width="2.8" height="2.8" fill="#355f8d"/><rect x="300.5" y="565.2" width="5.3" height="2.8" fill="#3e4a89"/><rect x="305.5" y="565.2" width="5.3" height="2.8" fill="#38598c"/><rect x="310.5" y="565.2" width="2.8" height="2.8" fill="#3b528b"/><rect x="313.0" y="565.2" width="2.8" height="2.8" fill="#3e4a89"/><rect x="315.5" y="565.2" width="2.8" height="2.8" fill="#31668e"/><rect x="318.0" y="565.2" width="2.8" height="2.8" fill="#277e8e"/><rect x="320.5" y="565.2" width="2.8" height="2.8" fill="#238a8d"/><rect x="323.0" y="565.2" width="2.8" height="2.8" fill="#21918c"/><rect x="325.5" y="565.2" width="2.8" height="2.8" fill="#1e9c89"/><rect x="328.0" y="565.2" width="2.8" height="2.8" fill="#28ae80"/><rect x="330.5" y="565.2" width="2.8" height="2.8" fill="#38b977"/><rect x="333.0" y="565.2" width="2.8" height="2.8" fill="#2fb47c"/><rect x="335.5" y="565.2" width="2.8" height="2.8" fill="#22a884"/><rect x="338.0" y="565.2" width="2.8" height="2.8" fill="#1f968b"/><rect x="340.5" y="565.2" width="2.8" height="2.8" fill="#238a8d"/><rect x="343.0" y="565.2" width="2.8" height="2.8" fill="#277e8e"/><rect x="345.5" y="565.2" width="2.8" height="2.8" fill="#2f6c8e"/><rect x="348.0" y="565.2" width="2.8" height="2.8" fill="#3b528b"/><rect x="350.5" y="565.2" width="2.8" height="2.8" fill="#471365"/><rect x="353.0" y="565.2" width="2.8" height="2.8" fill="#440154"/><rect x="255.5" y="567.7" width="2.8" height="2.8" fill="#25848e"/><rect x="258.0" y="567.7" width="2.8" height="2.8" fill="#21918c"/><rect x="260.5" y="567.7" width="2.8" height="2.8" fill="#1fa287"/><rect x="263.0" y="567.7" width="2.8" height="2.8" fill="#28ae80"/><rect x="265.5" y="567.7" width="2.8" height="2.8" fill="#38b977"/><rect x="268.0" y="567.7" width="2.8" height="2.8" fill="#22a884"/><rect x="270.5" y="567.7" width="2.8" height="2.8" fill="#1e9c89"/><rect x="273.0" y="567.7" width="2.8" height="2.8" fill="#238a8d"/><rect x="275.5" y="567.7" width="2.8" height="2.8" fill="#277e8e"/><rect x="278.0" y="567.7" width="12.8" height="2.8" fill="#2f6c8e"/><rect x="290.5" y="567.7" width="2.8" height="2.8" fill="#2c728e"/><rect x="293.0" y="567.7" width="2.8" height="2.8" fill="#2a788e"/><rect x="295.5" y="567.7" width="2.8" height="2.8" fill="#355f8d"/><rect x="298.0" y="567.7" width="5.3" height="2.8" fill="#3e4a89"/><rect x="303.0" y="567.7" width="2.8" height="2.8" fill="#355f8d"/><rect x="305.5" y="567.7" width="2.8" height="2.8" fill="#2c728e"/><rect x="308.0" y="567.7" width="5.3" height="2.8" fill="#2a788e"/><rect x="313.0" y="567.7" width="2.8" height="2.8" fill="#2c728e"/><rect x="315.5" y="567.7" width="2.8" height="2.8" fill="#25848e"/><rect x="318.0" y="567.7" width="2.8" height="2.8" fill="#1f968b"/><rect x="320.5" y="567.7" width="7.8" height="2.8" fill="#1fa287"/><rect x="328.0" y="567.7" width="2.8" height="2.8" fill="#2fb47c"/><rect x="330.5" y="567.7" width="2.8" height="2.8" fill="#44bf70"/><rect x="333.0" y="567.7" width="2.8" height="2.8" fill="#2fb47c"/><rect x="335.5" y="567.7" width="2.8" height="2.8" fill="#1fa287"/><rect x="338.0" y="567.7" width="2.8" height="2.8" fill="#1f968b"/><rect x="340.5" y="567.7" width="2.8" height="2.8" fill="#25848e"/><rect x="343.0" y="567.7" width="2.8" height="2.8" fill="#2a788e"/><rect x="345.5" y="567.7" width="2.8" height="2.8" fill="#2f6c8e"/><rect x="348.0" y="567.7" width="2.8" height="2.8" fill="#355f8d"/><rect x="350.5" y="567.7" width="2.8" height="2.8" fill="#481c6e"/><rect x="353.0" y="567.7" width="2.8" height="2.8" fill="#440154"/><rect x="255.5" y="570.2" width="2.8" height="2.8" fill="#238a8d"/><rect x="258.0" y="570.2" width="2.8" height="2.8" fill="#1f968b"/><rect x="260.5" y="570.2" width="2.8" height="2.8" fill="#22a884"/><rect x="263.0" y="570.2" width="5.3" height="2.8" fill="#2fb47c"/><rect x="268.0" y="570.2" width="2.8" height="2.8" fill="#1fa287"/><rect x="270.5" y="570.2" width="2.8" height="2.8" fill="#1f968b"/><rect x="273.0" y="570.2" width="2.8" height="2.8" fill="#25848e"/><rect x="275.5" y="570.2" width="2.8" height="2.8" fill="#2a788e"/><rect x="278.0" y="570.2" width="10.3" height="2.8" fill="#2f6c8e"/><rect x="288.0" y="570.2" width="5.3" height="2.8" fill="#2a788e"/><rect x="293.0" y="570.2" width="2.8" height="2.8" fill="#31668e"/><rect x="295.5" y="570.2" width="5.3" height="2.8" fill="#3e4a89"/><rect x="300.5" y="570.2" width="2.8" height="2.8" fill="#38598c"/><rect x="303.0" y="570.2" width="2.8" height="2.8" fill="#2c728e"/><rect x="305.5" y="570.2" width="2.8" height="2.8" fill="#25848e"/><rect x="308.0" y="570.2" width="2.8" height="2.8" fill="#1f968b"/><rect x="310.5" y="570.2" width="2.8" height="2.8" fill="#1e9c89"/><rect x="313.0" y="570.2" width="2.8" height="2.8" fill="#1f968b"/><rect x="315.5" y="570.2" width="2.8" height="2.8" fill="#1fa287"/><rect x="318.0" y="570.2" width="2.8" height="2.8" fill="#28ae80"/><rect x="320.5" y="570.2" width="7.8" height="2.8" fill="#38b977"/><rect x="328.0" y="570.2" width="2.8" height="2.8" fill="#2fb47c"/><rect x="330.5" y="570.2" width="2.8" height="2.8" fill="#38b977"/><rect x="333.0" y="570.2" width="2.8" height="2.8" fill="#28ae80"/><rect x="335.5" y="570.2" width="2.8" height="2.8" fill="#1e9c89"/><rect x="338.0" y="570.2" width="2.8" height="2.8" fill="#21918c"/><rect x="340.5" y="570.2" width="2.8" height="2.8" fill="#277e8e"/><rect x="343.0" y="570.2" width="2.8" height="2.8" fill="#2c728e"/><rect x="345.5" y="570.2" width="2.8" height="2.8" fill="#2f6c8e"/><rect x="348.0" y="570.2" width="2.8" height="2.8" fill="#31668e"/><rect x="350.5" y="570.2" width="2.8" height="2.8" fill="#472d7b"/><rect x="353.0" y="570.2" width="2.8" height="2.8" fill="#482475"/><rect x="255.5" y="572.7" width="2.8" height="2.8" fill="#238a8d"/><rect x="258.0" y="572.7" width="2.8" height="2.8" fill="#1e9c89"/><rect x="260.5" y="572.7" width="2.8" height="2.8" fill="#22a884"/><rect x="263.0" y="572.7" width="2.8" height="2.8" fill="#38b977"/><rect x="265.5" y="572.7" width="2.8" height="2.8" fill="#28ae80"/><rect x="268.0" y="572.7" width="2.8" height="2.8" fill="#1fa287"/><rect x="270.5" y="572.7" width="2.8" height="2.8" fill="#21918c"/><rect x="273.0" y="572.7" width="2.8" height="2.8" fill="#25848e"/><rect x="275.5" y="572.7" width="2.8" height="2.8" fill="#2c728e"/><rect x="278.0" y="572.7" width="7.8" height="2.8" fill="#2f6c8e"/><rect x="285.5" y="572.7" width="2.8" height="2.8" fill="#2c728e"/><rect x="288.0" y="572.7" width="2.8" height="2.8" fill="#2a788e"/><rect x="290.5" y="572.7" width="2.8" height="2.8" fill="#31668e"/><rect x="293.0" y="572.7" width="2.8" height="2.8" fill="#3b528b"/><rect x="295.5" y="572.7" width="2.8" height="2.8" fill="#3e4a89"/><rect x="298.0" y="572.7" width="2.8" height="2.8" fill="#38598c"/><rect x="300.5" y="572.7" width="2.8" height="2.8" fill="#2f6c8e"/><rect x="303.0" y="572.7" width="2.8" height="2.8" fill="#25848e"/><rect x="305.5" y="572.7" width="2.8" height="2.8" fill="#1f968b"/><rect x="308.0" y="572.7" width="2.8" height="2.8" fill="#28ae80"/><rect x="310.5" y="572.7" width="5.3" height="2.8" fill="#38b977"/><rect x="315.5" y="572.7" width="2.8" height="2.8" fill="#44bf70"/><rect x="318.0" y="572.7" width="2.8" height="2.8" fill="#5ec962"/><rect x="320.5" y="572.7" width="7.8" height="2.8" fill="#6ccd5a"/><rect x="328.0" y="572.7" width="2.8" height="2.8" fill="#50c46a"/><rect x="330.5" y="572.7" width="2.8" height="2.8" fill="#2fb47c"/><rect x="333.0" y="572.7" width="2.8" height="2.8" fill="#22a884"/><rect x="335.5" y="572.7" width="2.8" height="2.8" fill="#1f968b"/><rect x="338.0" y="572.7" width="2.8" height="2.8" fill="#238a8d"/><rect x="340.5" y="572.7" width="2.8" height="2.8" fill="#2a788e"/><rect x="343.0" y="572.7" width="7.8" height="2.8" fill="#2f6c8e"/><rect x="350.5" y="572.7" width="2.8" height="2.8" fill="#3e4a89"/><rect x="255.5" y="575.2" width="2.8" height="2.8" fill="#21918c"/><rect x="258.0" y="575.2" width="2.8" height="2.8" fill="#1fa287"/><rect x="260.5" y="575.2" width="2.8" height="2.8" fill="#28ae80"/><rect x="263.0" y="575.2" width="2.8" height="2.8" fill="#38b977"/><rect x="265.5" y="575.2" width="2.8" height="2.8" fill="#22a884"/><rect x="268.0" y="575.2" width="2.8" height="2.8" fill="#1e9c89"/><rect x="270.5" y="575.2" width="2.8" height="2.8" fill="#238a8d"/><rect x="273.0" y="575.2" width="2.8" height="2.8" fill="#277e8e"/><rect x="275.5" y="575.2" width="10.3" height="2.8" fill="#2f6c8e"/><rect x="285.5" y="575.2" width="2.8" height="2.8" fill="#277e8e"/><rect x="288.0" y="575.2" width="2.8" height="2.8" fill="#31668e"/><rect x="290.5" y="575.2" width="2.8" height="2.8" fill="#3b528b"/><rect x="293.0" y="575.2" width="2.8" height="2.8" fill="#3e4a89"/><rect x="295.5" y="575.2" width="2.8" height="2.8" fill="#38598c"/><rect x="298.0" y="575.2" width="2.8" height="2.8" fill="#2f6c8e"/><rect x="300.5" y="575.2" width="2.8" height="2.8" fill="#277e8e"/><rect x="303.0" y="575.2" width="2.8" height="2.8" fill="#1f968b"/><rect x="305.5" y="575.2" width="2.8" height="2.8" fill="#22a884"/><rect x="308.0" y="575.2" width="2.8" height="2.8" fill="#44bf70"/><rect x="310.5" y="575.2" width="2.8" height="2.8" fill="#6ccd5a"/><rect x="313.0" y="575.2" width="2.8" height="2.8" fill="#7ad151"/><rect x="315.5" y="575.2" width="2.8" height="2.8" fill="#8bd646"/><rect x="318.0" y="575.2" width="2.8" height="2.8" fill="#9bd93c"/><rect x="320.5" y="575.2" width="5.3" height="2.8" fill="#addc30"/><rect x="325.5" y="575.2" width="2.8" height="2.8" fill="#9bd93c"/><rect x="328.0" y="575.2" width="2.8" height="2.8" fill="#7ad151"/><rect x="330.5" y="575.2" width="2.8" height="2.8" fill="#50c46a"/><rect x="333.0" y="575.2" width="2.8" height="2.8" fill="#2fb47c"/><rect x="335.5" y="575.2" width="2.8" height="2.8" fill="#1fa287"/><rect x="338.0" y="575.2" width="2.8" height="2.8" fill="#21918c"/><rect x="340.5" y="575.2" width="2.8" height="2.8" fill="#25848e"/><rect x="343.0" y="575.2" width="2.8" height="2.8" fill="#2c728e"/><rect x="345.5" y="575.2" width="7.8" height="2.8" fill="#2f6c8e"/><rect x="255.5" y="577.7" width="2.8" height="2.8" fill="#1f968b"/><rect x="258.0" y="577.7" width="2.8" height="2.8" fill="#1fa287"/><rect x="260.5" y="577.7" width="5.3" height="2.8" fill="#2fb47c"/><rect x="265.5" y="577.7" width="2.8" height="2.8" fill="#22a884"/><rect x="268.0" y="577.7" width="2.8" height="2.8" fill="#1f968b"/><rect x="270.5" y="577.7" width="2.8" height="2.8" fill="#238a8d"/><rect x="273.0" y="577.7" width="2.8" height="2.8" fill="#2a788e"/><rect x="275.5" y="577.7" width="7.8" height="2.8" fill="#2f6c8e"/><rect x="283.0" y="577.7" width="2.8" height="2.8" fill="#2c728e"/><rect x="285.5" y="577.7" width="2.8" height="2.8" fill="#2f6c8e"/><rect x="288.0" y="577.7" width="2.8" height="2.8" fill="#3b528b"/><rect x="290.5" y="577.7" width="2.8" height="2.8" fill="#3e4a89"/><rect x="293.0" y="577.7" width="2.8" height="2.8" fill="#3b528b"/><rect x="295.5" y="577.7" width="2.8" height="2.8" fill="#2f6c8e"/><rect x="298.0" y="577.7" width="2.8" height="2.8" fill="#277e8e"/><rect x="300.5" y="577.7" width="2.8" height="2.8" fill="#21918c"/><rect x="303.0" y="577.7" width="2.8" height="2.8" fill="#22a884"/><rect x="305.5" y="577.7" width="2.8" height="2.8" fill="#38b977"/><rect x="308.0" y="577.7" width="2.8" height="2.8" fill="#6ccd5a"/><rect x="310.5" y="577.7" width="2.8" height="2.8" fill="#9bd93c"/><rect x="313.0" y="577.7" width="2.8" height="2.8" fill="#cde11d"/><rect x="315.5" y="577.7" width="2.8" height="2.8" fill="#dfe318"/><rect x="318.0" y="577.7" width="2.8" height="2.8" fill="#efe51c"/><rect x="320.5" y="577.7" width="7.8" height="2.8" fill="#fde725"/><rect x="328.0" y="577.7" width="2.8" height="2.8" fill="#9bd93c"/><rect x="330.5" y="577.7" width="2.8" height="2.8" fill="#7ad151"/><rect x="333.0" y="577.7" width="2.8" height="2.8" fill="#50c46a"/><rect x="335.5" y="577.7" width="2.8" height="2.8" fill="#2fb47c"/><rect x="338.0" y="577.7" width="2.8" height="2.8" fill="#1fa287"/><rect x="340.5" y="577.7" width="2.8" height="2.8" fill="#21918c"/><rect x="343.0" y="577.7" width="2.8" height="2.8" fill="#25848e"/><rect x="345.5" y="577.7" width="2.8" height="2.8" fill="#2c728e"/><rect x="348.0" y="577.7" width="2.8" height="2.8" fill="#2f6c8e"/><rect x="255.5" y="580.2" width="2.8" height="2.8" fill="#1f968b"/><rect x="258.0" y="580.2" width="2.8" height="2.8" fill="#22a884"/><rect x="260.5" y="580.2" width="2.8" height="2.8" fill="#2fb47c"/><rect x="263.0" y="580.2" width="2.8" height="2.8" fill="#28ae80"/><rect x="265.5" y="580.2" width="2.8" height="2.8" fill="#1fa287"/><rect x="268.0" y="580.2" width="2.8" height="2.8" fill="#21918c"/><rect x="270.5" y="580.2" width="2.8" height="2.8" fill="#25848e"/><rect x="273.0" y="580.2" width="2.8" height="2.8" fill="#2c728e"/><rect x="275.5" y="580.2" width="10.3" height="2.8" fill="#2f6c8e"/><rect x="285.5" y="580.2" width="2.8" height="2.8" fill="#38598c"/><rect x="288.0" y="580.2" width="2.8" height="2.8" fill="#3e4a89"/><rect x="290.5" y="580.2" width="2.8" height="2.8" fill="#3b528b"/><rect x="293.0" y="580.2" width="2.8" height="2.8" fill="#31668e"/><rect x="295.5" y="580.2" width="2.8" height="2.8" fill="#277e8e"/><rect x="298.0" y="580.2" width="2.8" height="2.8" fill="#21918c"/><rect x="300.5" y="580.2" width="2.8" height="2.8" fill="#1fa287"/><rect x="303.0" y="580.2" width="2.8" height="2.8" fill="#38b977"/><rect x="305.5" y="580.2" width="2.8" height="2.8" fill="#5ec962"/><rect x="308.0" y="580.2" width="2.8" height="2.8" fill="#9bd93c"/><rect x="310.5" y="580.2" width="2.8" height="2.8" fill="#cde11d"/><rect x="313.0" y="580.2" width="17.8" height="2.8" fill="#fde725"/><rect x="330.5" y="580.2" width="2.8" height="2.8" fill="#9bd93c"/><rect x="333.0" y="580.2" width="2.8" height="2.8" fill="#7ad151"/><rect x="335.5" y="580.2" width="2.8" height="2.8" fill="#50c46a"/><rect x="338.0" y="580.2" width="2.8" height="2.8" fill="#2fb47c"/><rect x="340.5" y="580.2" width="2.8" height="2.8" fill="#1fa287"/><rect x="343.0" y="580.2" width="2.8" height="2.8" fill="#21918c"/><rect x="345.5" y="580.2" width="2.8" height="2.8" fill="#277e8e"/><rect x="348.0" y="580.2" width="2.8" height="2.8" fill="#2f6c8e"/><rect x="255.5" y="582.7" width="2.8" height="2.8" fill="#1e9c89"/><rect x="258.0" y="582.7" width="2.8" height="2.8" fill="#28ae80"/><rect x="260.5" y="582.7" width="2.8" height="2.8" fill="#38b977"/><rect x="263.0" y="582.7" width="2.8" height="2.8" fill="#28ae80"/><rect x="265.5" y="582.7" width="2.8" height="2.8" fill="#1e9c89"/><rect x="268.0" y="582.7" width="2.8" height="2.8" fill="#21918c"/><rect x="270.5" y="582.7" width="2.8" height="2.8" fill="#277e8e"/><rect x="273.0" y="582.7" width="2.8" height="2.8" fill="#2c728e"/><rect x="275.5" y="582.7" width="7.8" height="2.8" fill="#2f6c8e"/><rect x="283.0" y="582.7" width="2.8" height="2.8" fill="#38598c"/><rect x="285.5" y="582.7" width="2.8" height="2.8" fill="#3e4a89"/><rect x="288.0" y="582.7" width="2.8" height="2.8" fill="#3b528b"/><rect x="290.5" y="582.7" width="2.8" height="2.8" fill="#31668e"/><rect x="293.0" y="582.7" width="2.8" height="2.8" fill="#2a788e"/><rect x="295.5" y="582.7" width="2.8" height="2.8" fill="#21918c"/><rect x="298.0" y="582.7" width="2.8" height="2.8" fill="#1fa287"/><rect x="300.5" y="582.7" width="2.8" height="2.8" fill="#2fb47c"/><rect x="303.0" y="582.7" width="2.8" height="2.8" fill="#5ec962"/><rect x="305.5" y="582.7" width="2.8" height="2.8" fill="#8bd646"/><rect x="308.0" y="582.7" width="2.8" height="2.8" fill="#bddf26"/><rect x="310.5" y="582.7" width="22.8" height="2.8" fill="#fde725"/><rect x="333.0" y="582.7" width="2.8" height="2.8" fill="#addc30"/><rect x="335.5" y="582.7" width="2.8" height="2.8" fill="#7ad151"/><rect x="338.0" y="582.7" width="2.8" height="2.8" fill="#50c46a"/><rect x="340.5" y="582.7" width="2.8" height="2.8" fill="#2fb47c"/><rect x="343.0" y="582.7" width="2.8" height="2.8" fill="#1fa287"/><rect x="345.5" y="582.7" width="2.8" height="2.8" fill="#21918c"/><rect x="348.0" y="582.7" width="2.8" height="2.8" fill="#277e8e"/><rect x="255.5" y="585.2" width="2.8" height="2.8" fill="#1fa287"/><rect x="258.0" y="585.2" width="2.8" height="2.8" fill="#28ae80"/><rect x="260.5" y="585.2" width="2.8" height="2.8" fill="#2fb47c"/><rect x="263.0" y="585.2" width="2.8" height="2.8" fill="#22a884"/><rect x="265.5" y="585.2" width="2.8" height="2.8" fill="#1f968b"/><rect x="268.0" y="585.2" width="2.8" height="2.8" fill="#238a8d"/><rect x="270.5" y="585.2" width="2.8" height="2.8" fill="#2a788e"/><rect x="273.0" y="585.2" width="7.8" height="2.8" fill="#2f6c8e"/><rect x="280.5" y="585.2" width="2.8" height="2.8" fill="#355f8d"/><rect x="283.0" y="585.2" width="5.3" height="2.8" fill="#3e4a89"/><rect x="288.0" y="585.2" width="2.8" height="2.8" fill="#31668e"/><rect x="290.5" y="585.2" width="2.8" height="2.8" fill="#2a788e"/><rect x="293.0" y="585.2" width="2.8" height="2.8" fill="#238a8d"/><rect x="295.5" y="585.2" width="2.8" height="2.8" fill="#1fa287"/><rect x="298.0" y="585.2" width="2.8" height="2.8" fill="#2fb47c"/><rect x="300.5" y="585.2" width="2.8" height="2.8" fill="#50c46a"/><rect x="303.0" y="585.2" width="2.8" height="2.8" fill="#8bd646"/><rect x="305.5" y="585.2" width="2.8" height="2.8" fill="#bddf26"/><rect x="308.0" y="585.2" width="2.8" height="2.8" fill="#efe51c"/><rect x="310.5" y="585.2" width="25.3" height="2.8" fill="#fde725"/><rect x="335.5" y="585.2" width="2.8" height="2.8" fill="#addc30"/><rect x="338.0" y="585.2" width="2.8" height="2.8" fill="#7ad151"/><rect x="340.5" y="585.2" width="2.8" height="2.8" fill="#50c46a"/><rect x="343.0" y="585.2" width="2.8" height="2.8" fill="#2fb47c"/><rect x="345.5" y="585.2" width="2.8" height="2.8" fill="#1fa287"/><rect x="255.5" y="587.7" width="2.8" height="2.8" fill="#22a884"/><rect x="258.0" y="587.7" width="5.3" height="2.8" fill="#2fb47c"/><rect x="263.0" y="587.7" width="2.8" height="2.8" fill="#1fa287"/><rect x="265.5" y="587.7" width="2.8" height="2.8" fill="#1f968b"/><rect x="268.0" y="587.7" width="2.8" height="2.8" fill="#25848e"/><rect x="270.5" y="587.7" width="2.8" height="2.8" fill="#2a788e"/><rect x="273.0" y="587.7" width="5.3" height="2.8" fill="#2f6c8e"/><rect x="278.0" y="587.7" width="2.8" height="2.8" fill="#355f8d"/><rect x="280.5" y="587.7" width="5.3" height="2.8" fill="#3e4a89"/><rect x="285.5" y="587.7" width="2.8" height="2.8" fill="#355f8d"/><rect x="288.0" y="587.7" width="2.8" height="2.8" fill="#2a788e"/><rect x="290.5" y="587.7" width="2.8" height="2.8" fill="#238a8d"/><rect x="293.0" y="587.7" width="2.8" height="2.8" fill="#1e9c89"/><rect x="295.5" y="587.7" width="2.8" height="2.8" fill="#2fb47c"/><rect x="298.0" y="587.7" width="2.8" height="2.8" fill="#50c46a"/><rect x="300.5" y="587.7" width="2.8" height="2.8" fill="#7ad151"/><rect x="303.0" y="587.7" width="2.8" height="2.8" fill="#bddf26"/><rect x="305.5" y="587.7" width="2.8" height="2.8" fill="#efe51c"/><rect x="308.0" y="587.7" width="30.3" height="2.8" fill="#fde725"/><rect x="338.0" y="587.7" width="2.8" height="2.8" fill="#9bd93c"/><rect x="340.5" y="587.7" width="2.8" height="2.8" fill="#6ccd5a"/><rect x="343.0" y="587.7" width="2.8" height="2.8" fill="#44bf70"/><rect x="345.5" y="587.7" width="2.8" height="2.8" fill="#28ae80"/><rect x="255.5" y="590.2" width="2.8" height="2.8" fill="#22a884"/><rect x="258.0" y="590.2" width="5.3" height="2.8" fill="#2fb47c"/><rect x="263.0" y="590.2" width="2.8" height="2.8" fill="#1fa287"/><rect x="265.5" y="590.2" width="2.8" height="2.8" fill="#1f968b"/><rect x="268.0" y="590.2" width="2.8" height="2.8" fill="#25848e"/><rect x="270.5" y="590.2" width="2.8" height="2.8" fill="#2a788e"/><rect x="273.0" y="590.2" width="5.3" height="2.8" fill="#2f6c8e"/><rect x="278.0" y="590.2" width="2.8" height="2.8" fill="#31668e"/><rect x="280.5" y="590.2" width="2.8" height="2.8" fill="#3b528b"/><rect x="283.0" y="590.2" width="2.8" height="2.8" fill="#355f8d"/><rect x="285.5" y="590.2" width="2.8" height="2.8" fill="#2c728e"/><rect x="288.0" y="590.2" width="2.8" height="2.8" fill="#25848e"/><rect x="290.5" y="590.2" width="2.8" height="2.8" fill="#1e9c89"/><rect x="293.0" y="590.2" width="2.8" height="2.8" fill="#28ae80"/><rect x="295.5" y="590.2" width="2.8" height="2.8" fill="#50c46a"/><rect x="298.0" y="590.2" width="2.8" height="2.8" fill="#7ad151"/><rect x="300.5" y="590.2" width="2.8" height="2.8" fill="#addc30"/><rect x="303.0" y="590.2" width="2.8" height="2.8" fill="#efe51c"/><rect x="305.5" y="590.2" width="32.8" height="2.8" fill="#fde725"/><rect x="338.0" y="590.2" width="2.8" height="2.8" fill="#cde11d"/><rect x="340.5" y="590.2" width="2.8" height="2.8" fill="#9bd93c"/><rect x="343.0" y="590.2" width="2.8" height="2.8" fill="#6ccd5a"/><rect x="345.5" y="590.2" width="2.8" height="2.8" fill="#44bf70"/><rect x="255.5" y="592.7" width="2.8" height="2.8" fill="#1fa287"/><rect x="258.0" y="592.7" width="2.8" height="2.8" fill="#28ae80"/><rect x="260.5" y="592.7" width="2.8" height="2.8" fill="#38b977"/><rect x="263.0" y="592.7" width="2.8" height="2.8" fill="#22a884"/><rect x="265.5" y="592.7" width="2.8" height="2.8" fill="#1e9c89"/><rect x="268.0" y="592.7" width="2.8" height="2.8" fill="#238a8d"/><rect x="270.5" y="592.7" width="2.8" height="2.8" fill="#2a788e"/><rect x="273.0" y="592.7" width="10.3" height="2.8" fill="#2f6c8e"/><rect x="283.0" y="592.7" width="2.8" height="2.8" fill="#2c728e"/><rect x="285.5" y="592.7" width="2.8" height="2.8" fill="#25848e"/><rect x="288.0" y="592.7" width="2.8" height="2.8" fill="#1f968b"/><rect x="290.5" y="592.7" width="2.8" height="2.8" fill="#28ae80"/><rect x="293.0" y="592.7" width="2.8" height="2.8" fill="#44bf70"/><rect x="295.5" y="592.7" width="2.8" height="2.8" fill="#7ad151"/><rect x="298.0" y="592.7" width="2.8" height="2.8" fill="#addc30"/><rect x="300.5" y="592.7" width="2.8" height="2.8" fill="#dfe318"/><rect x="303.0" y="592.7" width="37.8" height="2.8" fill="#fde725"/><rect x="340.5" y="592.7" width="2.8" height="2.8" fill="#cde11d"/><rect x="343.0" y="592.7" width="2.8" height="2.8" fill="#9bd93c"/><rect x="255.5" y="595.2" width="2.8" height="2.8" fill="#1e9c89"/><rect x="258.0" y="595.2" width="2.8" height="2.8" fill="#28ae80"/><rect x="260.5" y="595.2" width="2.8" height="2.8" fill="#38b977"/><rect x="263.0" y="595.2" width="2.8" height="2.8" fill="#28ae80"/><rect x="265.5" y="595.2" width="2.8" height="2.8" fill="#1e9c89"/><rect x="268.0" y="595.2" width="2.8" height="2.8" fill="#21918c"/><rect x="270.5" y="595.2" width="2.8" height="2.8" fill="#277e8e"/><rect x="273.0" y="595.2" width="2.8" height="2.8" fill="#2c728e"/><rect x="275.5" y="595.2" width="7.8" height="2.8" fill="#2f6c8e"/><rect x="283.0" y="595.2" width="2.8" height="2.8" fill="#2a788e"/><rect x="285.5" y="595.2" width="2.8" height="2.8" fill="#21918c"/><rect x="288.0" y="595.2" width="2.8" height="2.8" fill="#22a884"/><rect x="290.5" y="595.2" width="2.8" height="2.8" fill="#44bf70"/><rect x="293.0" y="595.2" width="2.8" height="2.8" fill="#6ccd5a"/><rect x="295.5" y="595.2" width="2.8" height="2.8" fill="#addc30"/><rect x="298.0" y="595.2" width="2.8" height="2.8" fill="#dfe318"/><rect x="300.5" y="595.2" width="42.8" height="2.8" fill="#fde725"/><rect x="343.0" y="595.2" width="2.8" height="2.8" fill="#addc30"/><rect x="255.5" y="597.7" width="2.8" height="2.8" fill="#1f968b"/><rect x="258.0" y="597.7" width="2.8" height="2.8" fill="#22a884"/><rect x="260.5" y="597.7" width="2.8" height="2.8" fill="#38b977"/><rect x="263.0" y="597.7" width="2.8" height="2.8" fill="#28ae80"/><rect x="265.5" y="597.7" width="2.8" height="2.8" fill="#1fa287"/><rect x="268.0" y="597.7" width="2.8" height="2.8" fill="#21918c"/><rect x="270.5" y="597.7" width="2.8" height="2.8" fill="#25848e"/><rect x="273.0" y="597.7" width="2.8" height="2.8" fill="#2c728e"/><rect x="275.5" y="597.7" width="7.8" height="2.8" fill="#2f6c8e"/><rect x="283.0" y="597.7" width="2.8" height="2.8" fill="#2a788e"/><rect x="285.5" y="597.7" width="2.8" height="2.8" fill="#21918c"/><rect x="288.0" y="597.7" width="2.8" height="2.8" fill="#22a884"/><rect x="290.5" y="597.7" width="2.8" height="2.8" fill="#44bf70"/><rect x="293.0" y="597.7" width="2.8" height="2.8" fill="#7ad151"/><rect x="295.5" y="597.7" width="2.8" height="2.8" fill="#bddf26"/><rect x="298.0" y="597.7" width="45.3" height="2.8" fill="#fde725"/><rect x="255.5" y="600.2" width="2.8" height="2.8" fill="#1f968b"/><rect x="258.0" y="600.2" width="2.8" height="2.8" fill="#1fa287"/><rect x="260.5" y="600.2" width="5.3" height="2.8" fill="#2fb47c"/><rect x="265.5" y="600.2" width="2.8" height="2.8" fill="#22a884"/><rect x="268.0" y="600.2" width="2.8" height="2.8" fill="#1f968b"/><rect x="270.5" y="600.2" width="2.8" height="2.8" fill="#238a8d"/><rect x="273.0" y="600.2" width="2.8" height="2.8" fill="#2a788e"/><rect x="275.5" y="600.2" width="7.8" height="2.8" fill="#2f6c8e"/><rect x="283.0" y="600.2" width="2.8" height="2.8" fill="#2a788e"/><rect x="285.5" y="600.2" width="2.8" height="2.8" fill="#21918c"/><rect x="288.0" y="600.2" width="2.8" height="2.8" fill="#22a884"/><rect x="290.5" y="600.2" width="2.8" height="2.8" fill="#44bf70"/><rect x="293.0" y="600.2" width="2.8" height="2.8" fill="#7ad151"/><rect x="295.5" y="600.2" width="2.8" height="2.8" fill="#bddf26"/><rect x="298.0" y="600.2" width="45.3" height="2.8" fill="#fde725"/><rect x="255.5" y="602.7" width="2.8" height="2.8" fill="#21918c"/><rect x="258.0" y="602.7" width="2.8" height="2.8" fill="#1fa287"/><rect x="260.5" y="602.7" width="2.8" height="2.8" fill="#28ae80"/><rect x="263.0" y="602.7" width="2.8" height="2.8" fill="#38b977"/><rect x="265.5" y="602.7" width="2.8" height="2.8" fill="#22a884"/><rect x="268.0" y="602.7" width="2.8" height="2.8" fill="#1e9c89"/><rect x="270.5" y="602.7" width="2.8" height="2.8" fill="#238a8d"/><rect x="273.0" y="602.7" width="2.8" height="2.8" fill="#277e8e"/><rect x="275.5" y="602.7" width="7.8" height="2.8" fill="#2f6c8e"/><rect x="283.0" y="602.7" width="2.8" height="2.8" fill="#2a788e"/><rect x="285.5" y="602.7" width="2.8" height="2.8" fill="#21918c"/><rect x="288.0" y="602.7" width="2.8" height="2.8" fill="#22a884"/><rect x="290.5" y="602.7" width="2.8" height="2.8" fill="#44bf70"/><rect x="293.0" y="602.7" width="2.8" height="2.8" fill="#7ad151"/><rect x="295.5" y="602.7" width="2.8" height="2.8" fill="#bddf26"/><rect x="298.0" y="602.7" width="42.8" height="2.8" fill="#fde725"/><rect x="340.5" y="602.7" width="2.8" height="2.8" fill="#cde11d"/><rect x="255.5" y="605.2" width="2.8" height="2.8" fill="#238a8d"/><rect x="258.0" y="605.2" width="2.8" height="2.8" fill="#1e9c89"/><rect x="260.5" y="605.2" width="2.8" height="2.8" fill="#22a884"/><rect x="263.0" y="605.2" width="2.8" height="2.8" fill="#38b977"/><rect x="265.5" y="605.2" width="2.8" height="2.8" fill="#28ae80"/><rect x="268.0" y="605.2" width="2.8" height="2.8" fill="#1e9c89"/><rect x="270.5" y="605.2" width="2.8" height="2.8" fill="#21918c"/><rect x="273.0" y="605.2" width="2.8" height="2.8" fill="#277e8e"/><rect x="275.5" y="605.2" width="2.8" height="2.8" fill="#2c728e"/><rect x="278.0" y="605.2" width="5.3" height="2.8" fill="#2f6c8e"/><rect x="283.0" y="605.2" width="2.8" height="2.8" fill="#2a788e"/><rect x="285.5" y="605.2" width="2.8" height="2.8" fill="#21918c"/><rect x="288.0" y="605.2" width="2.8" height="2.8" fill="#22a884"/><rect x="290.5" y="605.2" width="2.8" height="2.8" fill="#44bf70"/><rect x="293.0" y="605.2" width="2.8" height="2.8" fill="#7ad151"/><rect x="295.5" y="605.2" width="2.8" height="2.8" fill="#bddf26"/><rect x="298.0" y="605.2" width="42.8" height="2.8" fill="#fde725"/><rect x="255.5" y="607.7" width="2.8" height="2.8" fill="#238a8d"/><rect x="258.0" y="607.7" width="2.8" height="2.8" fill="#1f968b"/><rect x="260.5" y="607.7" width="2.8" height="2.8" fill="#22a884"/><rect x="263.0" y="607.7" width="5.3" height="2.8" fill="#2fb47c"/><rect x="268.0" y="607.7" width="2.8" height="2.8" fill="#1fa287"/><rect x="270.5" y="607.7" width="2.8" height="2.8" fill="#1f968b"/><rect x="273.0" y="607.7" width="2.8" height="2.8" fill="#25848e"/><rect x="275.5" y="607.7" width="2.8" height="2.8" fill="#2a788e"/><rect x="278.0" y="607.7" width="5.3" height="2.8" fill="#2f6c8e"/><rect x="283.0" y="607.7" width="2.8" height="2.8" fill="#2c728e"/><rect x="285.5" y="607.7" width="2.8" height="2.8" fill="#238a8d"/><rect x="288.0" y="607.7" width="2.8" height="2.8" fill="#1fa287"/><rect x="290.5" y="607.7" width="2.8" height="2.8" fill="#38b977"/><rect x="293.0" y="607.7" width="2.8" height="2.8" fill="#6ccd5a"/><rect x="295.5" y="607.7" width="2.8" height="2.8" fill="#9bd93c"/><rect x="298.0" y="607.7" width="42.8" height="2.8" fill="#fde725"/><rect x="255.5" y="610.2" width="2.8" height="2.8" fill="#25848e"/><rect x="258.0" y="610.2" width="2.8" height="2.8" fill="#1f968b"/><rect x="260.5" y="610.2" width="2.8" height="2.8" fill="#1fa287"/><rect x="263.0" y="610.2" width="5.3" height="2.8" fill="#2fb47c"/><rect x="268.0" y="610.2" width="2.8" height="2.8" fill="#22a884"/><rect x="270.5" y="610.2" width="2.8" height="2.8" fill="#1f968b"/><rect x="273.0" y="610.2" width="2.8" height="2.8" fill="#238a8d"/><rect x="275.5" y="610.2" width="2.8" height="2.8" fill="#2a788e"/><rect x="278.0" y="610.2" width="7.8" height="2.8" fill="#2f6c8e"/><rect x="285.5" y="610.2" width="2.8" height="2.8" fill="#25848e"/><rect x="288.0" y="610.2" width="2.8" height="2.8" fill="#1e9c89"/><rect x="290.5" y="610.2" width="2.8" height="2.8" fill="#28ae80"/><rect x="293.0" y="610.2" width="2.8" height="2.8" fill="#50c46a"/><rect x="295.5" y="610.2" width="2.8" height="2.8" fill="#7ad151"/><rect x="298.0" y="610.2" width="2.8" height="2.8" fill="#bddf26"/><rect x="300.5" y="610.2" width="37.8" height="2.8" fill="#fde725"/><rect x="255.5" y="612.7" width="2.8" height="2.8" fill="#277e8e"/><rect x="258.0" y="612.7" width="5.3" height="2.8" fill="#21918c"/><rect x="263.0" y="612.7" width="2.8" height="2.8" fill="#1f968b"/><rect x="265.5" y="612.7" width="5.3" height="2.8" fill="#1e9c89"/><rect x="270.5" y="612.7" width="2.8" height="2.8" fill="#1f968b"/><rect x="273.0" y="612.7" width="2.8" height="2.8" fill="#25848e"/><rect x="275.5" y="612.7" width="2.8" height="2.8" fill="#2a788e"/><rect x="278.0" y="612.7" width="7.8" height="2.8" fill="#2f6c8e"/><rect x="285.5" y="612.7" width="2.8" height="2.8" fill="#2a788e"/><rect x="288.0" y="612.7" width="2.8" height="2.8" fill="#21918c"/><rect x="290.5" y="612.7" width="2.8" height="2.8" fill="#22a884"/><rect x="293.0" y="612.7" width="2.8" height="2.8" fill="#38b977"/><rect x="295.5" y="612.7" width="2.8" height="2.8" fill="#6ccd5a"/><rect x="298.0" y="612.7" width="2.8" height="2.8" fill="#9bd93c"/><rect x="300.5" y="612.7" width="35.3" height="2.8" fill="#fde725"/><rect x="335.5" y="612.7" width="2.8" height="2.8" fill="#cde11d"/><rect x="255.5" y="615.2" width="2.8" height="2.8" fill="#2f6c8e"/><rect x="258.0" y="615.2" width="5.3" height="2.8" fill="#2c728e"/><rect x="263.0" y="615.2" width="2.8" height="2.8" fill="#2a788e"/><rect x="265.5" y="615.2" width="5.3" height="2.8" fill="#277e8e"/><rect x="270.5" y="615.2" width="2.8" height="2.8" fill="#25848e"/><rect x="273.0" y="615.2" width="2.8" height="2.8" fill="#277e8e"/><rect x="275.5" y="615.2" width="2.8" height="2.8" fill="#2c728e"/><rect x="278.0" y="615.2" width="7.8" height="2.8" fill="#2f6c8e"/><rect x="285.5" y="615.2" width="2.8" height="2.8" fill="#2c728e"/><rect x="288.0" y="615.2" width="2.8" height="2.8" fill="#25848e"/><rect x="290.5" y="615.2" width="2.8" height="2.8" fill="#1e9c89"/><rect x="293.0" y="615.2" width="2.8" height="2.8" fill="#28ae80"/><rect x="295.5" y="615.2" width="2.8" height="2.8" fill="#50c46a"/><rect x="298.0" y="615.2" width="2.8" height="2.8" fill="#7ad151"/><rect x="300.5" y="615.2" width="2.8" height="2.8" fill="#bddf26"/><rect x="303.0" y="615.2" width="32.8" height="2.8" fill="#fde725"/><rect x="335.5" y="615.2" width="2.8" height="2.8" fill="#addc30"/><rect x="255.5" y="617.7" width="2.8" height="2.8" fill="#3e4a89"/><rect x="258.0" y="617.7" width="5.3" height="2.8" fill="#3b528b"/><rect x="263.0" y="617.7" width="2.8" height="2.8" fill="#38598c"/><rect x="265.5" y="617.7" width="5.3" height="2.8" fill="#355f8d"/><rect x="270.5" y="617.7" width="2.8" height="2.8" fill="#2f6c8e"/><rect x="273.0" y="617.7" width="2.8" height="2.8" fill="#2a788e"/><rect x="275.5" y="617.7" width="12.8" height="2.8" fill="#2f6c8e"/><rect x="288.0" y="617.7" width="2.8" height="2.8" fill="#2a788e"/><rect x="290.5" y="617.7" width="2.8" height="2.8" fill="#21918c"/><rect x="293.0" y="617.7" width="2.8" height="2.8" fill="#1fa287"/><rect x="295.5" y="617.7" width="2.8" height="2.8" fill="#38b977"/><rect x="298.0" y="617.7" width="2.8" height="2.8" fill="#6ccd5a"/><rect x="300.5" y="617.7" width="2.8" height="2.8" fill="#9bd93c"/><rect x="303.0" y="617.7" width="30.3" height="2.8" fill="#fde725"/><rect x="333.0" y="617.7" width="2.8" height="2.8" fill="#bddf26"/><rect x="255.5" y="620.2" width="2.8" height="2.8" fill="#482475"/><rect x="258.0" y="620.2" width="5.3" height="2.8" fill="#472d7b"/><rect x="263.0" y="620.2" width="2.8" height="2.8" fill="#463480"/><rect x="265.5" y="620.2" width="5.3" height="2.8" fill="#443b84"/><rect x="270.5" y="620.2" width="2.8" height="2.8" fill="#3e4a89"/><rect x="273.0" y="620.2" width="2.8" height="2.8" fill="#31668e"/><rect x="275.5" y="620.2" width="12.8" height="2.8" fill="#2f6c8e"/><rect x="288.0" y="620.2" width="2.8" height="2.8" fill="#2c728e"/><rect x="290.5" y="620.2" width="2.8" height="2.8" fill="#25848e"/><rect x="293.0" y="620.2" width="2.8" height="2.8" fill="#1e9c89"/><rect x="295.5" y="620.2" width="2.8" height="2.8" fill="#28ae80"/><rect x="298.0" y="620.2" width="2.8" height="2.8" fill="#50c46a"/><rect x="300.5" y="620.2" width="2.8" height="2.8" fill="#7ad151"/><rect x="303.0" y="620.2" width="2.8" height="2.8" fill="#bddf26"/><rect x="305.5" y="620.2" width="27.8" height="2.8" fill="#fde725"/><rect x="333.0" y="620.2" width="2.8" height="2.8" fill="#9bd93c"/><rect x="255.5" y="622.7" width="7.8" height="2.8" fill="#440154"/><rect x="263.0" y="622.7" width="2.8" height="2.8" fill="#460a5d"/><rect x="265.5" y="622.7" width="2.8" height="2.8" fill="#471365"/><rect x="268.0" y="622.7" width="2.8" height="2.8" fill="#481c6e"/><rect x="270.5" y="622.7" width="2.8" height="2.8" fill="#463480"/><rect x="273.0" y="622.7" width="2.8" height="2.8" fill="#38598c"/><rect x="275.5" y="622.7" width="15.3" height="2.8" fill="#2f6c8e"/><rect x="290.5" y="622.7" width="2.8" height="2.8" fill="#2a788e"/><rect x="293.0" y="622.7" width="2.8" height="2.8" fill="#21918c"/><rect x="295.5" y="622.7" width="2.8" height="2.8" fill="#1fa287"/><rect x="298.0" y="622.7" width="2.8" height="2.8" fill="#38b977"/><rect x="300.5" y="622.7" width="2.8" height="2.8" fill="#6ccd5a"/><rect x="303.0" y="622.7" width="2.8" height="2.8" fill="#8bd646"/><rect x="305.5" y="622.7" width="2.8" height="2.8" fill="#addc30"/><rect x="308.0" y="622.7" width="2.8" height="2.8" fill="#dfe318"/><rect x="310.5" y="622.7" width="20.3" height="2.8" fill="#fde725"/><rect x="330.5" y="622.7" width="2.8" height="2.8" fill="#bddf26"/><rect x="255.5" y="625.2" width="12.8" height="2.8" fill="#440154"/><rect x="268.0" y="625.2" width="2.8" height="2.8" fill="#460a5d"/><rect x="270.5" y="625.2" width="2.8" height="2.8" fill="#463480"/><rect x="273.0" y="625.2" width="2.8" height="2.8" fill="#38598c"/><rect x="275.5" y="625.2" width="17.8" height="2.8" fill="#2f6c8e"/><rect x="293.0" y="625.2" width="2.8" height="2.8" fill="#25848e"/><rect x="295.5" y="625.2" width="2.8" height="2.8" fill="#1e9c89"/><rect x="298.0" y="625.2" width="2.8" height="2.8" fill="#28ae80"/><rect x="300.5" y="625.2" width="2.8" height="2.8" fill="#38b977"/><rect x="303.0" y="625.2" width="2.8" height="2.8" fill="#50c46a"/><rect x="305.5" y="625.2" width="2.8" height="2.8" fill="#6ccd5a"/><rect x="308.0" y="625.2" width="2.8" height="2.8" fill="#9bd93c"/><rect x="310.5" y="625.2" width="2.8" height="2.8" fill="#dfe318"/><rect x="313.0" y="625.2" width="17.8" height="2.8" fill="#fde725"/><rect x="330.5" y="625.2" width="2.8" height="2.8" fill="#9bd93c"/><rect x="255.5" y="627.7" width="12.8" height="2.8" fill="#440154"/><rect x="268.0" y="627.7" width="2.8" height="2.8" fill="#460a5d"/><rect x="270.5" y="627.7" width="2.8" height="2.8" fill="#463480"/><rect x="273.0" y="627.7" width="2.8" height="2.8" fill="#38598c"/><rect x="275.5" y="627.7" width="17.8" height="2.8" fill="#2f6c8e"/><rect x="293.0" y="627.7" width="2.8" height="2.8" fill="#2a788e"/><rect x="295.5" y="627.7" width="2.8" height="2.8" fill="#21918c"/><rect x="298.0" y="627.7" width="2.8" height="2.8" fill="#1f968b"/><rect x="300.5" y="627.7" width="2.8" height="2.8" fill="#1e9c89"/><rect x="303.0" y="627.7" width="2.8" height="2.8" fill="#22a884"/><rect x="305.5" y="627.7" width="2.8" height="2.8" fill="#38b977"/><rect x="308.0" y="627.7" width="2.8" height="2.8" fill="#6ccd5a"/><rect x="310.5" y="627.7" width="2.8" height="2.8" fill="#9bd93c"/><rect x="313.0" y="627.7" width="2.8" height="2.8" fill="#dfe318"/><rect x="315.5" y="627.7" width="12.8" height="2.8" fill="#fde725"/><rect x="328.0" y="627.7" width="2.8" height="2.8" fill="#bddf26"/><rect x="330.5" y="627.7" width="2.8" height="2.8" fill="#8bd646"/><rect x="255.5" y="630.2" width="12.8" height="2.8" fill="#440154"/><rect x="268.0" y="630.2" width="2.8" height="2.8" fill="#460a5d"/><rect x="270.5" y="630.2" width="2.8" height="2.8" fill="#463480"/><rect x="273.0" y="630.2" width="2.8" height="2.8" fill="#38598c"/><rect x="275.5" y="630.2" width="20.3" height="2.8" fill="#2f6c8e"/><rect x="295.5" y="630.2" width="2.8" height="2.8" fill="#2c728e"/><rect x="298.0" y="630.2" width="2.8" height="2.8" fill="#2a788e"/><rect x="300.5" y="630.2" width="2.8" height="2.8" fill="#25848e"/><rect x="303.0" y="630.2" width="2.8" height="2.8" fill="#21918c"/><rect x="305.5" y="630.2" width="2.8" height="2.8" fill="#1fa287"/><rect x="308.0" y="630.2" width="2.8" height="2.8" fill="#38b977"/><rect x="310.5" y="630.2" width="2.8" height="2.8" fill="#6ccd5a"/><rect x="313.0" y="630.2" width="2.8" height="2.8" fill="#bddf26"/><rect x="315.5" y="630.2" width="12.8" height="2.8" fill="#fde725"/><rect x="328.0" y="630.2" width="2.8" height="2.8" fill="#addc30"/><rect x="255.5" y="632.7" width="12.8" height="2.8" fill="#440154"/><rect x="268.0" y="632.7" width="2.8" height="2.8" fill="#460a5d"/><rect x="270.5" y="632.7" width="2.8" height="2.8" fill="#463480"/><rect x="273.0" y="632.7" width="2.8" height="2.8" fill="#38598c"/><rect x="275.5" y="632.7" width="17.8" height="2.8" fill="#2f6c8e"/><rect x="293.0" y="632.7" width="2.8" height="2.8" fill="#38598c"/><rect x="295.5" y="632.7" width="2.8" height="2.8" fill="#3b528b"/><rect x="298.0" y="632.7" width="2.8" height="2.8" fill="#38598c"/><rect x="300.5" y="632.7" width="2.8" height="2.8" fill="#31668e"/><rect x="303.0" y="632.7" width="2.8" height="2.8" fill="#2a788e"/><rect x="305.5" y="632.7" width="2.8" height="2.8" fill="#21918c"/><rect x="308.0" y="632.7" width="2.8" height="2.8" fill="#22a884"/><rect x="310.5" y="632.7" width="2.8" height="2.8" fill="#50c46a"/><rect x="313.0" y="632.7" width="2.8" height="2.8" fill="#8bd646"/><rect x="315.5" y="632.7" width="2.8" height="2.8" fill="#dfe318"/><rect x="318.0" y="632.7" width="10.3" height="2.8" fill="#fde725"/><rect x="328.0" y="632.7" width="2.8" height="2.8" fill="#9bd93c"/><rect x="255.5" y="635.2" width="12.8" height="2.8" fill="#440154"/><rect x="268.0" y="635.2" width="2.8" height="2.8" fill="#460a5d"/><rect x="270.5" y="635.2" width="2.8" height="2.8" fill="#463480"/><rect x="273.0" y="635.2" width="2.8" height="2.8" fill="#38598c"/><rect x="275.5" y="635.2" width="15.3" height="2.8" fill="#2f6c8e"/><rect x="290.5" y="635.2" width="2.8" height="2.8" fill="#3b528b"/><rect x="293.0" y="635.2" width="2.8" height="2.8" fill="#443b84"/><rect x="295.5" y="635.2" width="2.8" height="2.8" fill="#472d7b"/><rect x="298.0" y="635.2" width="2.8" height="2.8" fill="#463480"/><rect x="300.5" y="635.2" width="2.8" height="2.8" fill="#3e4a89"/><rect x="303.0" y="635.2" width="2.8" height="2.8" fill="#31668e"/><rect x="305.5" y="635.2" width="2.8" height="2.8" fill="#25848e"/><rect x="308.0" y="635.2" width="2.8" height="2.8" fill="#1e9c89"/><rect x="310.5" y="635.2" width="2.8" height="2.8" fill="#38b977"/><rect x="313.0" y="635.2" width="2.8" height="2.8" fill="#7ad151"/><rect x="315.5" y="635.2" width="2.8" height="2.8" fill="#cde11d"/><rect x="318.0" y="635.2" width="7.8" height="2.8" fill="#fde725"/><rect x="325.5" y="635.2" width="2.8" height="2.8" fill="#cde11d"/><rect x="255.5" y="637.7" width="12.8" height="2.8" fill="#440154"/><rect x="268.0" y="637.7" width="2.8" height="2.8" fill="#460a5d"/><rect x="270.5" y="637.7" width="2.8" height="2.8" fill="#463480"/><rect x="273.0" y="637.7" width="2.8" height="2.8" fill="#38598c"/><rect x="275.5" y="637.7" width="12.8" height="2.8" fill="#2f6c8e"/><rect x="288.0" y="637.7" width="2.8" height="2.8" fill="#355f8d"/><rect x="290.5" y="637.7" width="2.8" height="2.8" fill="#443b84"/><rect x="293.0" y="637.7" width="2.8" height="2.8" fill="#481c6e"/><rect x="295.5" y="637.7" width="2.8" height="2.8" fill="#460a5d"/><rect x="298.0" y="637.7" width="2.8" height="2.8" fill="#471365"/><rect x="300.5" y="637.7" width="2.8" height="2.8" fill="#443b84"/><rect x="303.0" y="637.7" width="2.8" height="2.8" fill="#38598c"/><rect x="305.5" y="637.7" width="2.8" height="2.8" fill="#2a788e"/><rect x="308.0" y="637.7" width="2.8" height="2.8" fill="#1f968b"/><rect x="310.5" y="637.7" width="2.8" height="2.8" fill="#2fb47c"/><rect x="313.0" y="637.7" width="2.8" height="2.8" fill="#6ccd5a"/><rect x="315.5" y="637.7" width="2.8" height="2.8" fill="#bddf26"/><rect x="318.0" y="637.7" width="7.8" height="2.8" fill="#fde725"/><rect x="325.5" y="637.7" width="2.8" height="2.8" fill="#addc30"/><rect x="255.5" y="640.2" width="5.3" height="2.8" fill="#460a5d"/><rect x="260.5" y="640.2" width="7.8" height="2.8" fill="#440154"/><rect x="268.0" y="640.2" width="2.8" height="2.8" fill="#460a5d"/><rect x="270.5" y="640.2" width="2.8" height="2.8" fill="#463480"/><rect x="273.0" y="640.2" width="2.8" height="2.8" fill="#38598c"/><rect x="275.5" y="640.2" width="12.8" height="2.8" fill="#2f6c8e"/><rect x="288.0" y="640.2" width="2.8" height="2.8" fill="#38598c"/><rect x="290.5" y="640.2" width="2.8" height="2.8" fill="#463480"/><rect x="293.0" y="640.2" width="7.8" height="2.8" fill="#460a5d"/><rect x="300.5" y="640.2" width="2.8" height="2.8" fill="#463480"/><rect x="303.0" y="640.2" width="2.8" height="2.8" fill="#38598c"/><rect x="305.5" y="640.2" width="2.8" height="2.8" fill="#2a788e"/><rect x="308.0" y="640.2" width="2.8" height="2.8" fill="#1f968b"/><rect x="310.5" y="640.2" width="2.8" height="2.8" fill="#2fb47c"/><rect x="313.0" y="640.2" width="2.8" height="2.8" fill="#6ccd5a"/><rect x="315.5" y="640.2" width="2.8" height="2.8" fill="#bddf26"/><rect x="318.0" y="640.2" width="7.8" height="2.8" fill="#fde725"/><rect x="325.5" y="640.2" width="2.8" height="2.8" fill="#9bd93c"/><rect x="255.5" y="642.7" width="5.3" height="2.8" fill="#463480"/><rect x="260.5" y="642.7" width="7.8" height="2.8" fill="#472d7b"/><rect x="268.0" y="642.7" width="2.8" height="2.8" fill="#482475"/><rect x="270.5" y="642.7" width="2.8" height="2.8" fill="#443b84"/><rect x="273.0" y="642.7" width="2.8" height="2.8" fill="#355f8d"/><rect x="275.5" y="642.7" width="12.8" height="2.8" fill="#2f6c8e"/><rect x="288.0" y="642.7" width="2.8" height="2.8" fill="#3b528b"/><rect x="290.5" y="642.7" width="2.8" height="2.8" fill="#472d7b"/><rect x="293.0" y="642.7" width="5.3" height="2.8" fill="#460a5d"/><rect x="298.0" y="642.7" width="2.8" height="2.8" fill="#471365"/><rect x="300.5" y="642.7" width="2.8" height="2.8" fill="#443b84"/><rect x="303.0" y="642.7" width="2.8" height="2.8" fill="#355f8d"/><rect x="305.5" y="642.7" width="2.8" height="2.8" fill="#277e8e"/><rect x="308.0" y="642.7" width="2.8" height="2.8" fill="#1f968b"/><rect x="310.5" y="642.7" width="2.8" height="2.8" fill="#2fb47c"/><rect x="313.0" y="642.7" width="2.8" height="2.8" fill="#6ccd5a"/><rect x="315.5" y="642.7" width="2.8" height="2.8" fill="#bddf26"/><rect x="318.0" y="642.7" width="5.3" height="2.8" fill="#fde725"/><rect x="323.0" y="642.7" width="2.8" height="2.8" fill="#cde11d"/><rect x="255.5" y="645.2" width="5.3" height="2.8" fill="#38598c"/><rect x="260.5" y="645.2" width="7.8" height="2.8" fill="#3b528b"/><rect x="268.0" y="645.2" width="2.8" height="2.8" fill="#3e4a89"/><rect x="270.5" y="645.2" width="2.8" height="2.8" fill="#38598c"/><rect x="273.0" y="645.2" width="12.8" height="2.8" fill="#2f6c8e"/><rect x="285.5" y="645.2" width="2.8" height="2.8" fill="#31668e"/><rect x="288.0" y="645.2" width="2.8" height="2.8" fill="#414487"/><rect x="290.5" y="645.2" width="2.8" height="2.8" fill="#481c6e"/><rect x="293.0" y="645.2" width="5.3" height="2.8" fill="#460a5d"/><rect x="298.0" y="645.2" width="2.8" height="2.8" fill="#481c6e"/><rect x="300.5" y="645.2" width="2.8" height="2.8" fill="#414487"/><rect x="303.0" y="645.2" width="2.8" height="2.8" fill="#31668e"/><rect x="305.5" y="645.2" width="2.8" height="2.8" fill="#25848e"/><rect x="308.0" y="645.2" width="2.8" height="2.8" fill="#1fa287"/><rect x="310.5" y="645.2" width="2.8" height="2.8" fill="#44bf70"/><rect x="313.0" y="645.2" width="2.8" height="2.8" fill="#7ad151"/><rect x="315.5" y="645.2" width="2.8" height="2.8" fill="#cde11d"/><rect x="318.0" y="645.2" width="5.3" height="2.8" fill="#fde725"/><rect x="323.0" y="645.2" width="2.8" height="2.8" fill="#addc30"/><rect x="255.5" y="647.7" width="7.8" height="2.8" fill="#2f6c8e"/><rect x="263.0" y="647.7" width="5.3" height="2.8" fill="#2c728e"/><rect x="268.0" y="647.7" width="2.8" height="2.8" fill="#2f6c8e"/><rect x="270.5" y="647.7" width="2.8" height="2.8" fill="#2c728e"/><rect x="273.0" y="647.7" width="2.8" height="2.8" fill="#2a788e"/><rect x="275.5" y="647.7" width="10.3" height="2.8" fill="#2f6c8e"/><rect x="285.5" y="647.7" width="2.8" height="2.8" fill="#355f8d"/><rect x="288.0" y="647.7" width="2.8" height="2.8" fill="#443b84"/><rect x="290.5" y="647.7" width="2.8" height="2.8" fill="#471365"/><rect x="293.0" y="647.7" width="5.3" height="2.8" fill="#460a5d"/><rect x="298.0" y="647.7" width="2.8" height="2.8" fill="#472d7b"/><rect x="300.5" y="647.7" width="2.8" height="2.8" fill="#3b528b"/><rect x="303.0" y="647.7" width="2.8" height="2.8" fill="#2f6c8e"/><rect x="305.5" y="647.7" width="2.8" height="2.8" fill="#238a8d"/><rect x="308.0" y="647.7" width="2.8" height="2.8" fill="#22a884"/><rect x="310.5" y="647.7" width="2.8" height="2.8" fill="#50c46a"/><rect x="313.0" y="647.7" width="2.8" height="2.8" fill="#9bd93c"/><rect x="315.5" y="647.7" width="2.8" height="2.8" fill="#dfe318"/><rect x="318.0" y="647.7" width="5.3" height="2.8" fill="#fde725"/><rect x="255.5" y="650.2" width="7.8" height="2.8" fill="#2f6c8e"/><rect x="263.0" y="650.2" width="5.3" height="2.8" fill="#2a788e"/><rect x="268.0" y="650.2" width="2.8" height="2.8" fill="#277e8e"/><rect x="270.5" y="650.2" width="2.8" height="2.8" fill="#25848e"/><rect x="273.0" y="650.2" width="2.8" height="2.8" fill="#277e8e"/><rect x="275.5" y="650.2" width="10.3" height="2.8" fill="#2f6c8e"/><rect x="285.5" y="650.2" width="2.8" height="2.8" fill="#3b528b"/><rect x="288.0" y="650.2" width="2.8" height="2.8" fill="#463480"/><rect x="290.5" y="650.2" width="7.8" height="2.8" fill="#460a5d"/><rect x="298.0" y="650.2" width="2.8" height="2.8" fill="#463480"/><rect x="300.5" y="650.2" width="2.8" height="2.8" fill="#38598c"/><rect x="303.0" y="650.2" width="2.8" height="2.8" fill="#2a788e"/><rect x="305.5" y="650.2" width="2.8" height="2.8" fill="#1f968b"/><rect x="308.0" y="650.2" width="2.8" height="2.8" fill="#28ae80"/><rect x="310.5" y="650.2" width="2.8" height="2.8" fill="#5ec962"/><rect x="313.0" y="650.2" width="2.8" height="2.8" fill="#addc30"/><rect x="315.5" y="650.2" width="5.3" height="2.8" fill="#fde725"/><rect x="320.5" y="650.2" width="2.8" height="2.8" fill="#cde11d"/><rect x="255.5" y="652.7" width="5.3" height="2.8" fill="#3e4a89"/><rect x="260.5" y="652.7" width="2.8" height="2.8" fill="#3b528b"/><rect x="263.0" y="652.7" width="5.3" height="2.8" fill="#38598c"/><rect x="268.0" y="652.7" width="2.8" height="2.8" fill="#355f8d"/><rect x="270.5" y="652.7" width="5.3" height="2.8" fill="#31668e"/><rect x="275.5" y="652.7" width="10.3" height="2.8" fill="#2f6c8e"/><rect x="285.5" y="652.7" width="2.8" height="2.8" fill="#3e4a89"/><rect x="288.0" y="652.7" width="2.8" height="2.8" fill="#482475"/><rect x="290.5" y="652.7" width="5.3" height="2.8" fill="#460a5d"/><rect x="295.5" y="652.7" width="2.8" height="2.8" fill="#481c6e"/><rect x="298.0" y="652.7" width="2.8" height="2.8" fill="#443b84"/><rect x="300.5" y="652.7" width="2.8" height="2.8" fill="#355f8d"/><rect x="303.0" y="652.7" width="2.8" height="2.8" fill="#277e8e"/><rect x="305.5" y="652.7" width="2.8" height="2.8" fill="#1e9c89"/><rect x="308.0" y="652.7" width="2.8" height="2.8" fill="#38b977"/><rect x="310.5" y="652.7" width="2.8" height="2.8" fill="#6ccd5a"/><rect x="313.0" y="652.7" width="2.8" height="2.8" fill="#bddf26"/><rect x="315.5" y="652.7" width="5.3" height="2.8" fill="#fde725"/><rect x="320.5" y="652.7" width="2.8" height="2.8" fill="#bddf26"/><rect x="255.5" y="655.2" width="20.3" height="2.8" fill="#414487"/><rect x="275.5" y="655.2" width="2.8" height="2.8" fill="#3e4a89"/><rect x="278.0" y="655.2" width="2.8" height="2.8" fill="#31668e"/><rect x="280.5" y="655.2" width="2.8" height="2.8" fill="#2f6c8e"/><rect x="283.0" y="655.2" width="2.8" height="2.8" fill="#31668e"/><rect x="285.5" y="655.2" width="2.8" height="2.8" fill="#414487"/><rect x="288.0" y="655.2" width="2.8" height="2.8" fill="#481c6e"/><rect x="290.5" y="655.2" width="5.3" height="2.8" fill="#460a5d"/><rect x="295.5" y="655.2" width="2.8" height="2.8" fill="#482475"/><rect x="298.0" y="655.2" width="2.8" height="2.8" fill="#3e4a89"/><rect x="300.5" y="655.2" width="2.8" height="2.8" fill="#31668e"/><rect x="303.0" y="655.2" width="2.8" height="2.8" fill="#25848e"/><rect x="305.5" y="655.2" width="2.8" height="2.8" fill="#1fa287"/><rect x="308.0" y="655.2" width="2.8" height="2.8" fill="#44bf70"/><rect x="310.5" y="655.2" width="2.8" height="2.8" fill="#8bd646"/><rect x="313.0" y="655.2" width="2.8" height="2.8" fill="#dfe318"/><rect x="315.5" y="655.2" width="5.3" height="2.8" fill="#fde725"/><rect x="255.5" y="657.7" width="22.8" height="2.8" fill="#414487"/><rect x="278.0" y="657.7" width="2.8" height="2.8" fill="#31668e"/><rect x="280.5" y="657.7" width="2.8" height="2.8" fill="#2f6c8e"/><rect x="283.0" y="657.7" width="2.8" height="2.8" fill="#38598c"/><rect x="285.5" y="657.7" width="2.8" height="2.8" fill="#443b84"/><rect x="288.0" y="657.7" width="2.8" height="2.8" fill="#471365"/><rect x="290.5" y="657.7" width="5.3" height="2.8" fill="#460a5d"/><rect x="295.5" y="657.7" width="2.8" height="2.8" fill="#472d7b"/><rect x="298.0" y="657.7" width="2.8" height="2.8" fill="#3b528b"/><rect x="300.5" y="657.7" width="2.8" height="2.8" fill="#2c728e"/><rect x="303.0" y="657.7" width="2.8" height="2.8" fill="#21918c"/><rect x="305.5" y="657.7" width="2.8" height="2.8" fill="#22a884"/><rect x="308.0" y="657.7" width="2.8" height="2.8" fill="#50c46a"/><rect x="310.5" y="657.7" width="2.8" height="2.8" fill="#9bd93c"/><rect x="313.0" y="657.7" width="2.8" height="2.8" fill="#efe51c"/><rect x="315.5" y="657.7" width="5.3" height="2.8" fill="#fde725"/><rect x="255.5" y="660.2" width="22.8" height="2.8" fill="#414487"/><rect x="278.0" y="660.2" width="2.8" height="2.8" fill="#31668e"/><rect x="280.5" y="660.2" width="2.8" height="2.8" fill="#2f6c8e"/><rect x="283.0" y="660.2" width="2.8" height="2.8" fill="#3b528b"/><rect x="285.5" y="660.2" width="2.8" height="2.8" fill="#472d7b"/><rect x="288.0" y="660.2" width="5.3" height="2.8" fill="#460a5d"/><rect x="293.0" y="660.2" width="2.8" height="2.8" fill="#471365"/><rect x="295.5" y="660.2" width="2.8" height="2.8" fill="#463480"/><rect x="298.0" y="660.2" width="2.8" height="2.8" fill="#38598c"/><rect x="300.5" y="660.2" width="2.8" height="2.8" fill="#2a788e"/><rect x="303.0" y="660.2" width="2.8" height="2.8" fill="#1f968b"/><rect x="305.5" y="660.2" width="2.8" height="2.8" fill="#2fb47c"/><rect x="308.0" y="660.2" width="2.8" height="2.8" fill="#6ccd5a"/><rect x="310.5" y="660.2" width="2.8" height="2.8" fill="#addc30"/><rect x="313.0" y="660.2" width="5.3" height="2.8" fill="#fde725"/><rect x="318.0" y="660.2" width="2.8" height="2.8" fill="#bddf26"/><rect x="255.5" y="662.7" width="22.8" height="2.8" fill="#414487"/><rect x="278.0" y="662.7" width="2.8" height="2.8" fill="#31668e"/><rect x="280.5" y="662.7" width="2.8" height="2.8" fill="#2f6c8e"/><rect x="283.0" y="662.7" width="2.8" height="2.8" fill="#3e4a89"/><rect x="285.5" y="662.7" width="2.8" height="2.8" fill="#482475"/><rect x="288.0" y="662.7" width="5.3" height="2.8" fill="#460a5d"/><rect x="293.0" y="662.7" width="2.8" height="2.8" fill="#481c6e"/><rect x="295.5" y="662.7" width="2.8" height="2.8" fill="#414487"/><rect x="298.0" y="662.7" width="2.8" height="2.8" fill="#31668e"/><rect x="300.5" y="662.7" width="2.8" height="2.8" fill="#277e8e"/><rect x="303.0" y="662.7" width="2.8" height="2.8" fill="#1e9c89"/><rect x="305.5" y="662.7" width="2.8" height="2.8" fill="#38b977"/><rect x="308.0" y="662.7" width="2.8" height="2.8" fill="#7ad151"/><rect x="310.5" y="662.7" width="2.8" height="2.8" fill="#bddf26"/><rect x="313.0" y="662.7" width="5.3" height="2.8" fill="#fde725"/><rect x="255.5" y="665.2" width="22.8" height="2.8" fill="#414487"/><rect x="278.0" y="665.2" width="2.8" height="2.8" fill="#31668e"/><rect x="280.5" y="665.2" width="2.8" height="2.8" fill="#355f8d"/><rect x="283.0" y="665.2" width="2.8" height="2.8" fill="#443b84"/><rect x="285.5" y="665.2" width="2.8" height="2.8" fill="#481c6e"/><rect x="288.0" y="665.2" width="5.3" height="2.8" fill="#460a5d"/><rect x="293.0" y="665.2" width="2.8" height="2.8" fill="#482475"/><rect x="295.5" y="665.2" width="2.8" height="2.8" fill="#3e4a89"/><rect x="298.0" y="665.2" width="2.8" height="2.8" fill="#2f6c8e"/><rect x="300.5" y="665.2" width="2.8" height="2.8" fill="#238a8d"/><rect x="303.0" y="665.2" width="2.8" height="2.8" fill="#22a884"/><rect x="305.5" y="665.2" width="2.8" height="2.8" fill="#44bf70"/><rect x="308.0" y="665.2" width="2.8" height="2.8" fill="#8bd646"/><rect x="310.5" y="665.2" width="2.8" height="2.8" fill="#cde11d"/><rect x="313.0" y="665.2" width="5.3" height="2.8" fill="#fde725"/><rect x="255.5" y="667.7" width="22.8" height="2.8" fill="#414487"/><rect x="278.0" y="667.7" width="2.8" height="2.8" fill="#31668e"/><rect x="280.5" y="667.7" width="2.8" height="2.8" fill="#38598c"/><rect x="283.0" y="667.7" width="2.8" height="2.8" fill="#463480"/><rect x="285.5" y="667.7" width="7.8" height="2.8" fill="#460a5d"/><rect x="293.0" y="667.7" width="2.8" height="2.8" fill="#463480"/><rect x="295.5" y="667.7" width="2.8" height="2.8" fill="#3b528b"/><rect x="298.0" y="667.7" width="2.8" height="2.8" fill="#2c728e"/><rect x="300.5" y="667.7" width="2.8" height="2.8" fill="#21918c"/><rect x="303.0" y="667.7" width="2.8" height="2.8" fill="#28ae80"/><rect x="305.5" y="667.7" width="2.8" height="2.8" fill="#5ec962"/><rect x="308.0" y="667.7" width="2.8" height="2.8" fill="#9bd93c"/><rect x="310.5" y="667.7" width="2.8" height="2.8" fill="#efe51c"/><rect x="313.0" y="667.7" width="2.8" height="2.8" fill="#fde725"/><rect x="255.5" y="670.2" width="20.3" height="2.8" fill="#414487"/><rect x="275.5" y="670.2" width="2.8" height="2.8" fill="#3e4a89"/><rect x="278.0" y="670.2" width="2.8" height="2.8" fill="#2f6c8e"/><rect x="280.5" y="670.2" width="2.8" height="2.8" fill="#3b528b"/><rect x="283.0" y="670.2" width="2.8" height="2.8" fill="#472d7b"/><rect x="285.5" y="670.2" width="5.3" height="2.8" fill="#460a5d"/><rect x="290.5" y="670.2" width="2.8" height="2.8" fill="#471365"/><rect x="293.0" y="670.2" width="2.8" height="2.8" fill="#443b84"/><rect x="295.5" y="670.2" width="2.8" height="2.8" fill="#355f8d"/><rect x="298.0" y="670.2" width="2.8" height="2.8" fill="#277e8e"/><rect x="300.5" y="670.2" width="2.8" height="2.8" fill="#1f968b"/><rect x="303.0" y="670.2" width="2.8" height="2.8" fill="#2fb47c"/><rect x="305.5" y="670.2" width="2.8" height="2.8" fill="#6ccd5a"/><rect x="308.0" y="670.2" width="2.8" height="2.8" fill="#addc30"/><rect x="310.5" y="670.2" width="5.3" height="2.8" fill="#fde725"/><rect x="255.5" y="672.7" width="20.3" height="2.8" fill="#414487"/><rect x="275.5" y="672.7" width="2.8" height="2.8" fill="#3e4a89"/><rect x="278.0" y="672.7" width="2.8" height="2.8" fill="#2f6c8e"/><rect x="280.5" y="672.7" width="2.8" height="2.8" fill="#3e4a89"/><rect x="283.0" y="672.7" width="2.8" height="2.8" fill="#482475"/><rect x="285.5" y="672.7" width="5.3" height="2.8" fill="#460a5d"/><rect x="290.5" y="672.7" width="2.8" height="2.8" fill="#481c6e"/><rect x="293.0" y="672.7" width="2.8" height="2.8" fill="#414487"/><rect x="295.5" y="672.7" width="2.8" height="2.8" fill="#31668e"/><rect x="298.0" y="672.7" width="2.8" height="2.8" fill="#25848e"/><rect x="300.5" y="672.7" width="2.8" height="2.8" fill="#1fa287"/><rect x="303.0" y="672.7" width="2.8" height="2.8" fill="#44bf70"/><rect x="305.5" y="672.7" width="2.8" height="2.8" fill="#7ad151"/><rect x="308.0" y="672.7" width="2.8" height="2.8" fill="#addc30"/><rect x="310.5" y="672.7" width="5.3" height="2.8" fill="#fde725"/><rect x="255.5" y="675.2" width="20.3" height="2.8" fill="#414487"/><rect x="275.5" y="675.2" width="2.8" height="2.8" fill="#3e4a89"/><rect x="278.0" y="675.2" width="2.8" height="2.8" fill="#2f6c8e"/><rect x="280.5" y="675.2" width="2.8" height="2.8" fill="#3b528b"/><rect x="283.0" y="675.2" width="2.8" height="2.8" fill="#472d7b"/><rect x="285.5" y="675.2" width="5.3" height="2.8" fill="#471365"/><rect x="290.5" y="675.2" width="2.8" height="2.8" fill="#472d7b"/><rect x="293.0" y="675.2" width="2.8" height="2.8" fill="#3b528b"/><rect x="295.5" y="675.2" width="2.8" height="2.8" fill="#2f6c8e"/><rect x="298.0" y="675.2" width="2.8" height="2.8" fill="#238a8d"/><rect x="300.5" y="675.2" width="2.8" height="2.8" fill="#22a884"/><rect x="303.0" y="675.2" width="2.8" height="2.8" fill="#44bf70"/><rect x="305.5" y="675.2" width="2.8" height="2.8" fill="#7ad151"/><rect x="308.0" y="675.2" width="2.8" height="2.8" fill="#bddf26"/><rect x="310.5" y="675.2" width="2.8" height="2.8" fill="#fde725"/><rect x="255.5" y="677.7" width="20.3" height="2.7" fill="#414487"/><rect x="275.5" y="677.7" width="2.8" height="2.7" fill="#3e4a89"/><rect x="278.0" y="677.7" width="2.8" height="2.7" fill="#2f6c8e"/><rect x="280.5" y="677.7" width="2.8" height="2.7" fill="#355f8d"/><rect x="283.0" y="677.7" width="2.8" height="2.7" fill="#3e4a89"/><rect x="285.5" y="677.7" width="5.3" height="2.7" fill="#463480"/><rect x="290.5" y="677.7" width="2.8" height="2.7" fill="#3e4a89"/><rect x="293.0" y="677.7" width="2.8" height="2.7" fill="#355f8d"/><rect x="295.5" y="677.7" width="2.8" height="2.7" fill="#2a788e"/><rect x="298.0" y="677.7" width="2.8" height="2.7" fill="#1f968b"/><rect x="300.5" y="677.7" width="2.8" height="2.7" fill="#28ae80"/><rect x="303.0" y="677.7" width="2.8" height="2.7" fill="#50c46a"/><rect x="305.5" y="677.7" width="2.8" height="2.7" fill="#8bd646"/><rect x="308.0" y="677.7" width="2.8" height="2.7" fill="#cde11d"/><rect x="310.5" y="677.7" width="2.8" height="2.7" fill="#fde725"/></g>
<polygon points="312.0,680.1 403.6,680.1 403.6,532.7 369.9,532.7" fill="#433e85"/>
<rect x="280.05" y="557.30" width="98.10" height="98.40" fill="none" stroke="#ff0000" stroke-width="1.2"/>
<text x="329.10" y="546.70" font-family="Liberation Sans" font-size="11.13" fill="#ff0000" text-anchor="middle" textLength="7.85" lengthAdjust="spacingAndGlyphs" stroke="#ff0000" stroke-width="0.13">N</text>
<text x="265.40" y="609.90" font-family="Liberation Sans" font-size="11.13" fill="#ff0000" text-anchor="middle" textLength="6.63" lengthAdjust="spacingAndGlyphs" stroke="#ff0000" stroke-width="0.13">E</text>
<line x1="291.50" y1="606.50" x2="320.93" y2="606.50" stroke="#ff0000" stroke-width="1.5"/>
<line x1="337.28" y1="606.50" x2="366.71" y2="606.50" stroke="#ff0000" stroke-width="1.5"/>
<line x1="329.10" y1="568.78" x2="329.10" y2="598.30" stroke="#ff0000" stroke-width="1.5"/>
<line x1="329.10" y1="614.70" x2="329.10" y2="644.22" stroke="#ff0000" stroke-width="1.5"/>
<rect x="255.50" y="532.70" width="148.10" height="147.40" fill="none" stroke="#222" stroke-width="1.1"/>
<line x1="263.70" y1="680.10" x2="263.70" y2="683.60" stroke="#222" stroke-width="0.9"/>
<text x="260.50" y="696.50" font-family="Liberation Sans" font-size="10.81" fill="#000" text-anchor="middle" textLength="15.04" lengthAdjust="spacingAndGlyphs" stroke="#000" stroke-width="0.12">−4</text>
<line x1="252.00" y1="672.10" x2="255.50" y2="672.10" stroke="#222" stroke-width="0.9"/>
<text x="247.90" y="675.80" font-family="Liberation Sans" font-size="10.81" fill="#000" text-anchor="end" textLength="15.04" lengthAdjust="spacingAndGlyphs" stroke="#000" stroke-width="0.12">−4</text>
<line x1="296.40" y1="680.10" x2="296.40" y2="683.60" stroke="#222" stroke-width="0.9"/>
<text x="293.20" y="696.50" font-family="Liberation Sans" font-size="10.81" fill="#000" text-anchor="middle" textLength="15.04" lengthAdjust="spacingAndGlyphs" stroke="#000" stroke-width="0.12">−2</text>
<line x1="252.00" y1="639.30" x2="255.50" y2="639.30" stroke="#222" stroke-width="0.9"/>
<text x="247.90" y="643.00" font-family="Liberation Sans" font-size="10.81" fill="#000" text-anchor="end" textLength="15.04" lengthAdjust="spacingAndGlyphs" stroke="#000" stroke-width="0.12">−2</text>
<line x1="329.10" y1="680.10" x2="329.10" y2="683.60" stroke="#222" stroke-width="0.9"/>
<text x="329.10" y="696.50" font-family="Liberation Sans" font-size="10.81" fill="#000" text-anchor="middle" textLength="6.49" lengthAdjust="spacingAndGlyphs" stroke="#000" stroke-width="0.12">0</text>
<line x1="252.00" y1="606.50" x2="255.50" y2="606.50" stroke="#222" stroke-width="0.9"/>
<text x="247.90" y="610.20" font-family="Liberation Sans" font-size="10.81" fill="#000" text-anchor="end" textLength="6.49" lengthAdjust="spacingAndGlyphs" stroke="#000" stroke-width="0.12">0</text>
<line x1="361.80" y1="680.10" x2="361.80" y2="683.60" stroke="#222" stroke-width="0.9"/>
<text x="361.80" y="696.50" font-family="Liberation Sans" font-size="10.81" fill="#000" text-anchor="middle" textLength="6.49" lengthAdjust="spacingAndGlyphs" stroke="#000" stroke-width="0.12">2</text>
<line x1="252.00" y1="573.70" x2="255.50" y2="573.70" stroke="#222" stroke-width="0.9"/>
<text x="247.90" y="577.40" font-family="Liberation Sans" font-size="10.81" fill="#000" text-anchor="end" textLength="6.49" lengthAdjust="spacingAndGlyphs" stroke="#000" stroke-width="0.12">2</text>
<line x1="394.50" y1="680.10" x2="394.50" y2="683.60" stroke="#222" stroke-width="0.9"/>
<text x="394.50" y="696.50" font-family="Liberation Sans" font-size="10.81" fill="#000" text-anchor="middle" textLength="6.49" lengthAdjust="spacingAndGlyphs" stroke="#000" stroke-width="0.12">4</text>
<line x1="252.00" y1="540.90" x2="255.50" y2="540.90" stroke="#222" stroke-width="0.9"/>
<text x="247.90" y="544.60" font-family="Liberation Sans" font-size="10.81" fill="#000" text-anchor="end" textLength="6.49" lengthAdjust="spacingAndGlyphs" stroke="#000" stroke-width="0.12">4</text>
<text x="329.55" y="525.70" font-family="Liberation Sans" font-size="13.25" fill="#000" text-anchor="middle" textLength="79.6" lengthAdjust="spacingAndGlyphs" stroke="#000" stroke-width="0.15">Lineflux Map</text>
<text x="329.20" y="706.80" font-family="Liberation Sans" font-size="11.34" fill="#000" text-anchor="middle" textLength="100.67" lengthAdjust="spacingAndGlyphs" stroke="#000" stroke-width="0.13">s/b: 3.71 +/- 0.153</text>
<rect x="440.50" y="532.60" width="148.50" height="147.70" fill="#ccc" filter="url(#nzbg)"/>
<circle cx="508.3" cy="603" r="29" fill="url(#blobH)"/>
<circle cx="508.8" cy="603.3" r="24.6" fill="none" stroke="#f5c518" stroke-width="1.5"/>
<rect x="503.30" y="596.20" width="12.50" height="12.00" fill="none" stroke="#0000ff" stroke-width="1.3"/>
<rect x="465.45" y="557.30" width="98.10" height="98.40" fill="none" stroke="#ff0000" stroke-width="1.2"/>
<text x="514.50" y="546.70" font-family="Liberation Sans" font-size="11.13" fill="#ff0000" text-anchor="middle" textLength="7.85" lengthAdjust="spacingAndGlyphs" stroke="#ff0000" stroke-width="0.13">N</text>
<text x="450.80" y="609.90" font-family="Liberation Sans" font-size="11.13" fill="#ff0000" text-anchor="middle" textLength="6.63" lengthAdjust="spacingAndGlyphs" stroke="#ff0000" stroke-width="0.13">E</text>
<line x1="476.89" y1="606.50" x2="506.32" y2="606.50" stroke="#ff0000" stroke-width="1.5"/>
<line x1="522.67" y1="606.50" x2="552.11" y2="606.50" stroke="#ff0000" stroke-width="1.5"/>
<line x1="514.50" y1="568.78" x2="514.50" y2="598.30" stroke="#ff0000" stroke-width="1.5"/>
<line x1="514.50" y1="614.70" x2="514.50" y2="644.22" stroke="#ff0000" stroke-width="1.5"/>
<rect x="440.50" y="532.60" width="148.50" height="147.70" fill="none" stroke="#222" stroke-width="1.1"/>
<line x1="449.10" y1="680.30" x2="449.10" y2="683.80" stroke="#222" stroke-width="0.9"/>
<text x="445.90" y="696.50" font-family="Liberation Sans" font-size="10.81" fill="#000" text-anchor="middle" textLength="15.04" lengthAdjust="spacingAndGlyphs" stroke="#000" stroke-width="0.12">−4</text>
<line x1="437.00" y1="672.10" x2="440.50" y2="672.10" stroke="#222" stroke-width="0.9"/>
<text x="432.90" y="675.80" font-family="Liberation Sans" font-size="10.81" fill="#000" text-anchor="end" textLength="15.04" lengthAdjust="spacingAndGlyphs" stroke="#000" stroke-width="0.12">−4</text>
<line x1="481.80" y1="680.30" x2="481.80" y2="683.80" stroke="#222" stroke-width="0.9"/>
<text x="478.60" y="696.50" font-family="Liberation Sans" font-size="10.81" fill="#000" text-anchor="middle" textLength="15.04" lengthAdjust="spacingAndGlyphs" stroke="#000" stroke-width="0.12">−2</text>
<line x1="437.00" y1="639.30" x2="440.50" y2="639.30" stroke="#222" stroke-width="0.9"/>
<text x="432.90" y="643.00" font-family="Liberation Sans" font-size="10.81" fill="#000" text-anchor="end" textLength="15.04" lengthAdjust="spacingAndGlyphs" stroke="#000" stroke-width="0.12">−2</text>
<line x1="514.50" y1="680.30" x2="514.50" y2="683.80" stroke="#222" stroke-width="0.9"/>
<text x="514.50" y="696.50" font-family="Liberation Sans" font-size="10.81" fill="#000" text-anchor="middle" textLength="6.49" lengthAdjust="spacingAndGlyphs" stroke="#000" stroke-width="0.12">0</text>
<line x1="437.00" y1="606.50" x2="440.50" y2="606.50" stroke="#222" stroke-width="0.9"/>
<text x="432.90" y="610.20" font-family="Liberation Sans" font-size="10.81" fill="#000" text-anchor="end" textLength="6.49" lengthAdjust="spacingAndGlyphs" stroke="#000" stroke-width="0.12">0</text>
<line x1="547.20" y1="680.30" x2="547.20" y2="683.80" stroke="#222" stroke-width="0.9"/>
<text x="547.20" y="696.50" font-family="Liberation Sans" font-size="10.81" fill="#000" text-anchor="middle" textLength="6.49" lengthAdjust="spacingAndGlyphs" stroke="#000" stroke-width="0.12">2</text>
<line x1="437.00" y1="573.70" x2="440.50" y2="573.70" stroke="#222" stroke-width="0.9"/>
<text x="432.90" y="577.40" font-family="Liberation Sans" font-size="10.81" fill="#000" text-anchor="end" textLength="6.49" lengthAdjust="spacingAndGlyphs" stroke="#000" stroke-width="0.12">2</text>
<line x1="579.90" y1="680.30" x2="579.90" y2="683.80" stroke="#222" stroke-width="0.9"/>
<text x="579.90" y="696.50" font-family="Liberation Sans" font-size="10.81" fill="#000" text-anchor="middle" textLength="6.49" lengthAdjust="spacingAndGlyphs" stroke="#000" stroke-width="0.12">4</text>
<line x1="437.00" y1="540.90" x2="440.50" y2="540.90" stroke="#222" stroke-width="0.9"/>
<text x="432.90" y="544.60" font-family="Liberation Sans" font-size="10.81" fill="#000" text-anchor="end" textLength="6.49" lengthAdjust="spacingAndGlyphs" stroke="#000" stroke-width="0.12">4</text>
<text x="514.75" y="525.70" font-family="Liberation Sans" font-size="13.25" fill="#000" text-anchor="middle" textLength="72.76" lengthAdjust="spacingAndGlyphs" stroke="#000" stroke-width="0.15">HSC(26.2) r</text>
<text x="514.20" y="706.90" font-family="Liberation Sans" font-size="11.34" fill="#000" text-anchor="middle" textLength="119.1" lengthAdjust="spacingAndGlyphs" stroke="#000" stroke-width="0.13">m:19.4  re:1.5"  s:0.4"</text>
<text x="514.20" y="718.70" font-family="Liberation Sans" font-size="11.34" fill="#000" text-anchor="middle" textLength="106.49" lengthAdjust="spacingAndGlyphs" stroke="#000" stroke-width="0.13">EWr: 0, PLAE: 0.018</text>
<text transform="translate(70.30,786.20) scale(1,1.04)" font-family="Liberation Mono" font-size="13.04" fill="#000" stroke="#000" stroke-width="0.1">Separation</text>
<text transform="translate(70.30,800.40) scale(1,1.04)" font-family="Liberation Mono" font-size="13.04" fill="#000" stroke="#000" stroke-width="0.1">Match score</text>
<text transform="translate(70.30,815.50) scale(1,1.04)" font-family="Liberation Mono" font-size="13.04" fill="#000" stroke="#000" stroke-width="0.1">RA, Dec</text>
<text transform="translate(70.30,829.80) scale(1,1.04)" font-family="Liberation Mono" font-size="13.04" fill="#000" stroke="#000" stroke-width="0.1">Spec z</text>
<text transform="translate(70.30,844.50) scale(1,1.04)" font-family="Liberation Mono" font-size="13.04" fill="#000" stroke="#000" stroke-width="0.1">Photo z</text>
<text transform="translate(70.30,858.80) scale(1,1.04)" font-family="Liberation Mono" font-size="13.04" fill="#000" stroke="#000" stroke-width="0.1">Est LyA rest-EW</text>
<text transform="translate(70.30,873.40) scale(1,1.04)" font-family="Liberation Mono" font-size="13.04" fill="#000" stroke="#000" stroke-width="0.1">mag</text>
<text transform="translate(70.30,888.60) scale(1,1.04)" font-family="Liberation Mono" font-size="13.04" fill="#000" stroke="#000" stroke-width="0.1">P(LAE)/P(OII)</text>
<text transform="translate(287.30,779.10) scale(1,1.04)" font-family="Liberation Mono" font-size="13.04" fill="#0000ff" stroke="#0000ff" stroke-width="0.1">0.427724"</text>
<text transform="translate(287.30,793.50) scale(1,1.04)" font-family="Liberation Mono" font-size="13.04" fill="#0000ff" stroke="#0000ff" stroke-width="0.1">1.000</text>
<text transform="translate(287.30,808.20) scale(1,1.04)" font-family="Liberation Mono" font-size="13.04" fill="#0000ff" stroke="#0000ff" stroke-width="0.1">201.557493, 53.735277</text>
<text transform="translate(287.30,822.50) scale(1,1.04)" font-family="Liberation Mono" font-size="13.04" fill="#0000ff" stroke="#0000ff" stroke-width="0.1">N/A</text>
<text transform="translate(287.30,837.10) scale(1,1.04)" font-family="Liberation Mono" font-size="13.04" fill="#0000ff" stroke="#0000ff" stroke-width="0.1">N/A</text>
<text transform="translate(287.30,854.00) scale(1,1.04)" font-family="Liberation Mono" font-size="13.04" fill="#0000ff" stroke="#0000ff" stroke-width="0.1">0.51(<tspan dx="1.55">±</tspan><tspan dx="1.55">0</tspan>.20)<tspan dx="0.55" font-style="italic">Å</tspan></text>
<text transform="translate(287.30,869.90) scale(1,1.04)" font-family="Liberation Mono" font-size="13.04" fill="#0000ff" stroke="#0000ff" stroke-width="0.1">19.44(19.44,19.45)R</text>
<text x="287.30" y="886.40" font-family="Liberation Sans" font-size="13.25" fill="#0000ff" textLength="27.83" lengthAdjust="spacingAndGlyphs" stroke="#0000ff" stroke-width="0.15">0.02</text>
<text x="319.80" y="882.00" font-family="Liberation Sans" font-size="9.22" fill="#0000ff" textLength="24.91" lengthAdjust="spacingAndGlyphs" stroke="#0000ff" stroke-width="0.10">0.039</text>
<text x="319.80" y="890.20" font-family="Liberation Sans" font-size="9.22" fill="#0000ff" textLength="19.37" lengthAdjust="spacingAndGlyphs" stroke="#0000ff" stroke-width="0.10">0.01</text>
<text transform="translate(939.20,821.20) scale(1,1.04)" font-family="Liberation Mono" font-size="13.04" fill="#000" stroke="#000" stroke-width="0.1">Phot z plot not available.</text></svg></body></html>
